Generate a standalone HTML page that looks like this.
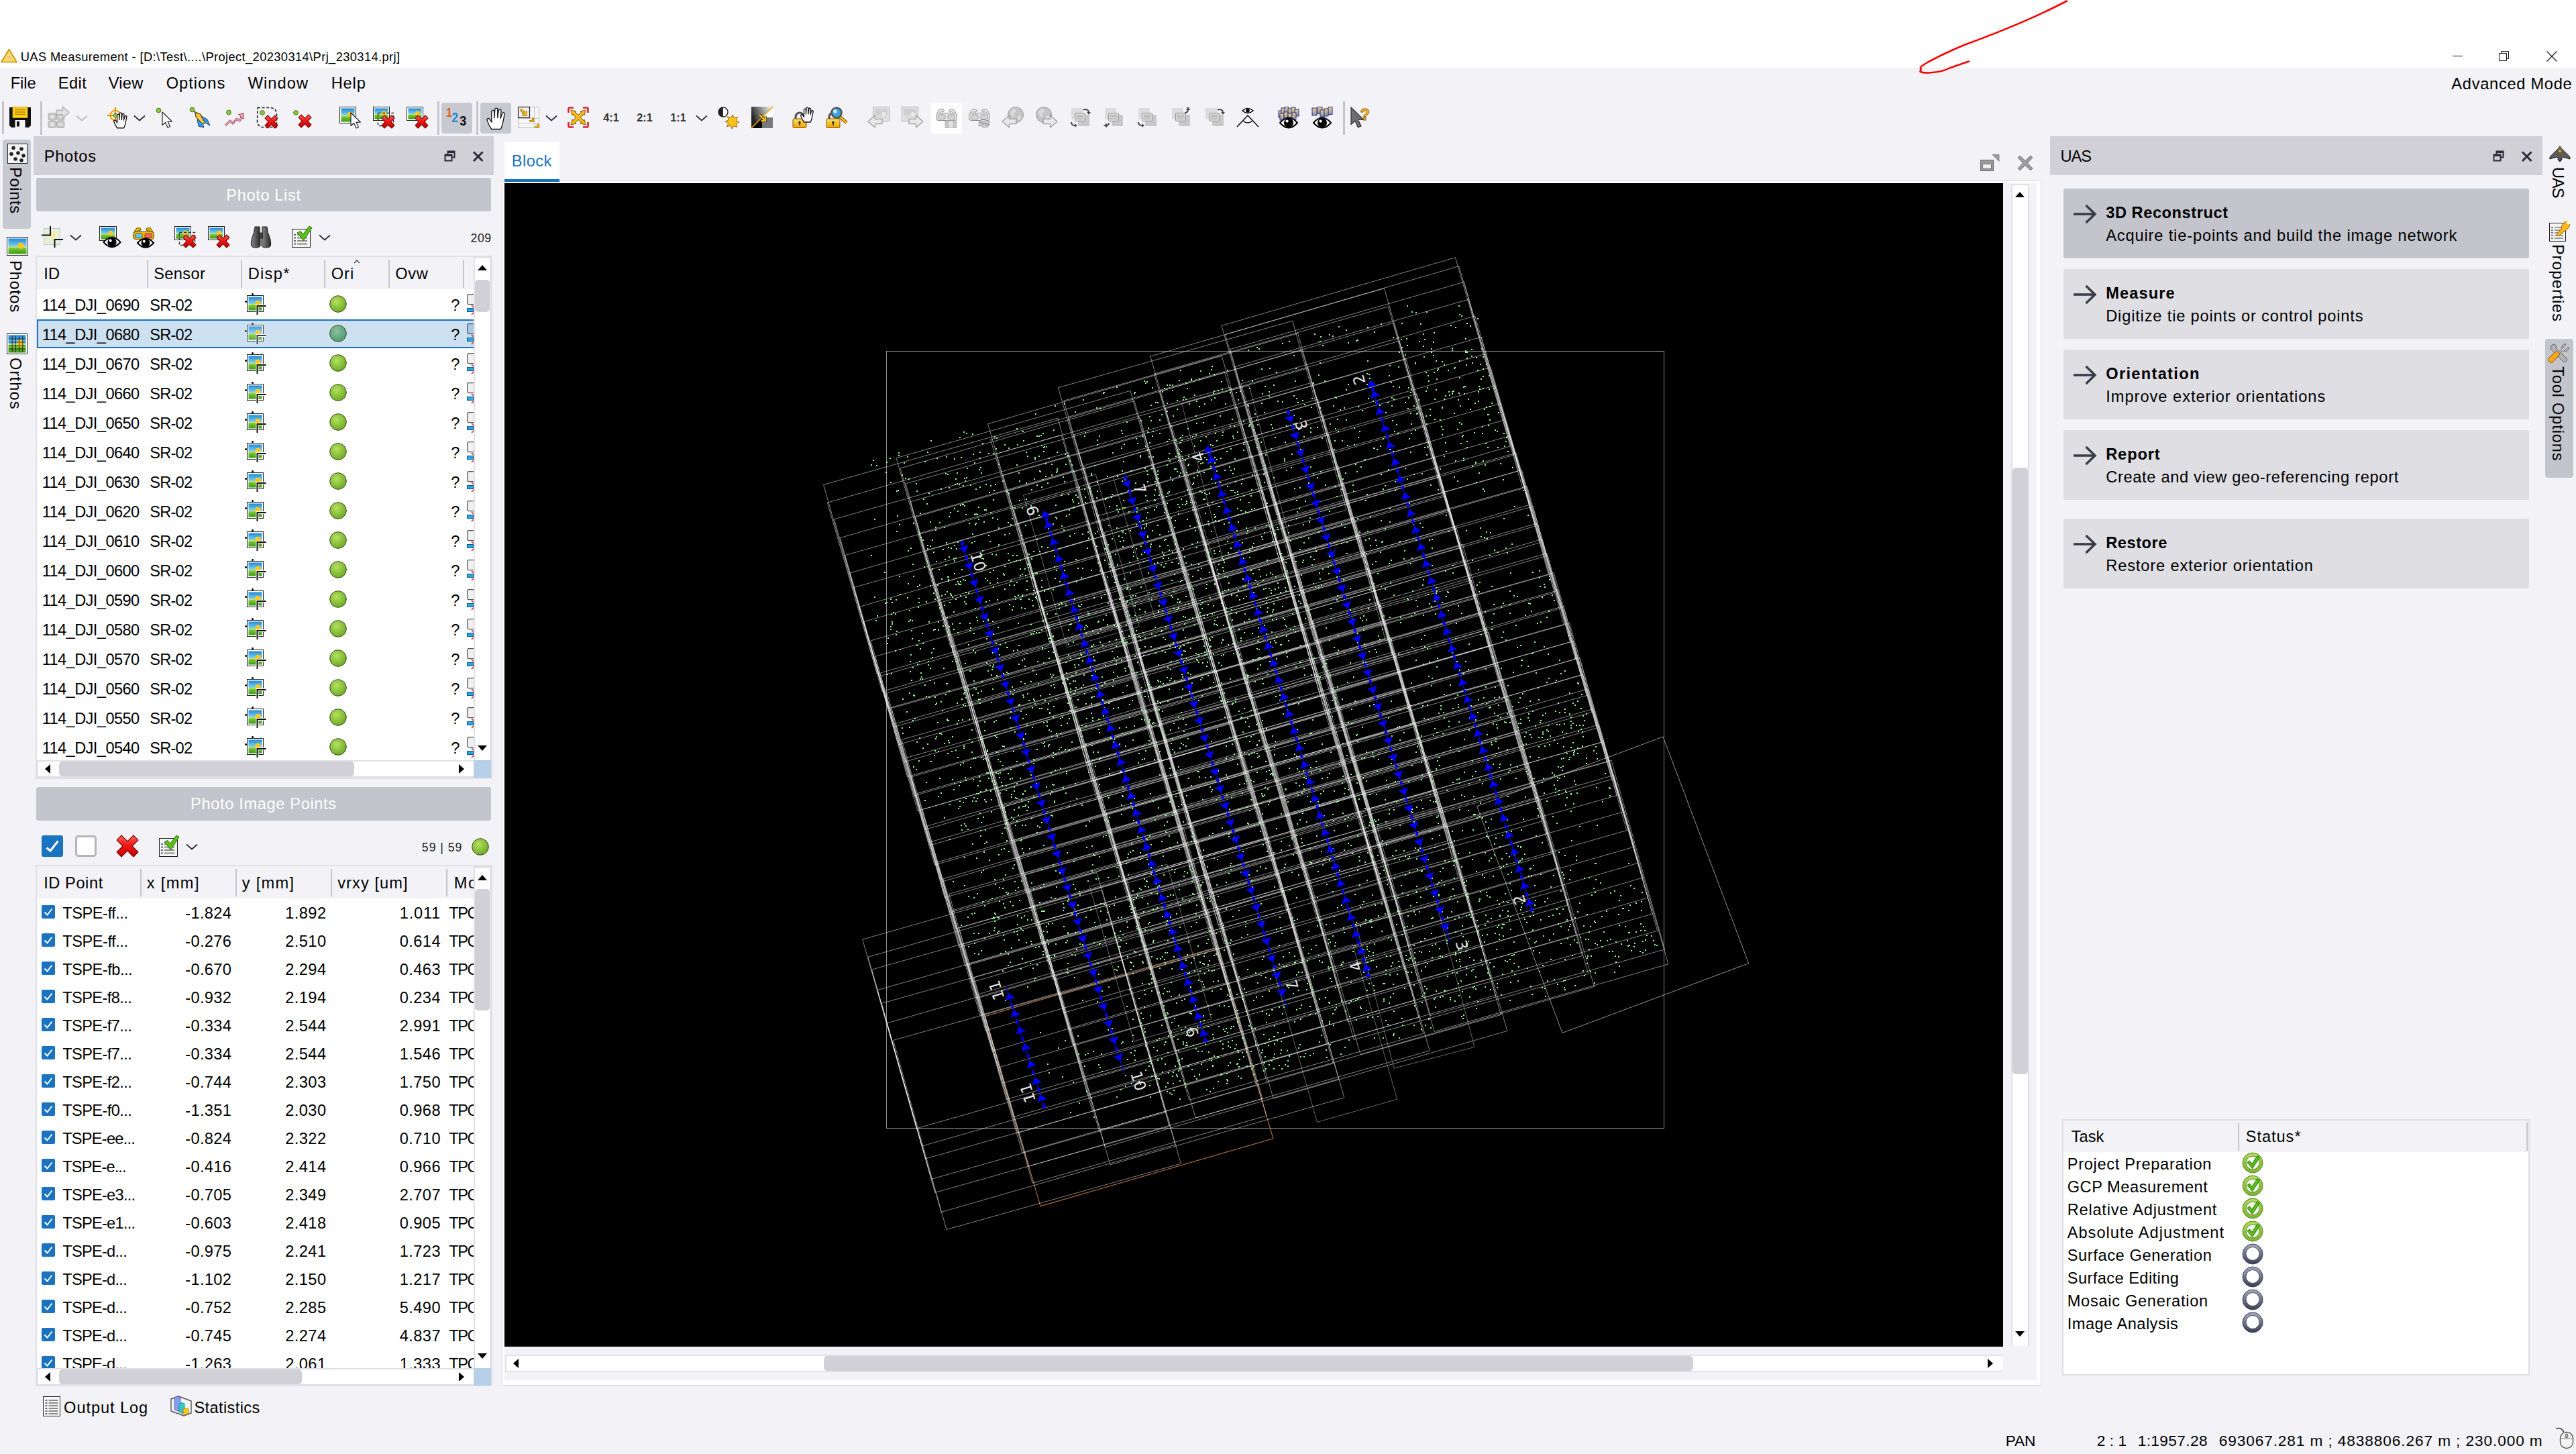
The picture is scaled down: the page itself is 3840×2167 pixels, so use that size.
<!DOCTYPE html>
<html><head><meta charset="utf-8"><title>UAS Measurement</title>
<style>
html,body{margin:0;padding:0}
body{width:3840px;height:2167px;position:relative;overflow:hidden;background:#f3f3f7;font-family:"Liberation Sans",sans-serif}
.b{position:absolute;display:block}
.t{position:absolute;display:block;line-height:1;white-space:pre}
</style></head><body>
<div class="b" style="left:0px;top:0px;width:3840px;height:101px;background:#fff;"></div>
<span class="t" style="font-size:18.32px;letter-spacing:0.379px;color:#000;left:30.70px;top:76.00px;">UAS Measurement - [D:\Test\....\Project_20230314\Prj_230314.prj]</span>
<div class="b" style="left:3656px;top:83px;width:15px;height:1px;background:#111;"></div>
<svg class="b" style="left:3724px;top:75px;" width="18" height="18" viewBox="0 0 18 18"><path d="M1.5 4.5h11v11h-11zM4.5 4.5v-3h11v11h-3" fill="none" stroke="#111" stroke-width="1"/></svg>
<svg class="b" style="left:3795px;top:75px;" width="18" height="18" viewBox="0 0 18 18"><path d="M1.5 1.5l15 15M16.5 1.5l-15 15" fill="none" stroke="#111" stroke-width="1.1"/></svg>
<svg class="b" style="left:2840px;top:0px;" width="260" height="120" viewBox="0 0 260 120"><path d="M241 1.5 C190 28 140 48 88 67 C60 79 40 89 30 95 C25 98 22 100 23 102 C25 104 22 105 22.5 106.5 C24 108 30 108.8 38 108.3 C50 107.5 60 105 66 101.5 C76 98 86 94.5 95 91.5" fill="none" stroke="#f00" stroke-width="2.6" stroke-linecap="round" stroke-linejoin="round"/></svg>
<span class="t" style="font-size:23.64px;letter-spacing:-0.025px;color:#000;left:15.70px;top:113.00px;">File</span>
<span class="t" style="font-size:23.64px;letter-spacing:0.466px;color:#000;left:86.70px;top:113.00px;">Edit</span>
<span class="t" style="font-size:23.64px;letter-spacing:0.298px;color:#000;left:161.70px;top:113.00px;">View</span>
<span class="t" style="font-size:23.64px;letter-spacing:1.021px;color:#000;left:247.70px;top:113.00px;">Options</span>
<span class="t" style="font-size:23.64px;letter-spacing:1.055px;color:#000;left:369.70px;top:113.00px;">Window</span>
<span class="t" style="font-size:23.64px;letter-spacing:0.832px;color:#000;left:493.70px;top:113.00px;">Help</span>
<span class="t" style="font-size:23.64px;letter-spacing:0.716px;color:#000;left:3654.34px;top:114.00px;">Advanced Mode</span>
<div class="b" style="left:3px;top:151px;width:3px;height:49px;background:#c4c4cc;"></div>
<div class="b" style="left:60px;top:151px;width:3px;height:49.5px;background:#c4c4cc;"></div>
<div class="b" style="left:652px;top:151px;width:3px;height:49.5px;background:#c4c4cc;"></div>
<div class="b" style="left:710px;top:151px;width:3px;height:49.5px;background:#c4c4cc;"></div>
<div class="b" style="left:2001.5px;top:151px;width:3.0px;height:49.5px;background:#c4c4cc;"></div>
<div class="b" style="left:658px;top:153px;width:46px;height:46px;background:#c8c8d0;border-radius:4px"></div>
<div class="b" style="left:716px;top:153px;width:46px;height:46px;background:#c8c8d0;border-radius:4px"></div>
<div class="b" style="left:1388px;top:153px;width:46px;height:46px;background:#fff;border-radius:4px"></div>
<div class="b" style="left:4px;top:207.5px;width:42px;height:133.0px;background:#c8c8d0;border-radius:4px"></div>
<span class="t" style="font-size:23.64px;letter-spacing:0.661px;color:#000;left:34.31px;top:249.20px;transform-origin:0 0;transform:rotate(90deg);">Points</span>
<span class="t" style="font-size:23.64px;letter-spacing:0.749px;color:#000;left:34.31px;top:388.20px;transform-origin:0 0;transform:rotate(90deg);">Photos</span>
<span class="t" style="font-size:23.64px;letter-spacing:1.115px;color:#000;left:34.31px;top:533.20px;transform-origin:0 0;transform:rotate(90deg);">Orthos</span>
<div class="b" style="left:50px;top:203px;width:686px;height:57.5px;background:#d0d0d6;"></div>
<span class="t" style="font-size:23.64px;letter-spacing:0.749px;color:#000;left:65.70px;top:222.00px;">Photos</span>
<div class="b" style="left:54px;top:265px;width:678px;height:49.5px;background:#c4c4cc;border-radius:3px"></div>
<span class="t" style="font-size:23.64px;letter-spacing:0.619px;color:#fff;left:337.34px;top:280.00px;">Photo List</span>
<span class="t" style="font-size:17.73px;letter-spacing:0.431px;color:#222;left:701.62px;top:347.00px;">209</span>
<div class="b" style="left:52.5px;top:381px;width:681.5px;height:779.5px;background:#e0e0e6;"></div>
<div class="b" style="left:54.5px;top:383px;width:651.5px;height:48px;background:#f3f3f7;"></div>
<div class="b" style="left:54.5px;top:431px;width:651.5px;height:702px;background:#fff;"></div>
<div class="b" style="left:219px;top:387px;width:2px;height:42px;background:#c4c4cc;"></div>
<div class="b" style="left:359px;top:387px;width:2px;height:42px;background:#c4c4cc;"></div>
<div class="b" style="left:482.5px;top:387px;width:2.0px;height:42px;background:#c4c4cc;"></div>
<div class="b" style="left:579px;top:387px;width:2px;height:42px;background:#c4c4cc;"></div>
<div class="b" style="left:689.7px;top:387px;width:2.0px;height:42px;background:#c4c4cc;"></div>
<span class="t" style="font-size:23.64px;letter-spacing:0.274px;color:#000;left:65.20px;top:397.00px;">ID</span>
<span class="t" style="font-size:23.64px;letter-spacing:0.367px;color:#000;left:229.20px;top:397.00px;">Sensor</span>
<span class="t" style="font-size:23.64px;letter-spacing:1.295px;color:#000;left:369.70px;top:397.00px;">Disp*</span>
<span class="t" style="font-size:23.64px;letter-spacing:1.016px;color:#000;left:493.70px;top:397.00px;">Ori</span>
<span class="t" style="font-size:23.64px;letter-spacing:0.701px;color:#000;left:589.20px;top:397.00px;">Ovw</span>
<svg class="b" style="left:527px;top:387px;" width="10" height="6" viewBox="0 0 10 6"><path d="M1 5L5 1L9 5" fill="none" stroke="#333" stroke-width="1.2"/></svg>
<div class="b" style="left:54.5px;top:475.5px;width:651.5px;height:43.5px;background:#1a73c0;"></div>
<div class="b" style="left:56.5px;top:477.5px;width:649.5px;height:39.5px;background:#cde0f0;"></div>
<span class="t" style="font-size:23.64px;letter-spacing:-0.586px;color:#000;left:62.70px;top:444.00px;">114_DJI_0690</span>
<span class="t" style="font-size:23.64px;letter-spacing:-0.766px;color:#000;left:223.20px;top:444.00px;">SR-02</span>
<span class="t" style="font-size:23.64px;letter-spacing:-2.847px;color:#000;left:672.20px;top:444.00px;">?</span>
<span class="t" style="font-size:23.64px;letter-spacing:-0.586px;color:#000;left:62.70px;top:488.00px;">114_DJI_0680</span>
<span class="t" style="font-size:23.64px;letter-spacing:-0.766px;color:#000;left:223.20px;top:488.00px;">SR-02</span>
<span class="t" style="font-size:23.64px;letter-spacing:-2.847px;color:#000;left:672.20px;top:488.00px;">?</span>
<span class="t" style="font-size:23.64px;letter-spacing:-0.586px;color:#000;left:62.70px;top:532.00px;">114_DJI_0670</span>
<span class="t" style="font-size:23.64px;letter-spacing:-0.766px;color:#000;left:223.20px;top:532.00px;">SR-02</span>
<span class="t" style="font-size:23.64px;letter-spacing:-2.847px;color:#000;left:672.20px;top:532.00px;">?</span>
<span class="t" style="font-size:23.64px;letter-spacing:-0.586px;color:#000;left:62.70px;top:576.00px;">114_DJI_0660</span>
<span class="t" style="font-size:23.64px;letter-spacing:-0.766px;color:#000;left:223.20px;top:576.00px;">SR-02</span>
<span class="t" style="font-size:23.64px;letter-spacing:-2.847px;color:#000;left:672.20px;top:576.00px;">?</span>
<span class="t" style="font-size:23.64px;letter-spacing:-0.586px;color:#000;left:62.70px;top:620.00px;">114_DJI_0650</span>
<span class="t" style="font-size:23.64px;letter-spacing:-0.766px;color:#000;left:223.20px;top:620.00px;">SR-02</span>
<span class="t" style="font-size:23.64px;letter-spacing:-2.847px;color:#000;left:672.20px;top:620.00px;">?</span>
<span class="t" style="font-size:23.64px;letter-spacing:-0.586px;color:#000;left:62.70px;top:664.00px;">114_DJI_0640</span>
<span class="t" style="font-size:23.64px;letter-spacing:-0.766px;color:#000;left:223.20px;top:664.00px;">SR-02</span>
<span class="t" style="font-size:23.64px;letter-spacing:-2.847px;color:#000;left:672.20px;top:664.00px;">?</span>
<span class="t" style="font-size:23.64px;letter-spacing:-0.586px;color:#000;left:62.70px;top:708.00px;">114_DJI_0630</span>
<span class="t" style="font-size:23.64px;letter-spacing:-0.766px;color:#000;left:223.20px;top:708.00px;">SR-02</span>
<span class="t" style="font-size:23.64px;letter-spacing:-2.847px;color:#000;left:672.20px;top:708.00px;">?</span>
<span class="t" style="font-size:23.64px;letter-spacing:-0.586px;color:#000;left:62.70px;top:752.00px;">114_DJI_0620</span>
<span class="t" style="font-size:23.64px;letter-spacing:-0.766px;color:#000;left:223.20px;top:752.00px;">SR-02</span>
<span class="t" style="font-size:23.64px;letter-spacing:-2.847px;color:#000;left:672.20px;top:752.00px;">?</span>
<span class="t" style="font-size:23.64px;letter-spacing:-0.586px;color:#000;left:62.70px;top:796.00px;">114_DJI_0610</span>
<span class="t" style="font-size:23.64px;letter-spacing:-0.766px;color:#000;left:223.20px;top:796.00px;">SR-02</span>
<span class="t" style="font-size:23.64px;letter-spacing:-2.847px;color:#000;left:672.20px;top:796.00px;">?</span>
<span class="t" style="font-size:23.64px;letter-spacing:-0.586px;color:#000;left:62.70px;top:840.00px;">114_DJI_0600</span>
<span class="t" style="font-size:23.64px;letter-spacing:-0.766px;color:#000;left:223.20px;top:840.00px;">SR-02</span>
<span class="t" style="font-size:23.64px;letter-spacing:-2.847px;color:#000;left:672.20px;top:840.00px;">?</span>
<span class="t" style="font-size:23.64px;letter-spacing:-0.586px;color:#000;left:62.70px;top:884.00px;">114_DJI_0590</span>
<span class="t" style="font-size:23.64px;letter-spacing:-0.766px;color:#000;left:223.20px;top:884.00px;">SR-02</span>
<span class="t" style="font-size:23.64px;letter-spacing:-2.847px;color:#000;left:672.20px;top:884.00px;">?</span>
<span class="t" style="font-size:23.64px;letter-spacing:-0.586px;color:#000;left:62.70px;top:928.00px;">114_DJI_0580</span>
<span class="t" style="font-size:23.64px;letter-spacing:-0.766px;color:#000;left:223.20px;top:928.00px;">SR-02</span>
<span class="t" style="font-size:23.64px;letter-spacing:-2.847px;color:#000;left:672.20px;top:928.00px;">?</span>
<span class="t" style="font-size:23.64px;letter-spacing:-0.586px;color:#000;left:62.70px;top:972.00px;">114_DJI_0570</span>
<span class="t" style="font-size:23.64px;letter-spacing:-0.766px;color:#000;left:223.20px;top:972.00px;">SR-02</span>
<span class="t" style="font-size:23.64px;letter-spacing:-2.847px;color:#000;left:672.20px;top:972.00px;">?</span>
<span class="t" style="font-size:23.64px;letter-spacing:-0.586px;color:#000;left:62.70px;top:1016.00px;">114_DJI_0560</span>
<span class="t" style="font-size:23.64px;letter-spacing:-0.766px;color:#000;left:223.20px;top:1016.00px;">SR-02</span>
<span class="t" style="font-size:23.64px;letter-spacing:-2.847px;color:#000;left:672.20px;top:1016.00px;">?</span>
<span class="t" style="font-size:23.64px;letter-spacing:-0.586px;color:#000;left:62.70px;top:1060.00px;">114_DJI_0550</span>
<span class="t" style="font-size:23.64px;letter-spacing:-0.766px;color:#000;left:223.20px;top:1060.00px;">SR-02</span>
<span class="t" style="font-size:23.64px;letter-spacing:-2.847px;color:#000;left:672.20px;top:1060.00px;">?</span>
<span class="t" style="font-size:23.64px;letter-spacing:-0.586px;color:#000;left:62.70px;top:1104.00px;">114_DJI_0540</span>
<span class="t" style="font-size:23.64px;letter-spacing:-0.766px;color:#000;left:223.20px;top:1104.00px;">SR-02</span>
<span class="t" style="font-size:23.64px;letter-spacing:-2.847px;color:#000;left:672.20px;top:1104.00px;">?</span>
<div class="b" style="left:705.7px;top:383px;width:26.5px;height:750px;background:#e0e0e6;"></div>
<div class="b" style="left:707.7px;top:385px;width:22.5px;height:748px;background:#fff;"></div>
<svg class="b" style="left:711.7px;top:395px;" width="14" height="8" viewBox="0 0 14 8"><path d="M0 8L7 0L14 8z" fill="#000"/></svg>
<svg class="b" style="left:711.7px;top:1111px;" width="14" height="8" viewBox="0 0 14 8"><path d="M0 0L7 8L14 0z" fill="#000"/></svg>
<div class="b" style="left:707.7px;top:417px;width:22.5px;height:47.5px;background:#d0d0d6;border-radius:5px"></div>
<div class="b" style="left:54.5px;top:1133px;width:651.5px;height:26px;background:#e0e0e6;"></div>
<div class="b" style="left:56.5px;top:1135px;width:649.5px;height:22px;background:#fff;"></div>
<svg class="b" style="left:66.5px;top:1139px;" width="8" height="14" viewBox="0 0 8 14"><path d="M8 0L0 7L8 14z" fill="#000"/></svg>
<svg class="b" style="left:684px;top:1139px;" width="8" height="14" viewBox="0 0 8 14"><path d="M0 0L8 7L0 14z" fill="#000"/></svg>
<div class="b" style="left:88px;top:1135px;width:440px;height:22px;background:#d0d0d6;border-radius:5px"></div>
<div class="b" style="left:705.6px;top:1133.4px;width:26.399999999999977px;height:25.59999999999991px;background:#b4cfe6;"></div>
<div class="b" style="left:54px;top:1173px;width:678px;height:49.5px;background:#c4c4cc;border-radius:3px"></div>
<span class="t" style="font-size:23.64px;letter-spacing:0.635px;color:#fff;left:284.12px;top:1187.00px;">Photo Image Points</span>
<span class="t" style="font-size:17.73px;letter-spacing:0.933px;color:#222;left:628.87px;top:1255.00px;">59 | 59</span>
<div class="b" style="left:52.5px;top:1289px;width:681.5px;height:777px;background:#e0e0e6;"></div>
<div class="b" style="left:54.5px;top:1291px;width:651.5px;height:48px;background:#f3f3f7;"></div>
<div class="b" style="left:54.5px;top:1339px;width:651.5px;height:700px;background:#fff;"></div>
<div class="b" style="left:208.75px;top:1295px;width:2.0px;height:41px;background:#c4c4cc;"></div>
<div class="b" style="left:350.75px;top:1295px;width:2.0px;height:41px;background:#c4c4cc;"></div>
<div class="b" style="left:492.5px;top:1295px;width:2.0px;height:41px;background:#c4c4cc;"></div>
<div class="b" style="left:664.5px;top:1295px;width:2.0px;height:41px;background:#c4c4cc;"></div>
<span class="t" style="font-size:23.64px;letter-spacing:0.569px;color:#000;left:65.20px;top:1305.00px;">ID Point</span>
<span class="t" style="font-size:23.64px;letter-spacing:1.391px;color:#000;left:218.70px;top:1305.00px;">x [mm]</span>
<span class="t" style="font-size:23.64px;letter-spacing:1.311px;color:#000;left:360.70px;top:1305.00px;">y [mm]</span>
<span class="t" style="font-size:23.64px;letter-spacing:1.078px;color:#000;left:503.20px;top:1305.00px;">vrxy [um]</span>
<div class="b" style="left:54.5px;top:1339px;width:651.5px;height:700px;overflow:hidden">
<svg class="b" style="left:7.5px;top:10.0px" width="20" height="20" viewBox="0 0 20 20"><rect width="20" height="20" rx="2" fill="#1a73c0"/><path d="M4.5 10.5L8.5 14.5L15.5 5.5" fill="none" stroke="#fff" stroke-width="2"/></svg>
<span class="t" style="font-size:23.64px;letter-spacing:-0.463px;color:#000;left:38.70px;top:11.00px;">TSPE-ff...</span>
<span class="t" style="font-size:23.64px;letter-spacing:0.328px;color:#000;left:221.75px;top:11.00px;">-1.824</span>
<span class="t" style="font-size:23.64px;letter-spacing:0.424px;color:#000;left:370.72px;top:11.00px;">1.892</span>
<span class="t" style="font-size:23.64px;letter-spacing:0.775px;color:#000;left:541.22px;top:11.00px;">1.011</span>
<span class="t" style="font-size:23.64px;letter-spacing:-1.472px;color:#000;left:614.70px;top:11.00px;">TPC</span>
<svg class="b" style="left:7.5px;top:52.0px" width="20" height="20" viewBox="0 0 20 20"><rect width="20" height="20" rx="2" fill="#1a73c0"/><path d="M4.5 10.5L8.5 14.5L15.5 5.5" fill="none" stroke="#fff" stroke-width="2"/></svg>
<span class="t" style="font-size:23.64px;letter-spacing:-0.463px;color:#000;left:38.70px;top:53.00px;">TSPE-ff...</span>
<span class="t" style="font-size:23.64px;letter-spacing:0.328px;color:#000;left:221.75px;top:53.00px;">-0.276</span>
<span class="t" style="font-size:23.64px;letter-spacing:0.424px;color:#000;left:370.72px;top:53.00px;">2.510</span>
<span class="t" style="font-size:23.64px;letter-spacing:0.424px;color:#000;left:541.22px;top:53.00px;">0.614</span>
<span class="t" style="font-size:23.64px;letter-spacing:-1.472px;color:#000;left:614.70px;top:53.00px;">TPC</span>
<svg class="b" style="left:7.5px;top:94.0px" width="20" height="20" viewBox="0 0 20 20"><rect width="20" height="20" rx="2" fill="#1a73c0"/><path d="M4.5 10.5L8.5 14.5L15.5 5.5" fill="none" stroke="#fff" stroke-width="2"/></svg>
<span class="t" style="font-size:23.64px;letter-spacing:-0.507px;color:#000;left:38.70px;top:95.00px;">TSPE-fb...</span>
<span class="t" style="font-size:23.64px;letter-spacing:0.328px;color:#000;left:221.75px;top:95.00px;">-0.670</span>
<span class="t" style="font-size:23.64px;letter-spacing:0.424px;color:#000;left:370.72px;top:95.00px;">2.294</span>
<span class="t" style="font-size:23.64px;letter-spacing:0.424px;color:#000;left:541.22px;top:95.00px;">0.463</span>
<span class="t" style="font-size:23.64px;letter-spacing:-1.472px;color:#000;left:614.70px;top:95.00px;">TPC</span>
<svg class="b" style="left:7.5px;top:136.0px" width="20" height="20" viewBox="0 0 20 20"><rect width="20" height="20" rx="2" fill="#1a73c0"/><path d="M4.5 10.5L8.5 14.5L15.5 5.5" fill="none" stroke="#fff" stroke-width="2"/></svg>
<span class="t" style="font-size:23.64px;letter-spacing:-0.605px;color:#000;left:38.70px;top:137.00px;">TSPE-f8...</span>
<span class="t" style="font-size:23.64px;letter-spacing:0.328px;color:#000;left:221.75px;top:137.00px;">-0.932</span>
<span class="t" style="font-size:23.64px;letter-spacing:0.424px;color:#000;left:370.72px;top:137.00px;">2.194</span>
<span class="t" style="font-size:23.64px;letter-spacing:0.424px;color:#000;left:541.22px;top:137.00px;">0.234</span>
<span class="t" style="font-size:23.64px;letter-spacing:-1.472px;color:#000;left:614.70px;top:137.00px;">TPC</span>
<svg class="b" style="left:7.5px;top:178.0px" width="20" height="20" viewBox="0 0 20 20"><rect width="20" height="20" rx="2" fill="#1a73c0"/><path d="M4.5 10.5L8.5 14.5L15.5 5.5" fill="none" stroke="#fff" stroke-width="2"/></svg>
<span class="t" style="font-size:23.64px;letter-spacing:-0.605px;color:#000;left:38.70px;top:179.00px;">TSPE-f7...</span>
<span class="t" style="font-size:23.64px;letter-spacing:0.328px;color:#000;left:221.75px;top:179.00px;">-0.334</span>
<span class="t" style="font-size:23.64px;letter-spacing:0.424px;color:#000;left:370.72px;top:179.00px;">2.544</span>
<span class="t" style="font-size:23.64px;letter-spacing:0.424px;color:#000;left:541.22px;top:179.00px;">2.991</span>
<span class="t" style="font-size:23.64px;letter-spacing:-1.472px;color:#000;left:614.70px;top:179.00px;">TPC</span>
<svg class="b" style="left:7.5px;top:220.0px" width="20" height="20" viewBox="0 0 20 20"><rect width="20" height="20" rx="2" fill="#1a73c0"/><path d="M4.5 10.5L8.5 14.5L15.5 5.5" fill="none" stroke="#fff" stroke-width="2"/></svg>
<span class="t" style="font-size:23.64px;letter-spacing:-0.605px;color:#000;left:38.70px;top:221.00px;">TSPE-f7...</span>
<span class="t" style="font-size:23.64px;letter-spacing:0.328px;color:#000;left:221.75px;top:221.00px;">-0.334</span>
<span class="t" style="font-size:23.64px;letter-spacing:0.424px;color:#000;left:370.72px;top:221.00px;">2.544</span>
<span class="t" style="font-size:23.64px;letter-spacing:0.424px;color:#000;left:541.22px;top:221.00px;">1.546</span>
<span class="t" style="font-size:23.64px;letter-spacing:-1.472px;color:#000;left:614.70px;top:221.00px;">TPC</span>
<svg class="b" style="left:7.5px;top:262.0px" width="20" height="20" viewBox="0 0 20 20"><rect width="20" height="20" rx="2" fill="#1a73c0"/><path d="M4.5 10.5L8.5 14.5L15.5 5.5" fill="none" stroke="#fff" stroke-width="2"/></svg>
<span class="t" style="font-size:23.64px;letter-spacing:-0.605px;color:#000;left:38.70px;top:263.00px;">TSPE-f2...</span>
<span class="t" style="font-size:23.64px;letter-spacing:0.328px;color:#000;left:221.75px;top:263.00px;">-0.744</span>
<span class="t" style="font-size:23.64px;letter-spacing:0.424px;color:#000;left:370.72px;top:263.00px;">2.303</span>
<span class="t" style="font-size:23.64px;letter-spacing:0.424px;color:#000;left:541.22px;top:263.00px;">1.750</span>
<span class="t" style="font-size:23.64px;letter-spacing:-1.472px;color:#000;left:614.70px;top:263.00px;">TPC</span>
<svg class="b" style="left:7.5px;top:304.0px" width="20" height="20" viewBox="0 0 20 20"><rect width="20" height="20" rx="2" fill="#1a73c0"/><path d="M4.5 10.5L8.5 14.5L15.5 5.5" fill="none" stroke="#fff" stroke-width="2"/></svg>
<span class="t" style="font-size:23.64px;letter-spacing:-0.605px;color:#000;left:38.70px;top:305.00px;">TSPE-f0...</span>
<span class="t" style="font-size:23.64px;letter-spacing:0.328px;color:#000;left:221.75px;top:305.00px;">-1.351</span>
<span class="t" style="font-size:23.64px;letter-spacing:0.424px;color:#000;left:370.72px;top:305.00px;">2.030</span>
<span class="t" style="font-size:23.64px;letter-spacing:0.424px;color:#000;left:541.22px;top:305.00px;">0.968</span>
<span class="t" style="font-size:23.64px;letter-spacing:-1.472px;color:#000;left:614.70px;top:305.00px;">TPC</span>
<svg class="b" style="left:7.5px;top:346.0px" width="20" height="20" viewBox="0 0 20 20"><rect width="20" height="20" rx="2" fill="#1a73c0"/><path d="M4.5 10.5L8.5 14.5L15.5 5.5" fill="none" stroke="#fff" stroke-width="2"/></svg>
<span class="t" style="font-size:23.64px;letter-spacing:-0.756px;color:#000;left:38.70px;top:347.00px;">TSPE-ee...</span>
<span class="t" style="font-size:23.64px;letter-spacing:0.328px;color:#000;left:221.75px;top:347.00px;">-0.824</span>
<span class="t" style="font-size:23.64px;letter-spacing:0.424px;color:#000;left:370.72px;top:347.00px;">2.322</span>
<span class="t" style="font-size:23.64px;letter-spacing:0.424px;color:#000;left:541.22px;top:347.00px;">0.710</span>
<span class="t" style="font-size:23.64px;letter-spacing:-1.472px;color:#000;left:614.70px;top:347.00px;">TPC</span>
<svg class="b" style="left:7.5px;top:388.0px" width="20" height="20" viewBox="0 0 20 20"><rect width="20" height="20" rx="2" fill="#1a73c0"/><path d="M4.5 10.5L8.5 14.5L15.5 5.5" fill="none" stroke="#fff" stroke-width="2"/></svg>
<span class="t" style="font-size:23.64px;letter-spacing:-0.875px;color:#000;left:38.70px;top:389.00px;">TSPE-e...</span>
<span class="t" style="font-size:23.64px;letter-spacing:0.328px;color:#000;left:221.75px;top:389.00px;">-0.416</span>
<span class="t" style="font-size:23.64px;letter-spacing:0.424px;color:#000;left:370.72px;top:389.00px;">2.414</span>
<span class="t" style="font-size:23.64px;letter-spacing:0.424px;color:#000;left:541.22px;top:389.00px;">0.966</span>
<span class="t" style="font-size:23.64px;letter-spacing:-1.472px;color:#000;left:614.70px;top:389.00px;">TPC</span>
<svg class="b" style="left:7.5px;top:430.0px" width="20" height="20" viewBox="0 0 20 20"><rect width="20" height="20" rx="2" fill="#1a73c0"/><path d="M4.5 10.5L8.5 14.5L15.5 5.5" fill="none" stroke="#fff" stroke-width="2"/></svg>
<span class="t" style="font-size:23.64px;letter-spacing:-0.730px;color:#000;left:38.70px;top:431.00px;">TSPE-e3...</span>
<span class="t" style="font-size:23.64px;letter-spacing:0.328px;color:#000;left:221.75px;top:431.00px;">-0.705</span>
<span class="t" style="font-size:23.64px;letter-spacing:0.424px;color:#000;left:370.72px;top:431.00px;">2.349</span>
<span class="t" style="font-size:23.64px;letter-spacing:0.424px;color:#000;left:541.22px;top:431.00px;">2.707</span>
<span class="t" style="font-size:23.64px;letter-spacing:-1.472px;color:#000;left:614.70px;top:431.00px;">TPC</span>
<svg class="b" style="left:7.5px;top:472.0px" width="20" height="20" viewBox="0 0 20 20"><rect width="20" height="20" rx="2" fill="#1a73c0"/><path d="M4.5 10.5L8.5 14.5L15.5 5.5" fill="none" stroke="#fff" stroke-width="2"/></svg>
<span class="t" style="font-size:23.64px;letter-spacing:-0.730px;color:#000;left:38.70px;top:473.00px;">TSPE-e1...</span>
<span class="t" style="font-size:23.64px;letter-spacing:0.328px;color:#000;left:221.75px;top:473.00px;">-0.603</span>
<span class="t" style="font-size:23.64px;letter-spacing:0.424px;color:#000;left:370.72px;top:473.00px;">2.418</span>
<span class="t" style="font-size:23.64px;letter-spacing:0.424px;color:#000;left:541.22px;top:473.00px;">0.905</span>
<span class="t" style="font-size:23.64px;letter-spacing:-1.472px;color:#000;left:614.70px;top:473.00px;">TPC</span>
<svg class="b" style="left:7.5px;top:514.0px" width="20" height="20" viewBox="0 0 20 20"><rect width="20" height="20" rx="2" fill="#1a73c0"/><path d="M4.5 10.5L8.5 14.5L15.5 5.5" fill="none" stroke="#fff" stroke-width="2"/></svg>
<span class="t" style="font-size:23.64px;letter-spacing:-0.737px;color:#000;left:38.70px;top:515.00px;">TSPE-d...</span>
<span class="t" style="font-size:23.64px;letter-spacing:0.328px;color:#000;left:221.75px;top:515.00px;">-0.975</span>
<span class="t" style="font-size:23.64px;letter-spacing:0.424px;color:#000;left:370.72px;top:515.00px;">2.241</span>
<span class="t" style="font-size:23.64px;letter-spacing:0.424px;color:#000;left:541.22px;top:515.00px;">1.723</span>
<span class="t" style="font-size:23.64px;letter-spacing:-1.472px;color:#000;left:614.70px;top:515.00px;">TPC</span>
<svg class="b" style="left:7.5px;top:556.0px" width="20" height="20" viewBox="0 0 20 20"><rect width="20" height="20" rx="2" fill="#1a73c0"/><path d="M4.5 10.5L8.5 14.5L15.5 5.5" fill="none" stroke="#fff" stroke-width="2"/></svg>
<span class="t" style="font-size:23.64px;letter-spacing:-0.737px;color:#000;left:38.70px;top:557.00px;">TSPE-d...</span>
<span class="t" style="font-size:23.64px;letter-spacing:0.328px;color:#000;left:221.75px;top:557.00px;">-1.102</span>
<span class="t" style="font-size:23.64px;letter-spacing:0.424px;color:#000;left:370.72px;top:557.00px;">2.150</span>
<span class="t" style="font-size:23.64px;letter-spacing:0.424px;color:#000;left:541.22px;top:557.00px;">1.217</span>
<span class="t" style="font-size:23.64px;letter-spacing:-1.472px;color:#000;left:614.70px;top:557.00px;">TPC</span>
<svg class="b" style="left:7.5px;top:598.0px" width="20" height="20" viewBox="0 0 20 20"><rect width="20" height="20" rx="2" fill="#1a73c0"/><path d="M4.5 10.5L8.5 14.5L15.5 5.5" fill="none" stroke="#fff" stroke-width="2"/></svg>
<span class="t" style="font-size:23.64px;letter-spacing:-0.737px;color:#000;left:38.70px;top:599.00px;">TSPE-d...</span>
<span class="t" style="font-size:23.64px;letter-spacing:0.328px;color:#000;left:221.75px;top:599.00px;">-0.752</span>
<span class="t" style="font-size:23.64px;letter-spacing:0.424px;color:#000;left:370.72px;top:599.00px;">2.285</span>
<span class="t" style="font-size:23.64px;letter-spacing:0.424px;color:#000;left:541.22px;top:599.00px;">5.490</span>
<span class="t" style="font-size:23.64px;letter-spacing:-1.472px;color:#000;left:614.70px;top:599.00px;">TPC</span>
<svg class="b" style="left:7.5px;top:640.0px" width="20" height="20" viewBox="0 0 20 20"><rect width="20" height="20" rx="2" fill="#1a73c0"/><path d="M4.5 10.5L8.5 14.5L15.5 5.5" fill="none" stroke="#fff" stroke-width="2"/></svg>
<span class="t" style="font-size:23.64px;letter-spacing:-0.737px;color:#000;left:38.70px;top:641.00px;">TSPE-d...</span>
<span class="t" style="font-size:23.64px;letter-spacing:0.328px;color:#000;left:221.75px;top:641.00px;">-0.745</span>
<span class="t" style="font-size:23.64px;letter-spacing:0.424px;color:#000;left:370.72px;top:641.00px;">2.274</span>
<span class="t" style="font-size:23.64px;letter-spacing:0.424px;color:#000;left:541.22px;top:641.00px;">4.837</span>
<span class="t" style="font-size:23.64px;letter-spacing:-1.472px;color:#000;left:614.70px;top:641.00px;">TPC</span>
<svg class="b" style="left:7.5px;top:682.0px" width="20" height="20" viewBox="0 0 20 20"><rect width="20" height="20" rx="2" fill="#1a73c0"/><path d="M4.5 10.5L8.5 14.5L15.5 5.5" fill="none" stroke="#fff" stroke-width="2"/></svg>
<span class="t" style="font-size:23.64px;letter-spacing:-0.737px;color:#000;left:38.70px;top:683.00px;">TSPE-d...</span>
<span class="t" style="font-size:23.64px;letter-spacing:0.328px;color:#000;left:221.75px;top:683.00px;">-1.263</span>
<span class="t" style="font-size:23.64px;letter-spacing:0.424px;color:#000;left:370.72px;top:683.00px;">2.061</span>
<span class="t" style="font-size:23.64px;letter-spacing:0.424px;color:#000;left:541.22px;top:683.00px;">1.333</span>
<span class="t" style="font-size:23.64px;letter-spacing:-1.472px;color:#000;left:614.70px;top:683.00px;">TPC</span>
</div>
<div class="b" style="left:670px;top:1295px;width:36px;height:40px;overflow:hidden">
<span class="t" style="font-size:23.64px;letter-spacing:1.627px;color:#000;left:6.70px;top:10.00px;">Mod</span>
</div>
<div class="b" style="left:705.7px;top:1291.5px;width:26.5px;height:747.5px;background:#e0e0e6;"></div>
<div class="b" style="left:707.7px;top:1293.5px;width:22.5px;height:745.5px;background:#fff;"></div>
<svg class="b" style="left:711.7px;top:1303.5px;" width="14" height="8" viewBox="0 0 14 8"><path d="M0 8L7 0L14 8z" fill="#000"/></svg>
<svg class="b" style="left:711.7px;top:2017px;" width="14" height="8" viewBox="0 0 14 8"><path d="M0 0L7 8L14 0z" fill="#000"/></svg>
<div class="b" style="left:707.7px;top:1325px;width:22.5px;height:181px;background:#d0d0d6;border-radius:5px"></div>
<div class="b" style="left:54.5px;top:2039px;width:651.5px;height:26px;background:#e0e0e6;"></div>
<div class="b" style="left:56.5px;top:2041px;width:649.5px;height:22px;background:#fff;"></div>
<svg class="b" style="left:66.5px;top:2045px;" width="8" height="14" viewBox="0 0 8 14"><path d="M8 0L0 7L8 14z" fill="#000"/></svg>
<svg class="b" style="left:684px;top:2045px;" width="8" height="14" viewBox="0 0 8 14"><path d="M0 0L8 7L0 14z" fill="#000"/></svg>
<div class="b" style="left:88px;top:2041px;width:362px;height:22px;background:#d0d0d6;border-radius:5px"></div>
<div class="b" style="left:705.6px;top:2039px;width:26.799999999999955px;height:25.59999999999991px;background:#b4cfe6;"></div>
<span class="t" style="font-size:23.64px;letter-spacing:0.917px;color:#000;left:95.10px;top:2087.00px;">Output Log</span>
<span class="t" style="font-size:23.64px;letter-spacing:0.382px;color:#000;left:289.40px;top:2087.00px;">Statistics</span>
<div class="b" style="left:748px;top:269px;width:2294.5px;height:1795.5px;background:#d8d8dc;"></div>
<div class="b" style="left:749px;top:270px;width:2292.5px;height:1793.5px;background:#fff;"></div>
<div class="b" style="left:752px;top:273px;width:2284px;height:1784px;background:#f3f3f7;"></div>
<div class="b" style="left:752px;top:211px;width:82px;height:56px;background:#fff;"></div>
<div class="b" style="left:752px;top:267px;width:82px;height:4px;background:#1a73c0;"></div>
<span class="t" style="font-size:23.64px;letter-spacing:0.467px;color:#1a73c0;left:762.70px;top:229.00px;">Block</span>
<div class="b" style="left:752px;top:273px;width:2234px;height:1734px;background:#000;"></div>
<div class="b" style="left:2998px;top:274px;width:26.5px;height:1732px;background:#e0e0e6;"></div>
<div class="b" style="left:3000px;top:276px;width:22.5px;height:1730px;background:#fff;"></div>
<svg class="b" style="left:3004px;top:286px;" width="14" height="8" viewBox="0 0 14 8"><path d="M0 8L7 0L14 8z" fill="#000"/></svg>
<svg class="b" style="left:3004px;top:1984px;" width="14" height="8" viewBox="0 0 14 8"><path d="M0 0L7 8L14 0z" fill="#000"/></svg>
<div class="b" style="left:3000px;top:697px;width:22.5px;height:904px;background:#d0d0d6;border-radius:5px"></div>
<div class="b" style="left:753px;top:2019px;width:2232px;height:26px;background:#e0e0e6;"></div>
<div class="b" style="left:755px;top:2021px;width:2230px;height:22px;background:#fff;"></div>
<svg class="b" style="left:765px;top:2025px;" width="8" height="14" viewBox="0 0 8 14"><path d="M8 0L0 7L8 14z" fill="#000"/></svg>
<svg class="b" style="left:2963px;top:2025px;" width="8" height="14" viewBox="0 0 8 14"><path d="M0 0L8 7L0 14z" fill="#000"/></svg>
<div class="b" style="left:1228px;top:2021px;width:1296px;height:22px;background:#d0d0d6;border-radius:5px"></div>
<div class="b" style="left:3056px;top:203px;width:734px;height:57.5px;background:#d0d0d6;"></div>
<span class="t" style="font-size:23.64px;letter-spacing:-1.004px;color:#000;left:3071.40px;top:222.00px;">UAS</span>
<div class="b" style="left:3076px;top:281px;width:694px;height:103.5px;background:#c4c4cc;border-radius:3px"></div>
<svg class="b" style="left:3089px;top:303px;" width="40" height="32" viewBox="0 0 40 32"><path d="M2 16h32M20.5 3L34 16L20.5 29" fill="none" stroke="#3a3a48" stroke-width="3.4"/></svg>
<span class="t" style="font-size:23.64px;letter-spacing:0.554px;color:#000;font-weight:700;left:3139.20px;top:306.00px;">3D Reconstruct</span>
<span class="t" style="font-size:23.64px;letter-spacing:0.856px;color:#000;left:3139.20px;top:340.00px;">Acquire tie-points and build the image network</span>
<div class="b" style="left:3076px;top:401px;width:694px;height:103.5px;background:#dedee3;border-radius:3px"></div>
<svg class="b" style="left:3089px;top:423px;" width="40" height="32" viewBox="0 0 40 32"><path d="M2 16h32M20.5 3L34 16L20.5 29" fill="none" stroke="#3a3a48" stroke-width="3.4"/></svg>
<span class="t" style="font-size:23.64px;letter-spacing:1.098px;color:#000;font-weight:700;left:3139.20px;top:426.00px;">Measure</span>
<span class="t" style="font-size:23.64px;letter-spacing:0.835px;color:#000;left:3139.20px;top:460.00px;">Digitize tie points or control points</span>
<div class="b" style="left:3076px;top:521px;width:694px;height:103.5px;background:#dedee3;border-radius:3px"></div>
<svg class="b" style="left:3089px;top:543px;" width="40" height="32" viewBox="0 0 40 32"><path d="M2 16h32M20.5 3L34 16L20.5 29" fill="none" stroke="#3a3a48" stroke-width="3.4"/></svg>
<span class="t" style="font-size:23.64px;letter-spacing:1.317px;color:#000;font-weight:700;left:3139.20px;top:546.00px;">Orientation</span>
<span class="t" style="font-size:23.64px;letter-spacing:0.989px;color:#000;left:3139.20px;top:580.00px;">Improve exterior orientations</span>
<div class="b" style="left:3076px;top:641px;width:694px;height:103.5px;background:#dedee3;border-radius:3px"></div>
<svg class="b" style="left:3089px;top:663px;" width="40" height="32" viewBox="0 0 40 32"><path d="M2 16h32M20.5 3L34 16L20.5 29" fill="none" stroke="#3a3a48" stroke-width="3.4"/></svg>
<span class="t" style="font-size:23.64px;letter-spacing:0.869px;color:#000;font-weight:700;left:3139.20px;top:666.00px;">Report</span>
<span class="t" style="font-size:23.64px;letter-spacing:0.677px;color:#000;left:3139.20px;top:700.00px;">Create and view geo-referencing report</span>
<div class="b" style="left:3076px;top:773px;width:694px;height:103.5px;background:#dedee3;border-radius:3px"></div>
<svg class="b" style="left:3089px;top:795px;" width="40" height="32" viewBox="0 0 40 32"><path d="M2 16h32M20.5 3L34 16L20.5 29" fill="none" stroke="#3a3a48" stroke-width="3.4"/></svg>
<span class="t" style="font-size:23.64px;letter-spacing:0.543px;color:#000;font-weight:700;left:3139.20px;top:798.00px;">Restore</span>
<span class="t" style="font-size:23.64px;letter-spacing:0.880px;color:#000;left:3139.20px;top:832.00px;">Restore exterior orientation</span>
<div class="b" style="left:3794px;top:505px;width:42px;height:207px;background:#c4c4cc;border-radius:4px"></div>
<span class="t" style="font-size:23.64px;letter-spacing:-1.004px;color:#000;left:3824.31px;top:249.20px;transform-origin:0 0;transform:rotate(90deg);">UAS</span>
<span class="t" style="font-size:23.64px;letter-spacing:0.794px;color:#000;left:3824.31px;top:363.70px;transform-origin:0 0;transform:rotate(90deg);">Properties</span>
<span class="t" style="font-size:23.64px;letter-spacing:0.842px;color:#000;left:3824.31px;top:545.70px;transform-origin:0 0;transform:rotate(90deg);">Tool Options</span>
<div class="b" style="left:3074px;top:1667.5px;width:697px;height:382.5px;background:#e0e0e6;"></div>
<div class="b" style="left:3076px;top:1669.5px;width:693px;height:47.25px;background:#f3f3f7;"></div>
<div class="b" style="left:3076px;top:1716.75px;width:693px;height:331.25px;background:#fff;"></div>
<div class="b" style="left:3336px;top:1673px;width:2px;height:41.5px;background:#c4c4cc;"></div>
<div class="b" style="left:3765.5px;top:1673px;width:2.0px;height:41.5px;background:#c4c4cc;"></div>
<span class="t" style="font-size:23.64px;letter-spacing:0.036px;color:#000;left:3087.70px;top:1683.00px;">Task</span>
<span class="t" style="font-size:23.64px;letter-spacing:0.953px;color:#000;left:3347.70px;top:1683.00px;">Status*</span>
<span class="t" style="font-size:23.64px;letter-spacing:0.699px;color:#000;left:3081.70px;top:1724.00px;">Project Preparation</span>
<span class="t" style="font-size:23.64px;letter-spacing:0.522px;color:#000;left:3081.70px;top:1758.00px;">GCP Measurement</span>
<span class="t" style="font-size:23.64px;letter-spacing:0.772px;color:#000;left:3081.70px;top:1792.00px;">Relative Adjustment</span>
<span class="t" style="font-size:23.64px;letter-spacing:0.995px;color:#000;left:3081.70px;top:1826.00px;">Absolute Adjustment</span>
<span class="t" style="font-size:23.64px;letter-spacing:0.604px;color:#000;left:3081.70px;top:1860.00px;">Surface Generation</span>
<span class="t" style="font-size:23.64px;letter-spacing:0.435px;color:#000;left:3081.70px;top:1894.00px;">Surface Editing</span>
<span class="t" style="font-size:23.64px;letter-spacing:0.697px;color:#000;left:3081.70px;top:1928.00px;">Mosaic Generation</span>
<span class="t" style="font-size:23.64px;letter-spacing:0.472px;color:#000;left:3081.70px;top:1962.00px;">Image Analysis</span>
<span class="t" style="font-size:22.66px;letter-spacing:-0.105px;color:#000;left:2989.70px;top:2136.00px;">PAN</span>
<span class="t" style="font-size:22.66px;letter-spacing:0.056px;color:#000;left:3125.70px;top:2136.00px;">2 : 1</span>
<span class="t" style="font-size:22.66px;letter-spacing:0.388px;color:#000;left:3186.70px;top:2136.00px;">1:1957.28</span>
<span class="t" style="font-size:22.66px;letter-spacing:0.894px;color:#000;left:3307.70px;top:2136.00px;">693067.281 m ; 4838806.267 m ; 230.000 m</span>
<svg class="b" style="left:14px;top:159px;overflow:visible;" width="32" height="32" viewBox="0 0 32 32"><path d="M0 1h32v27l-3 3H3l-3-3z" fill="#111"/><rect x="5" y="0.5" width="22" height="16" fill="#ffd21e" stroke="#c89600" stroke-width="1"/><path d="M8 4.5h16M8 8h16M8 11.5h16" stroke="#b08000" stroke-width="1.6"/><rect x="8.5" y="20" width="15" height="11" fill="#f4f4f4"/><rect x="11" y="22" width="4" height="7.5" fill="#111"/></svg>
<svg class="b" style="left:72px;top:159px;overflow:visible;" width="32" height="32" viewBox="0 0 32 32"><rect x="0" y="9.5" width="11.5" height="10.5" rx="2" fill="#c8c8c8" stroke="#a8a8a8" stroke-width="0.8"/><path transform="translate(0 9.5)" d="M3 5.5h6M6 2.5v6" stroke="#f4f4f4" stroke-width="1.6" fill="none"/><rect x="12.5" y="9.5" width="11.5" height="10.5" rx="2" fill="#c8c8c8" stroke="#a8a8a8" stroke-width="0.8"/><path transform="translate(12.5 9.5)" d="M3 5.5h6" stroke="#f4f4f4" stroke-width="1.6" fill="none"/><rect x="0" y="21" width="11.5" height="10.5" rx="2" fill="#c8c8c8" stroke="#a8a8a8" stroke-width="0.8"/><path transform="translate(0 21)" d="M3.5 3l5 5M8.5 3l-5 5" stroke="#f4f4f4" stroke-width="1.6" fill="none"/><rect x="12.5" y="21" width="11.5" height="10.5" rx="2" fill="#c8c8c8" stroke="#a8a8a8" stroke-width="0.8"/><path transform="translate(12.5 21)" d="M3 5.5h6M6 2.6v.1M6 8.4v.1" stroke="#f4f4f4" stroke-width="1.6" fill="none"/><path d="M12 5.1 L21.5 5.1 L21.5 0 L31 8.5 L21.5 17 L21.5 11.899999999999999 L12 11.899999999999999Z" fill="#e0e0e0" stroke="#a8a8a8" stroke-width="1.2" stroke-linejoin="round"/></svg>
<svg class="b" style="left:113px;top:171px;" width="18" height="10" viewBox="0 0 18 10"><path d="M1 1.5L9 8.5L17 1.5" fill="none" stroke="#b8b8c0" stroke-width="1.7"/></svg>
<svg class="b" style="left:159px;top:159px;overflow:visible;" width="32" height="32" viewBox="0 0 32 32"><circle cx="13" cy="13" r="7.5" fill="none" stroke="#f0a000" stroke-width="2.2"/><path d="M13 1v24M1 13h24" stroke="#f0a000" stroke-width="2.2"/><path d="M13 1v24M1 13h24" stroke="#a86a00" stroke-width="0.6"/><circle cx="13" cy="13" r="3" fill="#8cc63c" stroke="#4a7a18" stroke-width="1"/><g transform="translate(10 8) scale(0.95)"><path d="M6 25 C3 21 1.5 17 0.8 14.5 C0.3 12.8 2.6 12 3.8 13.6 L6 17 L6 5 C6 2.8 9 2.8 9 5 L9.3 12 L9.8 2.5 C9.9 0.3 12.9 0.4 12.9 2.6 L12.9 12 L14 3.5 C14.3 1.5 17.1 1.9 16.9 4 L16.2 12.8 L18.2 7 C18.9 5.1 21.4 6 20.9 8 L19 17 C18.6 20 17.8 22.5 16.5 25 Z" fill="#fff" stroke="#111" stroke-width="1.37" stroke-linejoin="round"/></g></svg>
<svg class="b" style="left:199px;top:171px;" width="18" height="10" viewBox="0 0 18 10"><path d="M1 1.5L9 8.5L17 1.5" fill="none" stroke="#2a2a3a" stroke-width="1.7"/></svg>
<svg class="b" style="left:232px;top:159px;overflow:visible;" width="32" height="32" viewBox="0 0 32 32"><circle cx="4.5" cy="5.5" r="3.4" fill="#8cc63c" stroke="#4a7a18" stroke-width="1"/><path d="M10.0 8.0 L10.0 27.5 L14.6 23.5 L18.0 31.0 L21.5 29.5 L18.0 22.1 L24.4 22.1Z" fill="#fff" stroke="#222" stroke-width="1.2" stroke-linejoin="round"/></svg>
<svg class="b" style="left:282px;top:159px;overflow:visible;" width="32" height="32" viewBox="0 0 32 32"><path d="M6 6 L14 10 L12 14Z" fill="#aaa" stroke="#333" stroke-width="0.8"/><path d="M9 9 L17 11 L24 24 L21 26 L10 16Z" fill="#f8a818" stroke="#5a3a00" stroke-width="1"/><path d="M12 11 L20 24" stroke="#ffe27a" stroke-width="2"/><path d="M18 14 L27 19 L31 28 L24 24Z" fill="#3a9ae0" stroke="#0a4a80" stroke-width="1"/><path d="M12 19 L14 29 L22 31 L20 25Z" fill="#3a9ae0" stroke="#0a4a80" stroke-width="1"/><circle cx="4.5" cy="4.5" r="3.4" fill="#8cc63c" stroke="#4a7a18" stroke-width="1"/></svg>
<svg class="b" style="left:335px;top:159px;overflow:visible;" width="32" height="32" viewBox="0 0 32 32"><circle cx="6" cy="8.5" r="3.4" fill="#8cc63c" stroke="#4a7a18" stroke-width="1"/><path d="M1 28 L8 21 L12 25 L18 18 L22 21 L26 14" fill="none" stroke="#8a3a50" stroke-width="3" stroke-linejoin="round"/><path d="M1 28 L8 21 L12 25 L18 18 L22 21 L26 14" fill="none" stroke="#f0a0b0" stroke-width="1.6" stroke-linejoin="round"/><path d="M20.5 11.5 L28.5 10 L27.5 18.5Z" fill="#f0a0b0" stroke="#8a3a50" stroke-width="1"/></svg>
<svg class="b" style="left:382px;top:159px;overflow:visible;" width="32" height="32" viewBox="0 0 32 32"><path d="M2 1.5 H22 Q30.5 3 30.5 12 V30.5 H8 Q2 29 1.5 22 Z" fill="none" stroke="#222" stroke-width="1.6" stroke-dasharray="4 2.6"/><circle cx="9" cy="9" r="3.4" fill="#8cc63c" stroke="#4a7a18" stroke-width="1"/><defs><linearGradient id="g1" x1="0" y1="0" x2="0" y2="1"><stop offset="0" stop-color="#ff6a5a"/><stop offset="0.45" stop-color="#f01818"/><stop offset="1" stop-color="#c00000"/></linearGradient></defs><path d="M17.18 13 L22.5 18.32 L27.82 13 L32 17.18 L26.68 22.5 L32 27.82 L27.82 32 L22.5 26.68 L17.18 32 L13 27.82 L18.32 22.5 L13 17.18Z" fill="url(#g1)" stroke="#7a0606" stroke-width="1.1" stroke-linejoin="round"/></svg>
<svg class="b" style="left:437px;top:159px;overflow:visible;" width="28" height="32" viewBox="0 0 28 32"><circle cx="4" cy="9" r="3.4" fill="#8cc63c" stroke="#4a7a18" stroke-width="1"/><defs><linearGradient id="g2" x1="0" y1="0" x2="0" y2="1"><stop offset="0" stop-color="#ff6a5a"/><stop offset="0.45" stop-color="#f01818"/><stop offset="1" stop-color="#c00000"/></linearGradient></defs><path d="M12.18 12 L17.5 17.32 L22.82 12 L27 16.18 L21.68 21.5 L27 26.82 L22.82 31 L17.5 25.68 L12.18 31 L8 26.82 L13.32 21.5 L8 16.18Z" fill="url(#g2)" stroke="#7a0606" stroke-width="1.1" stroke-linejoin="round"/></svg>
<svg class="b" style="left:506px;top:159px;overflow:visible;" width="32" height="32" viewBox="0 0 32 32"><defs><linearGradient id="g3" x1="0" y1="0" x2="0" y2="1"><stop offset="0" stop-color="#1f8ad8"/><stop offset="0.5" stop-color="#7ed0f0"/><stop offset="0.56" stop-color="#d8e860"/><stop offset="0.62" stop-color="#7cc832"/><stop offset="1" stop-color="#3c9a18"/></linearGradient></defs><rect x="0.5" y="0.5" width="24" height="24" fill="#fff" stroke="#222" stroke-width="1"/><rect x="2.5" y="2.5" width="20" height="20" fill="url(#g3)"/><circle cx="16.34" cy="11.78" r="4.08" fill="#ffc81e"/><path d="M17.0 9.0 L17.0 28.5 L21.6 24.5 L25.0 32.0 L28.5 30.5 L25.0 23.1 L31.4 23.1Z" fill="#fff" stroke="#222" stroke-width="1.2" stroke-linejoin="round"/></svg>
<svg class="b" style="left:556px;top:159px;overflow:visible;" width="32" height="32" viewBox="0 0 32 32"><defs><linearGradient id="g4" x1="0" y1="0" x2="0" y2="1"><stop offset="0" stop-color="#1f8ad8"/><stop offset="0.5" stop-color="#7ed0f0"/><stop offset="0.56" stop-color="#d8e860"/><stop offset="0.62" stop-color="#7cc832"/><stop offset="1" stop-color="#3c9a18"/></linearGradient></defs><rect x="0.5" y="0.5" width="24" height="20" fill="#fff" stroke="#222" stroke-width="1"/><rect x="2.5" y="2.5" width="20" height="16" fill="url(#g4)"/><circle cx="16.34" cy="9.899999999999999" r="3.4000000000000004" fill="#ffc81e"/><rect x="7.5" y="9.5" width="23" height="19" fill="none" stroke="#333" stroke-width="1.5" stroke-dasharray="4 2.6"/><defs><linearGradient id="g5" x1="0" y1="0" x2="0" y2="1"><stop offset="0" stop-color="#ff6a5a"/><stop offset="0.45" stop-color="#f01818"/><stop offset="1" stop-color="#c00000"/></linearGradient></defs><path d="M17.18 13 L22.5 18.32 L27.82 13 L32 17.18 L26.68 22.5 L32 27.82 L27.82 32 L22.5 26.68 L17.18 32 L13 27.82 L18.32 22.5 L13 17.18Z" fill="url(#g5)" stroke="#7a0606" stroke-width="1.1" stroke-linejoin="round"/></svg>
<svg class="b" style="left:606px;top:159px;overflow:visible;" width="32" height="32" viewBox="0 0 32 32"><defs><linearGradient id="g6" x1="0" y1="0" x2="0" y2="1"><stop offset="0" stop-color="#1f8ad8"/><stop offset="0.5" stop-color="#7ed0f0"/><stop offset="0.56" stop-color="#d8e860"/><stop offset="0.62" stop-color="#7cc832"/><stop offset="1" stop-color="#3c9a18"/></linearGradient></defs><rect x="0.5" y="0.5" width="24" height="20" fill="#fff" stroke="#222" stroke-width="1"/><rect x="2.5" y="2.5" width="20" height="16" fill="url(#g6)"/><circle cx="16.34" cy="9.899999999999999" r="3.4000000000000004" fill="#ffc81e"/><defs><linearGradient id="g7" x1="0" y1="0" x2="0" y2="1"><stop offset="0" stop-color="#ff6a5a"/><stop offset="0.45" stop-color="#f01818"/><stop offset="1" stop-color="#c00000"/></linearGradient></defs><path d="M17.18 13 L22.5 18.32 L27.82 13 L32 17.18 L26.68 22.5 L32 27.82 L27.82 32 L22.5 26.68 L17.18 32 L13 27.82 L18.32 22.5 L13 17.18Z" fill="url(#g7)" stroke="#7a0606" stroke-width="1.1" stroke-linejoin="round"/></svg>
<svg class="b" style="left:665px;top:159px;overflow:visible;" width="32" height="32" viewBox="0 0 32 32"><text x="0" y="15" font-family="Liberation Sans, sans-serif" font-weight="700" font-size="19" fill="#e05a10" transform="scale(0.86 1)">1</text><text x="10" y="23" font-family="Liberation Sans, sans-serif" font-weight="700" font-size="20" fill="#1a8ad0" transform="scale(0.86 1)">2</text><text x="23.5" y="28.5" font-family="Liberation Sans, sans-serif" font-weight="700" font-size="21" fill="#111" transform="scale(0.86 1)">3</text></svg>
<svg class="b" style="left:723px;top:159px;overflow:visible;" width="32" height="32" viewBox="0 0 32 32"><g transform="translate(2 1) scale(1.3)"><path d="M6 25 C3 21 1.5 17 0.8 14.5 C0.3 12.8 2.6 12 3.8 13.6 L6 17 L6 5 C6 2.8 9 2.8 9 5 L9.3 12 L9.8 2.5 C9.9 0.3 12.9 0.4 12.9 2.6 L12.9 12 L14 3.5 C14.3 1.5 17.1 1.9 16.9 4 L16.2 12.8 L18.2 7 C18.9 5.1 21.4 6 20.9 8 L19 17 C18.6 20 17.8 22.5 16.5 25 Z" fill="#fff" stroke="#111" stroke-width="1.00" stroke-linejoin="round"/></g></svg>
<svg class="b" style="left:772px;top:159px;overflow:visible;" width="32" height="32" viewBox="0 0 32 32"><rect x="0.5" y="0.5" width="31" height="31" fill="#f6f6f6" stroke="#b8b8b8" stroke-width="1"/><path d="M0.5 17.5h31M0.5 24.5h31M24.5 0.5v31" stroke="#c8c8c8" stroke-width="1"/><rect x="0.5" y="0.5" width="17" height="16" fill="#f0f0f0" stroke="#222" stroke-width="1.2"/><path d="M4 4 L12 12 M12 6.5V12H6.5" fill="none" stroke="#7a5200" stroke-width="3.4"/><path d="M4 4 L12 12 M12 6.5V12H6.5" fill="none" stroke="#ffc21e" stroke-width="2"/><path d="M17 21.5h5.5v-5M25.5 30.5h5v-5" fill="none" stroke="#7a5200" stroke-width="3.2"/><path d="M17 21.5h5.5v-5M25.5 30.5h5v-5" fill="none" stroke="#ffc21e" stroke-width="1.8"/></svg>
<svg class="b" style="left:813px;top:171px;" width="18" height="10" viewBox="0 0 18 10"><path d="M1 1.5L9 8.5L17 1.5" fill="none" stroke="#2a2a3a" stroke-width="1.7"/></svg>
<svg class="b" style="left:846px;top:159px;overflow:visible;" width="32" height="32" viewBox="0 0 32 32"><path d="M1.5 9V3Q1.5 1.5 3 1.5H9M23 1.5H29Q30.5 1.5 30.5 3V9M30.5 23V29Q30.5 30.5 29 30.5H23M9 30.5H3Q1.5 30.5 1.5 29V23" fill="none" stroke="#e02030" stroke-width="2.6"/><path d="M5 5 L13 7 L7 13Z M27 5 L25 13 L19 7Z M27 27 L19 25 L25 19Z M5 27 L7 19 L13 25Z" fill="#ffc21e" stroke="#8a5a00" stroke-width="1" stroke-linejoin="round"/><path d="M9 9 L23 23 M23 9 L9 23" stroke="#8a5a00" stroke-width="5.5"/><path d="M9 9 L23 23 M23 9 L9 23" stroke="#ffc21e" stroke-width="3.6"/></svg>
<span class="t" style="font-size:16.25px;letter-spacing:0.018px;color:#333;font-weight:700;left:899.23px;top:167.00px;">4:1</span>
<span class="t" style="font-size:16.25px;letter-spacing:0.018px;color:#333;font-weight:700;left:949.23px;top:167.00px;">2:1</span>
<span class="t" style="font-size:16.25px;letter-spacing:0.018px;color:#333;font-weight:700;left:999.23px;top:167.00px;">1:1</span>
<svg class="b" style="left:1037px;top:171px;" width="18" height="10" viewBox="0 0 18 10"><path d="M1 1.5L9 8.5L17 1.5" fill="none" stroke="#2a2a3a" stroke-width="1.7"/></svg>
<svg class="b" style="left:1070px;top:159px;overflow:visible;" width="32" height="32" viewBox="0 0 32 32"><circle cx="8" cy="8" r="7" fill="#fff" stroke="#222" stroke-width="1.4"/><path d="M8 1a7 7 0 0 0 0 14z" fill="#222"/><path d="M22 12 L24.3 17 L29.5 15.5 L27.5 20.5 L32 23 L27.3 25.2 L28.8 30.4 L23.8 28.6 L21 33 L19 28.2 L13.6 29.6 L15.8 24.8 L11.2 22 L16 20 L14.6 14.8 L19.6 16.6Z" fill="#ffc21e" stroke="#a06a00" stroke-width="1" stroke-linejoin="round"/></svg>
<svg class="b" style="left:1120px;top:159px;overflow:visible;" width="32" height="32" viewBox="0 0 32 32"><defs><linearGradient id="g8" x1="0" y1="0.4" x2="1" y2="0"><stop offset="0" stop-color="#222"/><stop offset="1" stop-color="#fff"/></linearGradient></defs><rect x="0" y="0" width="32" height="32" fill="url(#g8)"/><path d="M0 32L32 0V32Z" fill="#fff"/><path d="M0 32 L16 16 V32Z" fill="#000"/><rect x="16" y="16" width="16" height="16" fill="#7a7a7a"/><path d="M0 32L32 0" stroke="#f0a000" stroke-width="1.6"/><path d="M12 12 L21 21 M21 14.5V21H14.5" fill="none" stroke="#333" stroke-width="4.2"/><path d="M12 12 L21 21 M21 14.5V21H14.5" fill="none" stroke="#ffc21e" stroke-width="2.4"/></svg>
<svg class="b" style="left:1182px;top:159px;overflow:visible;" width="32" height="32" viewBox="0 0 32 32"><defs><linearGradient id="g9" x1="0" y1="0" x2="0" y2="1"><stop offset="0" stop-color="#ffe060"/><stop offset="1" stop-color="#f0a000"/></linearGradient></defs><path d="M4 18 v-3 a6 6 0 0 1 12 0 v3" fill="none" stroke="#555" stroke-width="3.2"/><rect x="0" y="18" width="20" height="13.5" rx="1.5" fill="url(#g9)" stroke="#7a5200" stroke-width="1"/><circle cx="10" cy="23.5" r="1.7" fill="#222"/><rect x="9.3" y="23.5" width="1.4" height="4.5" fill="#222"/><g transform="translate(11 0) scale(0.92)"><path d="M6 25 C3 21 1.5 17 0.8 14.5 C0.3 12.8 2.6 12 3.8 13.6 L6 17 L6 5 C6 2.8 9 2.8 9 5 L9.3 12 L9.8 2.5 C9.9 0.3 12.9 0.4 12.9 2.6 L12.9 12 L14 3.5 C14.3 1.5 17.1 1.9 16.9 4 L16.2 12.8 L18.2 7 C18.9 5.1 21.4 6 20.9 8 L19 17 C18.6 20 17.8 22.5 16.5 25 Z" fill="#fff" stroke="#111" stroke-width="1.41" stroke-linejoin="round"/></g></svg>
<svg class="b" style="left:1232px;top:159px;overflow:visible;" width="32" height="32" viewBox="0 0 32 32"><defs><linearGradient id="g10" x1="0" y1="0" x2="0" y2="1"><stop offset="0" stop-color="#ffe060"/><stop offset="1" stop-color="#f0a000"/></linearGradient></defs><path d="M4 18 v-3 a6 6 0 0 1 12 0 v3" fill="none" stroke="#555" stroke-width="3.2"/><rect x="0" y="18" width="20" height="13.5" rx="1.5" fill="url(#g10)" stroke="#7a5200" stroke-width="1"/><circle cx="10" cy="23.5" r="1.7" fill="#222"/><rect x="9.3" y="23.5" width="1.4" height="4.5" fill="#222"/><path d="M20 15 L30 24" stroke="#8a5200" stroke-width="5"/><path d="M20 15 L30 24" stroke="#ffb41e" stroke-width="3"/><circle cx="15" cy="9" r="7.5" fill="#3aa0e0" stroke="#555" stroke-width="2.6"/><circle cx="13" cy="7" r="3" fill="#bfe6fa"/></svg>
<svg class="b" style="left:1294px;top:159px;overflow:visible;" width="32" height="32" viewBox="0 0 32 32"><rect x="7.5" y="0.5" width="24" height="21" fill="#e4e4e4" stroke="#a8a8a8" stroke-width="1"/><rect x="10.0" y="3.0" width="19" height="16" fill="#cfcfcf"/><rect x="10.0" y="12.05" width="19" height="6.950000000000001" fill="#dcdcdc"/><circle cx="23.82" cy="11.0" r="3.36" fill="#e8e8e8"/><path d="M21 18.4 L10.5 18.4 L10.5 13 L0 22.0 L10.5 31 L10.5 25.6 L21 25.6Z" fill="#e8e8e8" stroke="#9a9a9a" stroke-width="1.2" stroke-linejoin="round"/></svg>
<svg class="b" style="left:1344px;top:159px;overflow:visible;" width="32" height="32" viewBox="0 0 32 32"><rect x="0.5" y="0.5" width="24" height="21" fill="#e4e4e4" stroke="#a8a8a8" stroke-width="1"/><rect x="3.0" y="3.0" width="19" height="16" fill="#cfcfcf"/><rect x="3.0" y="12.05" width="19" height="6.950000000000001" fill="#dcdcdc"/><circle cx="16.82" cy="11.0" r="3.36" fill="#e8e8e8"/><path d="M11 18.4 L21.5 18.4 L21.5 13 L32 22.0 L21.5 31 L21.5 25.6 L11 25.6Z" fill="#e8e8e8" stroke="#9a9a9a" stroke-width="1.2" stroke-linejoin="round"/></svg>
<svg class="b" style="left:1395px;top:159px;overflow:visible;" width="32" height="32" viewBox="0 0 32 32"><path d="M2.5 11 C2.5 4 8 1.5 12.5 5.5 L10.5 8.5 C8.5 6 6.5 7 6.5 11Z M29.5 11 C29.5 4 24 1.5 19.5 5.5 L21.5 8.5 C23.5 6 25.5 7 25.5 11Z" fill="#e8e8e8" stroke="#8a8a8a" stroke-width="1" stroke-linejoin="round"/><rect x="0.7" y="9.5" width="30.6" height="11" rx="3" fill="#e8e8e8" stroke="#8a8a8a" stroke-width="1"/><rect x="3.5" y="12" width="10.5" height="6.5" rx="1.5" fill="#d4d4d4" stroke="#8a8a8a" stroke-width="0.8"/><rect x="18" y="12" width="10.5" height="6.5" rx="1.5" fill="#d4d4d4" stroke="#8a8a8a" stroke-width="0.8"/><rect x="14" y="21" width="17" height="10.5" fill="#c8c8c8" stroke="#aaa" stroke-width="0.8"/><rect x="20" y="21" width="5" height="10.5" fill="#e0e0e0"/></svg>
<svg class="b" style="left:1444px;top:159px;overflow:visible;" width="32" height="32" viewBox="0 0 32 32"><path d="M2.5 11 C2.5 4 8 1.5 12.5 5.5 L10.5 8.5 C8.5 6 6.5 7 6.5 11Z M29.5 11 C29.5 4 24 1.5 19.5 5.5 L21.5 8.5 C23.5 6 25.5 7 25.5 11Z" fill="#e8e8e8" stroke="#8a8a8a" stroke-width="1" stroke-linejoin="round"/><rect x="0.7" y="9.5" width="30.6" height="11" rx="3" fill="#e8e8e8" stroke="#8a8a8a" stroke-width="1"/><rect x="3.5" y="12" width="10.5" height="6.5" rx="1.5" fill="#d4d4d4" stroke="#8a8a8a" stroke-width="0.8"/><rect x="18" y="12" width="10.5" height="6.5" rx="1.5" fill="#d4d4d4" stroke="#8a8a8a" stroke-width="0.8"/><path d="M15 23a7 5 0 0 1 13-1l3-1l-2 6l-6-2l3-1a5 3.5 0 0 0-8 0zM31 27a7 5 0 0 1-13 1l-3 1l2-6l6 2l-3 1a5 3.5 0 0 0 8 0z" fill="#d8d8d8" stroke="#8a8a8a" stroke-width="1"/></svg>
<svg class="b" style="left:1494px;top:159px;overflow:visible;" width="32" height="32" viewBox="0 0 32 32"><circle cx="20" cy="12" r="11.5" fill="#c4c4c4" stroke="#9a9a9a" stroke-width="1"/><path d="M14 5q4-3 7 0q-1 4-4 5q2 3 0 6q-3-1-4-5q-2-3 1-6zM24 13q4 0 5 3q-2 4-5 4q-2-3 0-7z" fill="#dadada"/><path d="M21 18.4 L10.5 18.4 L10.5 13 L0 22.0 L10.5 31 L10.5 25.6 L21 25.6Z" fill="#e8e8e8" stroke="#9a9a9a" stroke-width="1.2" stroke-linejoin="round"/></svg>
<svg class="b" style="left:1544px;top:159px;overflow:visible;" width="32" height="32" viewBox="0 0 32 32"><circle cx="12" cy="12" r="11.5" fill="#c4c4c4" stroke="#9a9a9a" stroke-width="1"/><path d="M6 5q4-3 7 0q-1 4-4 5q2 3 0 6q-3-1-4-5q-2-3 1-6zM16 13q4 0 5 3q-2 4-5 4q-2-3 0-7z" fill="#dadada"/><path d="M11 18.4 L21.5 18.4 L21.5 13 L32 22.0 L21.5 31 L21.5 25.6 L11 25.6Z" fill="#e8e8e8" stroke="#9a9a9a" stroke-width="1.2" stroke-linejoin="round"/></svg>
<svg class="b" style="left:1594px;top:159px;overflow:visible;" width="32" height="32" viewBox="0 0 32 32"><rect x="3" y="2" width="17" height="17" rx="1.5" fill="#dcdcdc"/><rect x="13" y="12" width="17" height="17" rx="1.5" fill="#c8c8c8"/><rect x="8.5" y="9.5" width="15" height="12" rx="1.5" fill="#d4d4d4" stroke="#9a9a9a" stroke-width="1"/><rect x="11" y="12.5" width="10" height="3" fill="#bcbcbc"/><rect x="11" y="16.5" width="10" height="2.5" fill="#c4c4c4"/><path d="M21 5 a5 5 0 0 1 8 3" fill="none" stroke="#4a4a4a" stroke-width="2"/><path d="M26 8 l6 0 l-3 4z" fill="#4a4a4a"/><path d="M3 23 a5 5 0 0 0 6 5" fill="none" stroke="#4a4a4a" stroke-width="2"/><path d="M8 25 l0 6 l4 -3z" fill="#4a4a4a"/></svg>
<svg class="b" style="left:1644px;top:159px;overflow:visible;" width="32" height="32" viewBox="0 0 32 32"><rect x="3" y="2" width="17" height="17" rx="1.5" fill="#dcdcdc"/><rect x="13" y="12" width="17" height="17" rx="1.5" fill="#c8c8c8"/><rect x="8.5" y="9.5" width="15" height="12" rx="1.5" fill="#d4d4d4" stroke="#9a9a9a" stroke-width="1"/><rect x="11" y="12.5" width="10" height="3" fill="#bcbcbc"/><rect x="11" y="16.5" width="10" height="2.5" fill="#c4c4c4"/><path d="M9 24 q0 4 -4 4" fill="none" stroke="#4a4a4a" stroke-width="2"/><path d="M6 25 l0 6 l-5 -3z" fill="#4a4a4a"/></svg>
<svg class="b" style="left:1694px;top:159px;overflow:visible;" width="32" height="32" viewBox="0 0 32 32"><rect x="3" y="2" width="17" height="17" rx="1.5" fill="#dcdcdc"/><rect x="13" y="12" width="17" height="17" rx="1.5" fill="#c8c8c8"/><rect x="8.5" y="9.5" width="15" height="12" rx="1.5" fill="#d4d4d4" stroke="#9a9a9a" stroke-width="1"/><rect x="11" y="12.5" width="10" height="3" fill="#bcbcbc"/><rect x="11" y="16.5" width="10" height="2.5" fill="#c4c4c4"/><path d="M3 23 a5 5 0 0 0 6 5" fill="none" stroke="#4a4a4a" stroke-width="2"/><path d="M8 25 l0 6 l4 -3z" fill="#4a4a4a"/></svg>
<svg class="b" style="left:1744px;top:159px;overflow:visible;" width="32" height="32" viewBox="0 0 32 32"><rect x="3" y="2" width="17" height="17" rx="1.5" fill="#dcdcdc"/><rect x="13" y="12" width="17" height="17" rx="1.5" fill="#c8c8c8"/><rect x="8.5" y="9.5" width="15" height="12" rx="1.5" fill="#d4d4d4" stroke="#9a9a9a" stroke-width="1"/><rect x="11" y="12.5" width="10" height="3" fill="#bcbcbc"/><rect x="11" y="16.5" width="10" height="2.5" fill="#c4c4c4"/><path d="M22 9 q5 0 5 -5" fill="none" stroke="#4a4a4a" stroke-width="2"/><path d="M24 5 l6 0 l-3 -5z" fill="#4a4a4a"/></svg>
<svg class="b" style="left:1794px;top:159px;overflow:visible;" width="32" height="32" viewBox="0 0 32 32"><rect x="3" y="2" width="17" height="17" rx="1.5" fill="#dcdcdc"/><rect x="13" y="12" width="17" height="17" rx="1.5" fill="#c8c8c8"/><rect x="8.5" y="9.5" width="15" height="12" rx="1.5" fill="#d4d4d4" stroke="#9a9a9a" stroke-width="1"/><rect x="11" y="12.5" width="10" height="3" fill="#bcbcbc"/><rect x="11" y="16.5" width="10" height="2.5" fill="#c4c4c4"/><path d="M21 5 a5 5 0 0 1 8 3" fill="none" stroke="#4a4a4a" stroke-width="2"/><path d="M26 8 l6 0 l-3 4z" fill="#4a4a4a"/></svg>
<svg class="b" style="left:1844px;top:159px;overflow:visible;" width="32" height="32" viewBox="0 0 32 32"><path d="M8 6 Q16 -1 24 6 Q16 13 8 6Z" fill="#fff" stroke="#000" stroke-width="1.5"/><circle cx="16" cy="6" r="2.8" fill="#000"/><path d="M0 30 L16 13 L32 30" fill="none" stroke="#000" stroke-width="1.4"/><path d="M9 21 Q16 27 23 21" fill="none" stroke="#000" stroke-width="1.4"/></svg>
<svg class="b" style="left:1905px;top:159px;overflow:visible;" width="32" height="32" viewBox="0 0 32 32"><defs><linearGradient id="g13" x1="0" y1="0" x2="0" y2="1"><stop offset="0" stop-color="#f0dc78"/><stop offset="1" stop-color="#8a8ea8"/></linearGradient></defs><rect x="1" y="6" width="6" height="10" fill="url(#g13)" stroke="#2828a0" stroke-width="1"/><rect x="5" y="2" width="6" height="11" fill="url(#g13)" stroke="#2828a0" stroke-width="1"/><rect x="10" y="0.5" width="6" height="10" fill="url(#g13)" stroke="#2828a0" stroke-width="1"/><rect x="15" y="3" width="6" height="10" fill="url(#g13)" stroke="#2828a0" stroke-width="1"/><rect x="20" y="1" width="6" height="11" fill="url(#g13)" stroke="#2828a0" stroke-width="1"/><rect x="25" y="4" width="6" height="10" fill="url(#g13)" stroke="#2828a0" stroke-width="1"/><rect x="3" y="10" width="6" height="10" fill="url(#g13)" stroke="#2828a0" stroke-width="1"/><rect x="9" y="8" width="6" height="11" fill="url(#g13)" stroke="#2828a0" stroke-width="1"/><rect x="15" y="10" width="6" height="9" fill="url(#g13)" stroke="#2828a0" stroke-width="1"/><rect x="21" y="9" width="6" height="10" fill="url(#g13)" stroke="#2828a0" stroke-width="1"/><path d="M3.0 24 Q16 9.128 29.0 24 Q16 38.872 3.0 24Z" fill="#fff" stroke="#000" stroke-width="2"/><circle cx="16" cy="24" r="7.0304" fill="#000"/><circle cx="13.5664" cy="21.5664" r="2.1632" fill="#fff"/></svg>
<svg class="b" style="left:1955px;top:159px;overflow:visible;" width="32" height="32" viewBox="0 0 32 32"><defs><linearGradient id="g14" x1="0" y1="0" x2="0" y2="1"><stop offset="0" stop-color="#f0dc78"/><stop offset="1" stop-color="#8a8ea8"/></linearGradient></defs><rect x="1" y="2" width="7" height="11" fill="url(#g14)" stroke="#2828a0" stroke-width="1"/><rect x="9" y="0.5" width="7" height="10" fill="url(#g14)" stroke="#2828a0" stroke-width="1"/><rect x="13" y="5" width="6" height="10" fill="url(#g14)" stroke="#2828a0" stroke-width="1"/><rect x="19" y="3" width="6" height="11" fill="url(#g14)" stroke="#2828a0" stroke-width="1"/><rect x="25" y="0.5" width="6" height="11" fill="url(#g14)" stroke="#2828a0" stroke-width="1"/><path d="M3.0 24 Q16 9.128 29.0 24 Q16 38.872 3.0 24Z" fill="#fff" stroke="#000" stroke-width="2"/><circle cx="16" cy="24" r="7.0304" fill="#000"/><circle cx="13.5664" cy="21.5664" r="2.1632" fill="#fff"/></svg>
<svg class="b" style="left:2014px;top:159px;overflow:visible;" width="32" height="32" viewBox="0 0 32 32"><path d="M0.0 1.0 L0.0 26.5 L6.0 21.2 L10.5 31.0 L15.0 29.0 L10.5 19.5 L18.8 19.5Z" fill="#6e6e6e" stroke="#333" stroke-width="1.2" stroke-linejoin="round"/><text x="13.5" y="20" font-family="Liberation Sans, sans-serif" font-weight="700" font-size="24" fill="#ffc21e" stroke="#8a5a00" stroke-width="0.9">?</text></svg>
<svg class="b" style="left:62px;top:337px;overflow:visible;" width="32" height="32" viewBox="0 0 32 32"><rect x="3.5" y="3.5" width="24" height="24" fill="#e6f0d8" stroke="#c8c8c8" stroke-width="1"/><circle cx="17" cy="14" r="5" fill="#f8e8a0" opacity="0.8"/><path d="M0 13.5H13V0" fill="none" stroke="#111" stroke-width="2"/><path d="M32 20H19.5V32" fill="none" stroke="#111" stroke-width="2"/></svg>
<svg class="b" style="left:104px;top:349px;" width="18" height="10" viewBox="0 0 18 10"><path d="M1 1.5L9 8.5L17 1.5" fill="none" stroke="#2a2a3a" stroke-width="1.7"/></svg>
<svg class="b" style="left:147.5px;top:337px;overflow:visible;" width="32" height="32" viewBox="0 0 32 32"><defs><linearGradient id="g15" x1="0" y1="0" x2="0" y2="1"><stop offset="0" stop-color="#1f8ad8"/><stop offset="0.5" stop-color="#7ed0f0"/><stop offset="0.56" stop-color="#d8e860"/><stop offset="0.62" stop-color="#7cc832"/><stop offset="1" stop-color="#3c9a18"/></linearGradient></defs><rect x="0.5" y="0.5" width="25" height="21" fill="#fff" stroke="#222" stroke-width="1"/><rect x="2.5" y="2.5" width="21" height="17" fill="url(#g15)"/><circle cx="17.0" cy="10.37" r="3.5700000000000003" fill="#ffc81e"/><path d="M6.5 24 Q19 9.7 31.5 24 Q19 38.3 6.5 24Z" fill="#fff" stroke="#000" stroke-width="2"/><circle cx="19" cy="24" r="6.76" fill="#000"/><circle cx="16.66" cy="21.66" r="2.08" fill="#fff"/></svg>
<svg class="b" style="left:198px;top:337px;overflow:visible;" width="32" height="32" viewBox="0 0 32 32"><path d="M2.5 10 C2.5 3 8 0.5 12.5 4.5 L10.5 7.5 C8.5 5 6.5 6 6.5 10Z M29.5 10 C29.5 3 24 0.5 19.5 4.5 L21.5 7.5 C23.5 5 25.5 6 25.5 10Z" fill="#f0b400" stroke="#5a4400" stroke-width="1" stroke-linejoin="round"/><rect x="0.7" y="8.5" width="30.6" height="11" rx="3" fill="#f0b400" stroke="#5a4400" stroke-width="1"/><rect x="3.5" y="11" width="10.5" height="6.5" rx="1.5" fill="#5ac8f0" stroke="#5a4400" stroke-width="0.8"/><rect x="18" y="11" width="10.5" height="6.5" rx="1.5" fill="#f06060" stroke="#5a4400" stroke-width="0.8"/><path d="M7.0 25 Q19 11.271999999999998 31.0 25 Q19 38.728 7.0 25Z" fill="#fff" stroke="#000" stroke-width="2"/><circle cx="19" cy="25" r="6.4896" fill="#000"/><circle cx="16.7536" cy="22.7536" r="1.9968000000000001" fill="#fff"/></svg>
<svg class="b" style="left:260px;top:337px;overflow:visible;" width="32" height="32" viewBox="0 0 32 32"><defs><linearGradient id="g16" x1="0" y1="0" x2="0" y2="1"><stop offset="0" stop-color="#1f8ad8"/><stop offset="0.5" stop-color="#7ed0f0"/><stop offset="0.56" stop-color="#d8e860"/><stop offset="0.62" stop-color="#7cc832"/><stop offset="1" stop-color="#3c9a18"/></linearGradient></defs><rect x="0.5" y="0.5" width="24" height="20" fill="#fff" stroke="#222" stroke-width="1"/><rect x="2.5" y="2.5" width="20" height="16" fill="url(#g16)"/><circle cx="16.34" cy="9.899999999999999" r="3.4000000000000004" fill="#ffc81e"/><rect x="7.5" y="9.5" width="23" height="19" fill="none" stroke="#333" stroke-width="1.5" stroke-dasharray="4 2.6"/><defs><linearGradient id="g17" x1="0" y1="0" x2="0" y2="1"><stop offset="0" stop-color="#ff6a5a"/><stop offset="0.45" stop-color="#f01818"/><stop offset="1" stop-color="#c00000"/></linearGradient></defs><path d="M17.18 13 L22.5 18.32 L27.82 13 L32 17.18 L26.68 22.5 L32 27.82 L27.82 32 L22.5 26.68 L17.18 32 L13 27.82 L18.32 22.5 L13 17.18Z" fill="url(#g17)" stroke="#7a0606" stroke-width="1.1" stroke-linejoin="round"/></svg>
<svg class="b" style="left:310px;top:337px;overflow:visible;" width="32" height="32" viewBox="0 0 32 32"><defs><linearGradient id="g18" x1="0" y1="0" x2="0" y2="1"><stop offset="0" stop-color="#1f8ad8"/><stop offset="0.5" stop-color="#7ed0f0"/><stop offset="0.56" stop-color="#d8e860"/><stop offset="0.62" stop-color="#7cc832"/><stop offset="1" stop-color="#3c9a18"/></linearGradient></defs><rect x="0.5" y="0.5" width="24" height="20" fill="#fff" stroke="#222" stroke-width="1"/><rect x="2.5" y="2.5" width="20" height="16" fill="url(#g18)"/><circle cx="16.34" cy="9.899999999999999" r="3.4000000000000004" fill="#ffc81e"/><defs><linearGradient id="g19" x1="0" y1="0" x2="0" y2="1"><stop offset="0" stop-color="#ff6a5a"/><stop offset="0.45" stop-color="#f01818"/><stop offset="1" stop-color="#c00000"/></linearGradient></defs><path d="M17.18 13 L22.5 18.32 L27.82 13 L32 17.18 L26.68 22.5 L32 27.82 L27.82 32 L22.5 26.68 L17.18 32 L13 27.82 L18.32 22.5 L13 17.18Z" fill="url(#g19)" stroke="#7a0606" stroke-width="1.1" stroke-linejoin="round"/></svg>
<svg class="b" style="left:372.5px;top:337px;overflow:visible;" width="32" height="32" viewBox="0 0 32 32"><defs><linearGradient id="g20" x1="0" y1="0" x2="1" y2="0"><stop offset="0" stop-color="#8a8a8a"/><stop offset="0.5" stop-color="#5a5a5a"/><stop offset="1" stop-color="#2a2a2a"/></linearGradient></defs><path d="M7 1h7v8l1 3v17q-1 3-6.5 3q-6-0-7-3q-1-8 4-19z" fill="url(#g20)" stroke="#1a1a1a" stroke-width="1"/><path d="M25 1h-7v8l-1 3v17q1 3 6.5 3q6-0 7-3q1-8-4-19z" fill="url(#g20)" stroke="#1a1a1a" stroke-width="1"/><rect x="13.5" y="10" width="5" height="8" fill="#444" stroke="#1a1a1a" stroke-width="0.8"/></svg>
<svg class="b" style="left:435px;top:337px;overflow:visible;" width="32" height="32" viewBox="0 0 32 32"><rect x="0.5" y="4.5" width="27" height="27" fill="#f4f4f4" stroke="#222" stroke-width="1"/><rect x="3" y="12" width="3" height="2" fill="#666"/><rect x="8" y="12" width="15" height="2" fill="#888"/><rect x="3" y="16.5" width="3" height="2" fill="#666"/><rect x="8" y="16.5" width="15" height="2" fill="#888"/><rect x="3" y="21" width="3" height="2" fill="#666"/><rect x="8" y="21" width="15" height="2" fill="#888"/><rect x="3" y="25.5" width="3" height="2" fill="#666"/><rect x="8" y="25.5" width="15" height="2" fill="#888"/><path d="M8 10 L13 7.5 L16.5 12.5 L26 0 L30 2.5 L17.5 21.5Z" fill="#58c018" stroke="#2a6a08" stroke-width="1" stroke-linejoin="round"/></svg>
<svg class="b" style="left:475px;top:349px;" width="18" height="10" viewBox="0 0 18 10"><path d="M1 1.5L9 8.5L17 1.5" fill="none" stroke="#2a2a3a" stroke-width="1.7"/></svg>
<svg class="b" style="left:62px;top:1245px;overflow:visible;" width="32" height="32" viewBox="0 0 32 32"><rect width="32" height="32" rx="3" fill="#1a73c0"/><path d="M7.5 18.5L13 23L24.5 8.5" fill="none" stroke="#fff" stroke-width="3.2"/></svg>
<svg class="b" style="left:112px;top:1245px;overflow:visible;" width="32" height="32" viewBox="0 0 32 32"><rect x="1.5" y="1.5" width="29" height="29" rx="3" fill="#fff" stroke="#b4b4bc" stroke-width="3"/></svg>
<svg class="b" style="left:174px;top:1245px;overflow:visible;" width="32" height="32" viewBox="0 0 32 32"><defs><linearGradient id="g21" x1="0" y1="0" x2="0" y2="1"><stop offset="0" stop-color="#ff6a5a"/><stop offset="0.45" stop-color="#f01818"/><stop offset="1" stop-color="#c00000"/></linearGradient></defs><path d="M7.04 0 L16.0 8.96 L24.96 0 L32 7.04 L23.04 16.0 L32 24.96 L24.96 32 L16.0 23.04 L7.04 32 L0 24.96 L8.96 16.0 L0 7.04Z" fill="url(#g21)" stroke="#7a0606" stroke-width="1.1" stroke-linejoin="round"/></svg>
<svg class="b" style="left:237px;top:1245px;overflow:visible;" width="32" height="32" viewBox="0 0 32 32"><rect x="0.5" y="4.5" width="27" height="27" fill="#f4f4f4" stroke="#222" stroke-width="1"/><rect x="3" y="12" width="3" height="2" fill="#666"/><rect x="8" y="12" width="15" height="2" fill="#888"/><rect x="3" y="16.5" width="3" height="2" fill="#666"/><rect x="8" y="16.5" width="15" height="2" fill="#888"/><rect x="3" y="21" width="3" height="2" fill="#666"/><rect x="8" y="21" width="15" height="2" fill="#888"/><rect x="3" y="25.5" width="3" height="2" fill="#666"/><rect x="8" y="25.5" width="15" height="2" fill="#888"/><path d="M8 10 L13 7.5 L16.5 12.5 L26 0 L30 2.5 L17.5 21.5Z" fill="#58c018" stroke="#2a6a08" stroke-width="1" stroke-linejoin="round"/></svg>
<svg class="b" style="left:277px;top:1257px;" width="18" height="10" viewBox="0 0 18 10"><path d="M1 1.5L9 8.5L17 1.5" fill="none" stroke="#2a2a3a" stroke-width="1.7"/></svg>
<svg class="b" style="left:703px;top:1249px;" width="26" height="26" viewBox="0 0 26 26"><defs><radialGradient id="gb0" cx="0.4" cy="0.35" r="0.7"><stop offset="0" stop-color="#b4e060"/><stop offset="1" stop-color="#6aa820"/></radialGradient></defs><circle cx="13" cy="13" r="12.3" fill="url(#gb0)" stroke="#3a4a22" stroke-width="1"/></svg>
<svg class="b" style="left:364.5px;top:437px;" width="32" height="32" viewBox="0 0 32 32"><path d="M11.5 0v4M0 12.5h4" stroke="#111" stroke-width="1.6"/><circle cx="11.5" cy="1.5" r="1.5" fill="#111"/><circle cx="1.5" cy="12.5" r="1.5" fill="#111"/><defs><linearGradient id="g22" x1="0" y1="0" x2="0" y2="1"><stop offset="0" stop-color="#1f8ad8"/><stop offset="0.5" stop-color="#7ed0f0"/><stop offset="0.56" stop-color="#d8e860"/><stop offset="0.62" stop-color="#7cc832"/><stop offset="1" stop-color="#3c9a18"/></linearGradient></defs><rect x="3.5" y="3.5" width="24" height="24" fill="#fff" stroke="#222" stroke-width="1"/><rect x="5.5" y="5.5" width="20" height="20" fill="url(#g22)"/><circle cx="19.34" cy="14.78" r="4.08" fill="#ffc81e"/><path d="M31.5 19H18.5V32" fill="none" stroke="#fff" stroke-width="4"/><path d="M31.5 19H18.5V32" fill="none" stroke="#111" stroke-width="2"/></svg>
<svg class="b" style="left:491px;top:440px" width="26" height="26" viewBox="0 0 26 26"><defs><radialGradient id="g23" cx="0.4" cy="0.35" r="0.7"><stop offset="0" stop-color="#b4e060"/><stop offset="1" stop-color="#6aa820"/></radialGradient></defs><circle cx="13" cy="13" r="12.3" fill="url(#g23)" stroke="#3a4a22" stroke-width="1"/></svg>
<svg class="b" style="left:696px;top:438px" width="10" height="32" viewBox="0 0 10 32"><rect x="0.7" y="0.7" width="14" height="15" rx="2" fill="#f0f0f0" stroke="#555" stroke-width="1.2"/><rect x="0.5" y="21.5" width="9" height="5" fill="#28a8e0" stroke="#0a5a90" stroke-width="1"/><path d="M7 17l4 4M7 31l4-4" stroke="#e05070" stroke-width="2"/></svg>
<svg class="b" style="left:364.5px;top:481px;opacity:0.78;" width="32" height="32" viewBox="0 0 32 32"><path d="M11.5 0v4M0 12.5h4" stroke="#111" stroke-width="1.6"/><circle cx="11.5" cy="1.5" r="1.5" fill="#111"/><circle cx="1.5" cy="12.5" r="1.5" fill="#111"/><defs><linearGradient id="g24" x1="0" y1="0" x2="0" y2="1"><stop offset="0" stop-color="#1f8ad8"/><stop offset="0.5" stop-color="#7ed0f0"/><stop offset="0.56" stop-color="#d8e860"/><stop offset="0.62" stop-color="#7cc832"/><stop offset="1" stop-color="#3c9a18"/></linearGradient></defs><rect x="3.5" y="3.5" width="24" height="24" fill="#fff" stroke="#222" stroke-width="1"/><rect x="5.5" y="5.5" width="20" height="20" fill="url(#g24)"/><circle cx="19.34" cy="14.78" r="4.08" fill="#ffc81e"/><path d="M31.5 19H18.5V32" fill="none" stroke="#fff" stroke-width="4"/><path d="M31.5 19H18.5V32" fill="none" stroke="#111" stroke-width="2"/></svg>
<svg class="b" style="left:491px;top:484px" width="26" height="26" viewBox="0 0 26 26"><defs><radialGradient id="g25" cx="0.4" cy="0.35" r="0.7"><stop offset="0" stop-color="#8cc0a0"/><stop offset="1" stop-color="#4a9a70"/></radialGradient></defs><circle cx="13" cy="13" r="12.3" fill="url(#g25)" stroke="#3a4a22" stroke-width="1"/></svg>
<svg class="b" style="left:696px;top:482px" width="10" height="32" viewBox="0 0 10 32"><rect x="0.7" y="0.7" width="14" height="15" rx="2" fill="#a8c8e8" stroke="#555" stroke-width="1.2"/><rect x="0.5" y="21.5" width="9" height="5" fill="#28a8e0" stroke="#0a5a90" stroke-width="1"/><path d="M7 17l4 4M7 31l4-4" stroke="#e05070" stroke-width="2"/></svg>
<svg class="b" style="left:364.5px;top:525px;" width="32" height="32" viewBox="0 0 32 32"><path d="M11.5 0v4M0 12.5h4" stroke="#111" stroke-width="1.6"/><circle cx="11.5" cy="1.5" r="1.5" fill="#111"/><circle cx="1.5" cy="12.5" r="1.5" fill="#111"/><defs><linearGradient id="g26" x1="0" y1="0" x2="0" y2="1"><stop offset="0" stop-color="#1f8ad8"/><stop offset="0.5" stop-color="#7ed0f0"/><stop offset="0.56" stop-color="#d8e860"/><stop offset="0.62" stop-color="#7cc832"/><stop offset="1" stop-color="#3c9a18"/></linearGradient></defs><rect x="3.5" y="3.5" width="24" height="24" fill="#fff" stroke="#222" stroke-width="1"/><rect x="5.5" y="5.5" width="20" height="20" fill="url(#g26)"/><circle cx="19.34" cy="14.78" r="4.08" fill="#ffc81e"/><path d="M31.5 19H18.5V32" fill="none" stroke="#fff" stroke-width="4"/><path d="M31.5 19H18.5V32" fill="none" stroke="#111" stroke-width="2"/></svg>
<svg class="b" style="left:491px;top:528px" width="26" height="26" viewBox="0 0 26 26"><defs><radialGradient id="g27" cx="0.4" cy="0.35" r="0.7"><stop offset="0" stop-color="#b4e060"/><stop offset="1" stop-color="#6aa820"/></radialGradient></defs><circle cx="13" cy="13" r="12.3" fill="url(#g27)" stroke="#3a4a22" stroke-width="1"/></svg>
<svg class="b" style="left:696px;top:526px" width="10" height="32" viewBox="0 0 10 32"><rect x="0.7" y="0.7" width="14" height="15" rx="2" fill="#f0f0f0" stroke="#555" stroke-width="1.2"/><rect x="0.5" y="21.5" width="9" height="5" fill="#28a8e0" stroke="#0a5a90" stroke-width="1"/><path d="M7 17l4 4M7 31l4-4" stroke="#e05070" stroke-width="2"/></svg>
<svg class="b" style="left:364.5px;top:569px;" width="32" height="32" viewBox="0 0 32 32"><path d="M11.5 0v4M0 12.5h4" stroke="#111" stroke-width="1.6"/><circle cx="11.5" cy="1.5" r="1.5" fill="#111"/><circle cx="1.5" cy="12.5" r="1.5" fill="#111"/><defs><linearGradient id="g28" x1="0" y1="0" x2="0" y2="1"><stop offset="0" stop-color="#1f8ad8"/><stop offset="0.5" stop-color="#7ed0f0"/><stop offset="0.56" stop-color="#d8e860"/><stop offset="0.62" stop-color="#7cc832"/><stop offset="1" stop-color="#3c9a18"/></linearGradient></defs><rect x="3.5" y="3.5" width="24" height="24" fill="#fff" stroke="#222" stroke-width="1"/><rect x="5.5" y="5.5" width="20" height="20" fill="url(#g28)"/><circle cx="19.34" cy="14.78" r="4.08" fill="#ffc81e"/><path d="M31.5 19H18.5V32" fill="none" stroke="#fff" stroke-width="4"/><path d="M31.5 19H18.5V32" fill="none" stroke="#111" stroke-width="2"/></svg>
<svg class="b" style="left:491px;top:572px" width="26" height="26" viewBox="0 0 26 26"><defs><radialGradient id="g29" cx="0.4" cy="0.35" r="0.7"><stop offset="0" stop-color="#b4e060"/><stop offset="1" stop-color="#6aa820"/></radialGradient></defs><circle cx="13" cy="13" r="12.3" fill="url(#g29)" stroke="#3a4a22" stroke-width="1"/></svg>
<svg class="b" style="left:696px;top:570px" width="10" height="32" viewBox="0 0 10 32"><rect x="0.7" y="0.7" width="14" height="15" rx="2" fill="#f0f0f0" stroke="#555" stroke-width="1.2"/><rect x="0.5" y="21.5" width="9" height="5" fill="#28a8e0" stroke="#0a5a90" stroke-width="1"/><path d="M7 17l4 4M7 31l4-4" stroke="#e05070" stroke-width="2"/></svg>
<svg class="b" style="left:364.5px;top:613px;" width="32" height="32" viewBox="0 0 32 32"><path d="M11.5 0v4M0 12.5h4" stroke="#111" stroke-width="1.6"/><circle cx="11.5" cy="1.5" r="1.5" fill="#111"/><circle cx="1.5" cy="12.5" r="1.5" fill="#111"/><defs><linearGradient id="g30" x1="0" y1="0" x2="0" y2="1"><stop offset="0" stop-color="#1f8ad8"/><stop offset="0.5" stop-color="#7ed0f0"/><stop offset="0.56" stop-color="#d8e860"/><stop offset="0.62" stop-color="#7cc832"/><stop offset="1" stop-color="#3c9a18"/></linearGradient></defs><rect x="3.5" y="3.5" width="24" height="24" fill="#fff" stroke="#222" stroke-width="1"/><rect x="5.5" y="5.5" width="20" height="20" fill="url(#g30)"/><circle cx="19.34" cy="14.78" r="4.08" fill="#ffc81e"/><path d="M31.5 19H18.5V32" fill="none" stroke="#fff" stroke-width="4"/><path d="M31.5 19H18.5V32" fill="none" stroke="#111" stroke-width="2"/></svg>
<svg class="b" style="left:491px;top:616px" width="26" height="26" viewBox="0 0 26 26"><defs><radialGradient id="g31" cx="0.4" cy="0.35" r="0.7"><stop offset="0" stop-color="#b4e060"/><stop offset="1" stop-color="#6aa820"/></radialGradient></defs><circle cx="13" cy="13" r="12.3" fill="url(#g31)" stroke="#3a4a22" stroke-width="1"/></svg>
<svg class="b" style="left:696px;top:614px" width="10" height="32" viewBox="0 0 10 32"><rect x="0.7" y="0.7" width="14" height="15" rx="2" fill="#f0f0f0" stroke="#555" stroke-width="1.2"/><rect x="0.5" y="21.5" width="9" height="5" fill="#28a8e0" stroke="#0a5a90" stroke-width="1"/><path d="M7 17l4 4M7 31l4-4" stroke="#e05070" stroke-width="2"/></svg>
<svg class="b" style="left:364.5px;top:657px;" width="32" height="32" viewBox="0 0 32 32"><path d="M11.5 0v4M0 12.5h4" stroke="#111" stroke-width="1.6"/><circle cx="11.5" cy="1.5" r="1.5" fill="#111"/><circle cx="1.5" cy="12.5" r="1.5" fill="#111"/><defs><linearGradient id="g32" x1="0" y1="0" x2="0" y2="1"><stop offset="0" stop-color="#1f8ad8"/><stop offset="0.5" stop-color="#7ed0f0"/><stop offset="0.56" stop-color="#d8e860"/><stop offset="0.62" stop-color="#7cc832"/><stop offset="1" stop-color="#3c9a18"/></linearGradient></defs><rect x="3.5" y="3.5" width="24" height="24" fill="#fff" stroke="#222" stroke-width="1"/><rect x="5.5" y="5.5" width="20" height="20" fill="url(#g32)"/><circle cx="19.34" cy="14.78" r="4.08" fill="#ffc81e"/><path d="M31.5 19H18.5V32" fill="none" stroke="#fff" stroke-width="4"/><path d="M31.5 19H18.5V32" fill="none" stroke="#111" stroke-width="2"/></svg>
<svg class="b" style="left:491px;top:660px" width="26" height="26" viewBox="0 0 26 26"><defs><radialGradient id="g33" cx="0.4" cy="0.35" r="0.7"><stop offset="0" stop-color="#b4e060"/><stop offset="1" stop-color="#6aa820"/></radialGradient></defs><circle cx="13" cy="13" r="12.3" fill="url(#g33)" stroke="#3a4a22" stroke-width="1"/></svg>
<svg class="b" style="left:696px;top:658px" width="10" height="32" viewBox="0 0 10 32"><rect x="0.7" y="0.7" width="14" height="15" rx="2" fill="#f0f0f0" stroke="#555" stroke-width="1.2"/><rect x="0.5" y="21.5" width="9" height="5" fill="#28a8e0" stroke="#0a5a90" stroke-width="1"/><path d="M7 17l4 4M7 31l4-4" stroke="#e05070" stroke-width="2"/></svg>
<svg class="b" style="left:364.5px;top:701px;" width="32" height="32" viewBox="0 0 32 32"><path d="M11.5 0v4M0 12.5h4" stroke="#111" stroke-width="1.6"/><circle cx="11.5" cy="1.5" r="1.5" fill="#111"/><circle cx="1.5" cy="12.5" r="1.5" fill="#111"/><defs><linearGradient id="g34" x1="0" y1="0" x2="0" y2="1"><stop offset="0" stop-color="#1f8ad8"/><stop offset="0.5" stop-color="#7ed0f0"/><stop offset="0.56" stop-color="#d8e860"/><stop offset="0.62" stop-color="#7cc832"/><stop offset="1" stop-color="#3c9a18"/></linearGradient></defs><rect x="3.5" y="3.5" width="24" height="24" fill="#fff" stroke="#222" stroke-width="1"/><rect x="5.5" y="5.5" width="20" height="20" fill="url(#g34)"/><circle cx="19.34" cy="14.78" r="4.08" fill="#ffc81e"/><path d="M31.5 19H18.5V32" fill="none" stroke="#fff" stroke-width="4"/><path d="M31.5 19H18.5V32" fill="none" stroke="#111" stroke-width="2"/></svg>
<svg class="b" style="left:491px;top:704px" width="26" height="26" viewBox="0 0 26 26"><defs><radialGradient id="g35" cx="0.4" cy="0.35" r="0.7"><stop offset="0" stop-color="#b4e060"/><stop offset="1" stop-color="#6aa820"/></radialGradient></defs><circle cx="13" cy="13" r="12.3" fill="url(#g35)" stroke="#3a4a22" stroke-width="1"/></svg>
<svg class="b" style="left:696px;top:702px" width="10" height="32" viewBox="0 0 10 32"><rect x="0.7" y="0.7" width="14" height="15" rx="2" fill="#f0f0f0" stroke="#555" stroke-width="1.2"/><rect x="0.5" y="21.5" width="9" height="5" fill="#28a8e0" stroke="#0a5a90" stroke-width="1"/><path d="M7 17l4 4M7 31l4-4" stroke="#e05070" stroke-width="2"/></svg>
<svg class="b" style="left:364.5px;top:745px;" width="32" height="32" viewBox="0 0 32 32"><path d="M11.5 0v4M0 12.5h4" stroke="#111" stroke-width="1.6"/><circle cx="11.5" cy="1.5" r="1.5" fill="#111"/><circle cx="1.5" cy="12.5" r="1.5" fill="#111"/><defs><linearGradient id="g36" x1="0" y1="0" x2="0" y2="1"><stop offset="0" stop-color="#1f8ad8"/><stop offset="0.5" stop-color="#7ed0f0"/><stop offset="0.56" stop-color="#d8e860"/><stop offset="0.62" stop-color="#7cc832"/><stop offset="1" stop-color="#3c9a18"/></linearGradient></defs><rect x="3.5" y="3.5" width="24" height="24" fill="#fff" stroke="#222" stroke-width="1"/><rect x="5.5" y="5.5" width="20" height="20" fill="url(#g36)"/><circle cx="19.34" cy="14.78" r="4.08" fill="#ffc81e"/><path d="M31.5 19H18.5V32" fill="none" stroke="#fff" stroke-width="4"/><path d="M31.5 19H18.5V32" fill="none" stroke="#111" stroke-width="2"/></svg>
<svg class="b" style="left:491px;top:748px" width="26" height="26" viewBox="0 0 26 26"><defs><radialGradient id="g37" cx="0.4" cy="0.35" r="0.7"><stop offset="0" stop-color="#b4e060"/><stop offset="1" stop-color="#6aa820"/></radialGradient></defs><circle cx="13" cy="13" r="12.3" fill="url(#g37)" stroke="#3a4a22" stroke-width="1"/></svg>
<svg class="b" style="left:696px;top:746px" width="10" height="32" viewBox="0 0 10 32"><rect x="0.7" y="0.7" width="14" height="15" rx="2" fill="#f0f0f0" stroke="#555" stroke-width="1.2"/><rect x="0.5" y="21.5" width="9" height="5" fill="#28a8e0" stroke="#0a5a90" stroke-width="1"/><path d="M7 17l4 4M7 31l4-4" stroke="#e05070" stroke-width="2"/></svg>
<svg class="b" style="left:364.5px;top:789px;" width="32" height="32" viewBox="0 0 32 32"><path d="M11.5 0v4M0 12.5h4" stroke="#111" stroke-width="1.6"/><circle cx="11.5" cy="1.5" r="1.5" fill="#111"/><circle cx="1.5" cy="12.5" r="1.5" fill="#111"/><defs><linearGradient id="g38" x1="0" y1="0" x2="0" y2="1"><stop offset="0" stop-color="#1f8ad8"/><stop offset="0.5" stop-color="#7ed0f0"/><stop offset="0.56" stop-color="#d8e860"/><stop offset="0.62" stop-color="#7cc832"/><stop offset="1" stop-color="#3c9a18"/></linearGradient></defs><rect x="3.5" y="3.5" width="24" height="24" fill="#fff" stroke="#222" stroke-width="1"/><rect x="5.5" y="5.5" width="20" height="20" fill="url(#g38)"/><circle cx="19.34" cy="14.78" r="4.08" fill="#ffc81e"/><path d="M31.5 19H18.5V32" fill="none" stroke="#fff" stroke-width="4"/><path d="M31.5 19H18.5V32" fill="none" stroke="#111" stroke-width="2"/></svg>
<svg class="b" style="left:491px;top:792px" width="26" height="26" viewBox="0 0 26 26"><defs><radialGradient id="g39" cx="0.4" cy="0.35" r="0.7"><stop offset="0" stop-color="#b4e060"/><stop offset="1" stop-color="#6aa820"/></radialGradient></defs><circle cx="13" cy="13" r="12.3" fill="url(#g39)" stroke="#3a4a22" stroke-width="1"/></svg>
<svg class="b" style="left:696px;top:790px" width="10" height="32" viewBox="0 0 10 32"><rect x="0.7" y="0.7" width="14" height="15" rx="2" fill="#f0f0f0" stroke="#555" stroke-width="1.2"/><rect x="0.5" y="21.5" width="9" height="5" fill="#28a8e0" stroke="#0a5a90" stroke-width="1"/><path d="M7 17l4 4M7 31l4-4" stroke="#e05070" stroke-width="2"/></svg>
<svg class="b" style="left:364.5px;top:833px;" width="32" height="32" viewBox="0 0 32 32"><path d="M11.5 0v4M0 12.5h4" stroke="#111" stroke-width="1.6"/><circle cx="11.5" cy="1.5" r="1.5" fill="#111"/><circle cx="1.5" cy="12.5" r="1.5" fill="#111"/><defs><linearGradient id="g40" x1="0" y1="0" x2="0" y2="1"><stop offset="0" stop-color="#1f8ad8"/><stop offset="0.5" stop-color="#7ed0f0"/><stop offset="0.56" stop-color="#d8e860"/><stop offset="0.62" stop-color="#7cc832"/><stop offset="1" stop-color="#3c9a18"/></linearGradient></defs><rect x="3.5" y="3.5" width="24" height="24" fill="#fff" stroke="#222" stroke-width="1"/><rect x="5.5" y="5.5" width="20" height="20" fill="url(#g40)"/><circle cx="19.34" cy="14.78" r="4.08" fill="#ffc81e"/><path d="M31.5 19H18.5V32" fill="none" stroke="#fff" stroke-width="4"/><path d="M31.5 19H18.5V32" fill="none" stroke="#111" stroke-width="2"/></svg>
<svg class="b" style="left:491px;top:836px" width="26" height="26" viewBox="0 0 26 26"><defs><radialGradient id="g41" cx="0.4" cy="0.35" r="0.7"><stop offset="0" stop-color="#b4e060"/><stop offset="1" stop-color="#6aa820"/></radialGradient></defs><circle cx="13" cy="13" r="12.3" fill="url(#g41)" stroke="#3a4a22" stroke-width="1"/></svg>
<svg class="b" style="left:696px;top:834px" width="10" height="32" viewBox="0 0 10 32"><rect x="0.7" y="0.7" width="14" height="15" rx="2" fill="#f0f0f0" stroke="#555" stroke-width="1.2"/><rect x="0.5" y="21.5" width="9" height="5" fill="#28a8e0" stroke="#0a5a90" stroke-width="1"/><path d="M7 17l4 4M7 31l4-4" stroke="#e05070" stroke-width="2"/></svg>
<svg class="b" style="left:364.5px;top:877px;" width="32" height="32" viewBox="0 0 32 32"><path d="M11.5 0v4M0 12.5h4" stroke="#111" stroke-width="1.6"/><circle cx="11.5" cy="1.5" r="1.5" fill="#111"/><circle cx="1.5" cy="12.5" r="1.5" fill="#111"/><defs><linearGradient id="g42" x1="0" y1="0" x2="0" y2="1"><stop offset="0" stop-color="#1f8ad8"/><stop offset="0.5" stop-color="#7ed0f0"/><stop offset="0.56" stop-color="#d8e860"/><stop offset="0.62" stop-color="#7cc832"/><stop offset="1" stop-color="#3c9a18"/></linearGradient></defs><rect x="3.5" y="3.5" width="24" height="24" fill="#fff" stroke="#222" stroke-width="1"/><rect x="5.5" y="5.5" width="20" height="20" fill="url(#g42)"/><circle cx="19.34" cy="14.78" r="4.08" fill="#ffc81e"/><path d="M31.5 19H18.5V32" fill="none" stroke="#fff" stroke-width="4"/><path d="M31.5 19H18.5V32" fill="none" stroke="#111" stroke-width="2"/></svg>
<svg class="b" style="left:491px;top:880px" width="26" height="26" viewBox="0 0 26 26"><defs><radialGradient id="g43" cx="0.4" cy="0.35" r="0.7"><stop offset="0" stop-color="#b4e060"/><stop offset="1" stop-color="#6aa820"/></radialGradient></defs><circle cx="13" cy="13" r="12.3" fill="url(#g43)" stroke="#3a4a22" stroke-width="1"/></svg>
<svg class="b" style="left:696px;top:878px" width="10" height="32" viewBox="0 0 10 32"><rect x="0.7" y="0.7" width="14" height="15" rx="2" fill="#f0f0f0" stroke="#555" stroke-width="1.2"/><rect x="0.5" y="21.5" width="9" height="5" fill="#28a8e0" stroke="#0a5a90" stroke-width="1"/><path d="M7 17l4 4M7 31l4-4" stroke="#e05070" stroke-width="2"/></svg>
<svg class="b" style="left:364.5px;top:921px;" width="32" height="32" viewBox="0 0 32 32"><path d="M11.5 0v4M0 12.5h4" stroke="#111" stroke-width="1.6"/><circle cx="11.5" cy="1.5" r="1.5" fill="#111"/><circle cx="1.5" cy="12.5" r="1.5" fill="#111"/><defs><linearGradient id="g44" x1="0" y1="0" x2="0" y2="1"><stop offset="0" stop-color="#1f8ad8"/><stop offset="0.5" stop-color="#7ed0f0"/><stop offset="0.56" stop-color="#d8e860"/><stop offset="0.62" stop-color="#7cc832"/><stop offset="1" stop-color="#3c9a18"/></linearGradient></defs><rect x="3.5" y="3.5" width="24" height="24" fill="#fff" stroke="#222" stroke-width="1"/><rect x="5.5" y="5.5" width="20" height="20" fill="url(#g44)"/><circle cx="19.34" cy="14.78" r="4.08" fill="#ffc81e"/><path d="M31.5 19H18.5V32" fill="none" stroke="#fff" stroke-width="4"/><path d="M31.5 19H18.5V32" fill="none" stroke="#111" stroke-width="2"/></svg>
<svg class="b" style="left:491px;top:924px" width="26" height="26" viewBox="0 0 26 26"><defs><radialGradient id="g45" cx="0.4" cy="0.35" r="0.7"><stop offset="0" stop-color="#b4e060"/><stop offset="1" stop-color="#6aa820"/></radialGradient></defs><circle cx="13" cy="13" r="12.3" fill="url(#g45)" stroke="#3a4a22" stroke-width="1"/></svg>
<svg class="b" style="left:696px;top:922px" width="10" height="32" viewBox="0 0 10 32"><rect x="0.7" y="0.7" width="14" height="15" rx="2" fill="#f0f0f0" stroke="#555" stroke-width="1.2"/><rect x="0.5" y="21.5" width="9" height="5" fill="#28a8e0" stroke="#0a5a90" stroke-width="1"/><path d="M7 17l4 4M7 31l4-4" stroke="#e05070" stroke-width="2"/></svg>
<svg class="b" style="left:364.5px;top:965px;" width="32" height="32" viewBox="0 0 32 32"><path d="M11.5 0v4M0 12.5h4" stroke="#111" stroke-width="1.6"/><circle cx="11.5" cy="1.5" r="1.5" fill="#111"/><circle cx="1.5" cy="12.5" r="1.5" fill="#111"/><defs><linearGradient id="g46" x1="0" y1="0" x2="0" y2="1"><stop offset="0" stop-color="#1f8ad8"/><stop offset="0.5" stop-color="#7ed0f0"/><stop offset="0.56" stop-color="#d8e860"/><stop offset="0.62" stop-color="#7cc832"/><stop offset="1" stop-color="#3c9a18"/></linearGradient></defs><rect x="3.5" y="3.5" width="24" height="24" fill="#fff" stroke="#222" stroke-width="1"/><rect x="5.5" y="5.5" width="20" height="20" fill="url(#g46)"/><circle cx="19.34" cy="14.78" r="4.08" fill="#ffc81e"/><path d="M31.5 19H18.5V32" fill="none" stroke="#fff" stroke-width="4"/><path d="M31.5 19H18.5V32" fill="none" stroke="#111" stroke-width="2"/></svg>
<svg class="b" style="left:491px;top:968px" width="26" height="26" viewBox="0 0 26 26"><defs><radialGradient id="g47" cx="0.4" cy="0.35" r="0.7"><stop offset="0" stop-color="#b4e060"/><stop offset="1" stop-color="#6aa820"/></radialGradient></defs><circle cx="13" cy="13" r="12.3" fill="url(#g47)" stroke="#3a4a22" stroke-width="1"/></svg>
<svg class="b" style="left:696px;top:966px" width="10" height="32" viewBox="0 0 10 32"><rect x="0.7" y="0.7" width="14" height="15" rx="2" fill="#f0f0f0" stroke="#555" stroke-width="1.2"/><rect x="0.5" y="21.5" width="9" height="5" fill="#28a8e0" stroke="#0a5a90" stroke-width="1"/><path d="M7 17l4 4M7 31l4-4" stroke="#e05070" stroke-width="2"/></svg>
<svg class="b" style="left:364.5px;top:1009px;" width="32" height="32" viewBox="0 0 32 32"><path d="M11.5 0v4M0 12.5h4" stroke="#111" stroke-width="1.6"/><circle cx="11.5" cy="1.5" r="1.5" fill="#111"/><circle cx="1.5" cy="12.5" r="1.5" fill="#111"/><defs><linearGradient id="g48" x1="0" y1="0" x2="0" y2="1"><stop offset="0" stop-color="#1f8ad8"/><stop offset="0.5" stop-color="#7ed0f0"/><stop offset="0.56" stop-color="#d8e860"/><stop offset="0.62" stop-color="#7cc832"/><stop offset="1" stop-color="#3c9a18"/></linearGradient></defs><rect x="3.5" y="3.5" width="24" height="24" fill="#fff" stroke="#222" stroke-width="1"/><rect x="5.5" y="5.5" width="20" height="20" fill="url(#g48)"/><circle cx="19.34" cy="14.78" r="4.08" fill="#ffc81e"/><path d="M31.5 19H18.5V32" fill="none" stroke="#fff" stroke-width="4"/><path d="M31.5 19H18.5V32" fill="none" stroke="#111" stroke-width="2"/></svg>
<svg class="b" style="left:491px;top:1012px" width="26" height="26" viewBox="0 0 26 26"><defs><radialGradient id="g49" cx="0.4" cy="0.35" r="0.7"><stop offset="0" stop-color="#b4e060"/><stop offset="1" stop-color="#6aa820"/></radialGradient></defs><circle cx="13" cy="13" r="12.3" fill="url(#g49)" stroke="#3a4a22" stroke-width="1"/></svg>
<svg class="b" style="left:696px;top:1010px" width="10" height="32" viewBox="0 0 10 32"><rect x="0.7" y="0.7" width="14" height="15" rx="2" fill="#f0f0f0" stroke="#555" stroke-width="1.2"/><rect x="0.5" y="21.5" width="9" height="5" fill="#28a8e0" stroke="#0a5a90" stroke-width="1"/><path d="M7 17l4 4M7 31l4-4" stroke="#e05070" stroke-width="2"/></svg>
<svg class="b" style="left:364.5px;top:1053px;" width="32" height="32" viewBox="0 0 32 32"><path d="M11.5 0v4M0 12.5h4" stroke="#111" stroke-width="1.6"/><circle cx="11.5" cy="1.5" r="1.5" fill="#111"/><circle cx="1.5" cy="12.5" r="1.5" fill="#111"/><defs><linearGradient id="g50" x1="0" y1="0" x2="0" y2="1"><stop offset="0" stop-color="#1f8ad8"/><stop offset="0.5" stop-color="#7ed0f0"/><stop offset="0.56" stop-color="#d8e860"/><stop offset="0.62" stop-color="#7cc832"/><stop offset="1" stop-color="#3c9a18"/></linearGradient></defs><rect x="3.5" y="3.5" width="24" height="24" fill="#fff" stroke="#222" stroke-width="1"/><rect x="5.5" y="5.5" width="20" height="20" fill="url(#g50)"/><circle cx="19.34" cy="14.78" r="4.08" fill="#ffc81e"/><path d="M31.5 19H18.5V32" fill="none" stroke="#fff" stroke-width="4"/><path d="M31.5 19H18.5V32" fill="none" stroke="#111" stroke-width="2"/></svg>
<svg class="b" style="left:491px;top:1056px" width="26" height="26" viewBox="0 0 26 26"><defs><radialGradient id="g51" cx="0.4" cy="0.35" r="0.7"><stop offset="0" stop-color="#b4e060"/><stop offset="1" stop-color="#6aa820"/></radialGradient></defs><circle cx="13" cy="13" r="12.3" fill="url(#g51)" stroke="#3a4a22" stroke-width="1"/></svg>
<svg class="b" style="left:696px;top:1054px" width="10" height="32" viewBox="0 0 10 32"><rect x="0.7" y="0.7" width="14" height="15" rx="2" fill="#f0f0f0" stroke="#555" stroke-width="1.2"/><rect x="0.5" y="21.5" width="9" height="5" fill="#28a8e0" stroke="#0a5a90" stroke-width="1"/><path d="M7 17l4 4M7 31l4-4" stroke="#e05070" stroke-width="2"/></svg>
<svg class="b" style="left:364.5px;top:1097px;" width="32" height="32" viewBox="0 0 32 32"><path d="M11.5 0v4M0 12.5h4" stroke="#111" stroke-width="1.6"/><circle cx="11.5" cy="1.5" r="1.5" fill="#111"/><circle cx="1.5" cy="12.5" r="1.5" fill="#111"/><defs><linearGradient id="g52" x1="0" y1="0" x2="0" y2="1"><stop offset="0" stop-color="#1f8ad8"/><stop offset="0.5" stop-color="#7ed0f0"/><stop offset="0.56" stop-color="#d8e860"/><stop offset="0.62" stop-color="#7cc832"/><stop offset="1" stop-color="#3c9a18"/></linearGradient></defs><rect x="3.5" y="3.5" width="24" height="24" fill="#fff" stroke="#222" stroke-width="1"/><rect x="5.5" y="5.5" width="20" height="20" fill="url(#g52)"/><circle cx="19.34" cy="14.78" r="4.08" fill="#ffc81e"/><path d="M31.5 19H18.5V32" fill="none" stroke="#fff" stroke-width="4"/><path d="M31.5 19H18.5V32" fill="none" stroke="#111" stroke-width="2"/></svg>
<svg class="b" style="left:491px;top:1100px" width="26" height="26" viewBox="0 0 26 26"><defs><radialGradient id="g53" cx="0.4" cy="0.35" r="0.7"><stop offset="0" stop-color="#b4e060"/><stop offset="1" stop-color="#6aa820"/></radialGradient></defs><circle cx="13" cy="13" r="12.3" fill="url(#g53)" stroke="#3a4a22" stroke-width="1"/></svg>
<svg class="b" style="left:696px;top:1098px" width="10" height="32" viewBox="0 0 10 32"><rect x="0.7" y="0.7" width="14" height="15" rx="2" fill="#f0f0f0" stroke="#555" stroke-width="1.2"/><rect x="0.5" y="21.5" width="9" height="5" fill="#28a8e0" stroke="#0a5a90" stroke-width="1"/><path d="M7 17l4 4M7 31l4-4" stroke="#e05070" stroke-width="2"/></svg>
<svg class="b" style="left:11px;top:214px;" width="30" height="30" viewBox="0 0 30 30"><rect x="0.5" y="0.5" width="29" height="29" fill="#f4f4f4" stroke="#222" stroke-width="1"/><circle cx="9" cy="6.5" r="2.8" fill="#222"/><circle cx="21" cy="8" r="2.8" fill="#222"/><circle cx="6" cy="15.5" r="2.8" fill="#222"/><circle cx="16" cy="14" r="2.8" fill="#222"/><circle cx="24" cy="18" r="2.8" fill="#222"/><circle cx="12" cy="23" r="2.8" fill="#222"/><circle cx="21" cy="25" r="2.8" fill="#222"/></svg>
<svg class="b" style="left:10px;top:353px;" width="32" height="28" viewBox="0 0 32 28"><defs><linearGradient id="g54" x1="0" y1="0" x2="0" y2="1"><stop offset="0" stop-color="#1f8ad8"/><stop offset="0.5" stop-color="#7ed0f0"/><stop offset="0.56" stop-color="#d8e860"/><stop offset="0.62" stop-color="#7cc832"/><stop offset="1" stop-color="#3c9a18"/></linearGradient></defs><rect x="0.5" y="0.5" width="31" height="27" fill="#fff" stroke="#222" stroke-width="1"/><rect x="2.5" y="2.5" width="27" height="23" fill="url(#g54)"/><circle cx="20.96" cy="13.19" r="4.590000000000001" fill="#ffc81e"/></svg>
<svg class="b" style="left:10px;top:497px;" width="31" height="31" viewBox="0 0 31 31"><defs><linearGradient id="g55" x1="0" y1="0" x2="0" y2="1"><stop offset="0" stop-color="#1f8ad8"/><stop offset="0.5" stop-color="#7ed0f0"/><stop offset="0.56" stop-color="#d8e860"/><stop offset="0.62" stop-color="#7cc832"/><stop offset="1" stop-color="#3c9a18"/></linearGradient></defs><rect x="0.5" y="0.5" width="30" height="30" fill="#fff" stroke="#222" stroke-width="1"/><rect x="2.5" y="2.5" width="26" height="26" fill="url(#g55)"/><circle cx="20.3" cy="14.6" r="5.1000000000000005" fill="#ffc81e"/><path d="M8.2 3v25" stroke="#111" stroke-width="0.8"/><path d="M13.4 3v25" stroke="#111" stroke-width="0.8"/><path d="M18.6 3v25" stroke="#111" stroke-width="0.8"/><path d="M23.8 3v25" stroke="#111" stroke-width="0.8"/><path d="M3 8h25" stroke="#111" stroke-width="0.8"/><path d="M3 13h25" stroke="#111" stroke-width="0.8"/><path d="M3 18h25" stroke="#111" stroke-width="0.8"/><path d="M3 23h25" stroke="#111" stroke-width="0.8"/></svg>
<svg class="b" style="left:3800px;top:216px;" width="32" height="26" viewBox="0 0 32 26"><path d="M16 2 C18 6 26 12 31 18 L31 21 L20 18 L18 21 H14 L12 18 L1 21 L1 18 C6 12 14 6 16 2Z" fill="#5a5a5a" stroke="#222" stroke-width="1"/><path d="M16 5l3 6h-6z" fill="#e8c020" stroke="#7a6000" stroke-width="0.8"/><path d="M13 21l3 3 3-3" fill="none" stroke="#222" stroke-width="2"/></svg>
<svg class="b" style="left:3800px;top:328px;" width="32" height="32" viewBox="0 0 32 32"><rect x="0.5" y="4.5" width="24" height="27" fill="#f4f4f4" stroke="#222" stroke-width="1"/><rect x="3" y="10" width="3" height="2" fill="#777"/><rect x="8" y="10" width="13" height="2" fill="#999"/><rect x="3" y="14" width="3" height="2" fill="#777"/><rect x="8" y="14" width="13" height="2" fill="#999"/><rect x="3" y="18" width="3" height="2" fill="#777"/><rect x="8" y="18" width="13" height="2" fill="#999"/><rect x="3" y="22" width="3" height="2" fill="#777"/><rect x="8" y="22" width="13" height="2" fill="#999"/><rect x="3" y="26" width="3" height="2" fill="#777"/><rect x="8" y="26" width="13" height="2" fill="#999"/><path d="M30 2 C33 8 27 15 22 17 L14 24 L11 21 L18 13 C18 7 24 0 30 2Z" fill="#ffb81e" stroke="#8a5a00" stroke-width="1"/><circle cx="29" cy="3.5" r="3" fill="#fff6d8"/></svg>
<svg class="b" style="left:3797px;top:511px;" width="36" height="32" viewBox="0 0 36 32"><path d="M10 2 C5 3 4 9 8 12 L24 28 C28 30 31 26 29 23 L13 8 C14 5 13 2 10 2Z" fill="#b4b4b4" stroke="#5a5a5a" stroke-width="1"/><path d="M28 2 L20 11 L23 14 L32 6 C33 9 30 13 26 13 M28 2 C25 1 21 4 22 8" fill="#c4c4c4" stroke="#5a5a5a" stroke-width="1"/><path d="M3 22 L14 12 L19 17 L8 29 C4 31 0 26 3 22Z" fill="#ffa81e" stroke="#8a4a00" stroke-width="1"/></svg>
<svg class="b" style="left:662px;top:224px;" width="17" height="17" viewBox="0 0 17 17"><path d="M5.5 5.5V1.5H15.5V10.5H11.5M5.5 3H15.5" fill="none" stroke="#2a2a3a" stroke-width="2"/><path d="M1.5 6.5H11.5V15.5H1.5ZM1.5 8H11.5" fill="none" stroke="#2a2a3a" stroke-width="2"/></svg>
<svg class="b" style="left:704px;top:224px;" width="18" height="18" viewBox="0 0 18 18"><path d="M2 2.5L15.5 16M15.5 2.5L2 16" fill="none" stroke="#2a2a3a" stroke-width="3"/></svg>
<svg class="b" style="left:3716px;top:224px;" width="17" height="17" viewBox="0 0 17 17"><path d="M5.5 5.5V1.5H15.5V10.5H11.5M5.5 3H15.5" fill="none" stroke="#2a2a3a" stroke-width="2"/><path d="M1.5 6.5H11.5V15.5H1.5ZM1.5 8H11.5" fill="none" stroke="#2a2a3a" stroke-width="2"/></svg>
<svg class="b" style="left:3758px;top:224px;" width="18" height="18" viewBox="0 0 18 18"><path d="M2 2.5L15.5 16M15.5 2.5L2 16" fill="none" stroke="#2a2a3a" stroke-width="3"/></svg>
<svg class="b" style="left:2952px;top:230px;" width="29" height="26" viewBox="0 0 29 26"><rect x="0.5" y="8.5" width="19" height="16" fill="#9a9a9a" stroke="#6a6a6a" stroke-width="1"/><rect x="3.5" y="14.5" width="13" height="7" fill="#f0f0f0" stroke="#7a7a7a" stroke-width="1"/><path d="M18 0.5H28V10.5Z" fill="#9a9a9a" stroke="#7a7a7a" stroke-width="0.8"/></svg>
<svg class="b" style="left:3007px;top:231px;" width="24" height="24" viewBox="0 0 24 24"><path d="M4 1L12 8.5L20 1L23 4L15.5 12L23 20L20 23L12 15.5L4 23L1 20L8.5 12L1 4Z" fill="#9c9c9c" stroke="#7a7a7a" stroke-width="1"/></svg>
<svg class="b" style="left:1px;top:72px;" width="25" height="22" viewBox="0 0 25 22"><path d="M12.5 1.5L24 20.5H1Z" fill="#ffd86a" stroke="#c89000" stroke-width="1.6" stroke-linejoin="round"/><path d="M12.5 9v8M8.5 13h8" stroke="#fff" stroke-width="2"/><path d="M12.5 9v8M8.5 13h8" stroke="#c08000" stroke-width="0.8"/></svg>
<svg class="b" style="left:3342px;top:1717px;" width="32" height="32" viewBox="0 0 32 32"><defs><radialGradient id="g56" cx="0.5" cy="0.3" r="0.8"><stop offset="0" stop-color="#c8ec70"/><stop offset="1" stop-color="#6aa820"/></radialGradient></defs><circle cx="16" cy="16" r="15" fill="url(#g56)" stroke="#5a8a20" stroke-width="1"/><circle cx="16" cy="16" r="10" fill="#f4f8ec" stroke="#5a8a20" stroke-width="1"/><path d="M8 15.5L11.5 13L15 17.5L23 5.5L26.5 8L15.5 24.5Z" fill="#58c018" stroke="#2a6a08" stroke-width="1" stroke-linejoin="round"/></svg>
<svg class="b" style="left:3342px;top:1751px;" width="32" height="32" viewBox="0 0 32 32"><defs><radialGradient id="g57" cx="0.5" cy="0.3" r="0.8"><stop offset="0" stop-color="#c8ec70"/><stop offset="1" stop-color="#6aa820"/></radialGradient></defs><circle cx="16" cy="16" r="15" fill="url(#g57)" stroke="#5a8a20" stroke-width="1"/><circle cx="16" cy="16" r="10" fill="#f4f8ec" stroke="#5a8a20" stroke-width="1"/><path d="M8 15.5L11.5 13L15 17.5L23 5.5L26.5 8L15.5 24.5Z" fill="#58c018" stroke="#2a6a08" stroke-width="1" stroke-linejoin="round"/></svg>
<svg class="b" style="left:3342px;top:1785px;" width="32" height="32" viewBox="0 0 32 32"><defs><radialGradient id="g58" cx="0.5" cy="0.3" r="0.8"><stop offset="0" stop-color="#c8ec70"/><stop offset="1" stop-color="#6aa820"/></radialGradient></defs><circle cx="16" cy="16" r="15" fill="url(#g58)" stroke="#5a8a20" stroke-width="1"/><circle cx="16" cy="16" r="10" fill="#f4f8ec" stroke="#5a8a20" stroke-width="1"/><path d="M8 15.5L11.5 13L15 17.5L23 5.5L26.5 8L15.5 24.5Z" fill="#58c018" stroke="#2a6a08" stroke-width="1" stroke-linejoin="round"/></svg>
<svg class="b" style="left:3342px;top:1819px;" width="32" height="32" viewBox="0 0 32 32"><defs><radialGradient id="g59" cx="0.5" cy="0.3" r="0.8"><stop offset="0" stop-color="#c8ec70"/><stop offset="1" stop-color="#6aa820"/></radialGradient></defs><circle cx="16" cy="16" r="15" fill="url(#g59)" stroke="#5a8a20" stroke-width="1"/><circle cx="16" cy="16" r="10" fill="#f4f8ec" stroke="#5a8a20" stroke-width="1"/><path d="M8 15.5L11.5 13L15 17.5L23 5.5L26.5 8L15.5 24.5Z" fill="#58c018" stroke="#2a6a08" stroke-width="1" stroke-linejoin="round"/></svg>
<svg class="b" style="left:3342px;top:1853px;" width="32" height="32" viewBox="0 0 32 32"><defs><linearGradient id="g60" x1="0" y1="0" x2="0" y2="1"><stop offset="0" stop-color="#a8acc0"/><stop offset="1" stop-color="#3a3e54"/></linearGradient></defs><circle cx="16" cy="16" r="15" fill="url(#g60)" stroke="#3a3e54" stroke-width="1"/><circle cx="16" cy="15.5" r="10" fill="#fff" stroke="#4a4e64" stroke-width="1"/></svg>
<svg class="b" style="left:3342px;top:1887px;" width="32" height="32" viewBox="0 0 32 32"><defs><linearGradient id="g61" x1="0" y1="0" x2="0" y2="1"><stop offset="0" stop-color="#a8acc0"/><stop offset="1" stop-color="#3a3e54"/></linearGradient></defs><circle cx="16" cy="16" r="15" fill="url(#g61)" stroke="#3a3e54" stroke-width="1"/><circle cx="16" cy="15.5" r="10" fill="#fff" stroke="#4a4e64" stroke-width="1"/></svg>
<svg class="b" style="left:3342px;top:1921px;" width="32" height="32" viewBox="0 0 32 32"><defs><linearGradient id="g62" x1="0" y1="0" x2="0" y2="1"><stop offset="0" stop-color="#a8acc0"/><stop offset="1" stop-color="#3a3e54"/></linearGradient></defs><circle cx="16" cy="16" r="15" fill="url(#g62)" stroke="#3a3e54" stroke-width="1"/><circle cx="16" cy="15.5" r="10" fill="#fff" stroke="#4a4e64" stroke-width="1"/></svg>
<svg class="b" style="left:3342px;top:1955px;" width="32" height="32" viewBox="0 0 32 32"><defs><linearGradient id="g63" x1="0" y1="0" x2="0" y2="1"><stop offset="0" stop-color="#a8acc0"/><stop offset="1" stop-color="#3a3e54"/></linearGradient></defs><circle cx="16" cy="16" r="15" fill="url(#g63)" stroke="#3a3e54" stroke-width="1"/><circle cx="16" cy="15.5" r="10" fill="#fff" stroke="#4a4e64" stroke-width="1"/></svg>
<svg class="b" style="left:63.6px;top:2080.7px;" width="26" height="30" viewBox="0 0 26 30"><rect x="0.5" y="0.5" width="25" height="29" fill="#f8f8f8" stroke="#222" stroke-width="1"/><rect x="3.5" y="5" width="3" height="2" fill="#666"/><rect x="8.5" y="5" width="14" height="2" fill="#888"/><rect x="3.5" y="9" width="3" height="2" fill="#666"/><rect x="8.5" y="9" width="14" height="2" fill="#888"/><rect x="3.5" y="13" width="3" height="2" fill="#666"/><rect x="8.5" y="13" width="14" height="2" fill="#888"/><rect x="3.5" y="17" width="3" height="2" fill="#666"/><rect x="8.5" y="17" width="14" height="2" fill="#888"/><rect x="3.5" y="21" width="3" height="2" fill="#666"/><rect x="8.5" y="21" width="14" height="2" fill="#888"/><rect x="3.5" y="25" width="3" height="2" fill="#666"/><rect x="8.5" y="25" width="14" height="2" fill="#888"/></svg>
<svg class="b" style="left:253.8px;top:2079px;" width="32" height="32" viewBox="0 0 32 32"><path d="M1 6 L12 2 L31 9 L31 27 L20 31 L1 24Z" fill="#f4f4f4" stroke="#555" stroke-width="1.4" stroke-linejoin="round"/><path d="M1 24L20 31L31 27" fill="#c8c8c8" stroke="#555" stroke-width="1"/><path d="M6 22V4l4-2l5 2V25Z" fill="#8a9af0" stroke="#4a5ab0" stroke-width="0.8"/><path d="M13 25V13l4-1.5l4 1.5V27.5Z" fill="#30c8c8" stroke="#108a8a" stroke-width="0.8"/><path d="M19 28V21l4-1.5l4 1.5V27L23 29.5Z" fill="#ffc81e" stroke="#a07800" stroke-width="0.8"/></svg>
<svg class="b" style="left:3808px;top:2126px;" width="30" height="34" viewBox="0 0 30 34"><path d="M2 3 Q10 1 14 8" fill="none" stroke="#333" stroke-width="1.6"/><rect x="8.5" y="8.5" width="19" height="24" rx="9" fill="#f4f4f4" stroke="#555" stroke-width="1.4"/><path d="M18 9v9M8.5 18h19" stroke="#888" stroke-width="1"/><rect x="16" y="11" width="4" height="6" rx="2" fill="#aaa" stroke="#555" stroke-width="0.8"/></svg>
<svg class="b" style="left:752px;top:273px" width="2234" height="1734" viewBox="752 273 2234 1734"><rect x="1321.5" y="523.5" width="1159" height="1158" fill="none" stroke="#8c8c8c" stroke-width="1"/><path d="M2479 1098L2606.7 1435.7L2329 1539.4L2201.6 1201.7Z" fill="none" stroke="#909090" stroke-width="1"/><path d="M1761.5 601.3L1862.0 574.6L1922.5 802.7L1822.0 829.4Z" fill="none" stroke="#fff" stroke-opacity="0.4" stroke-width="1"/><path d="M1658.9 710.0L1762.4 679.2L1825.1 890.0L1721.6 920.8Z" fill="none" stroke="#fff" stroke-opacity="0.4" stroke-width="1"/><path d="M1525.6 738.0L1633.3 707.1L1698.4 934.0L1590.7 964.9Z" fill="none" stroke="#fff" stroke-opacity="0.4" stroke-width="1"/><path d="M1624.2 1321.2L1739.6 1288.1L1805.8 1518.8L1690.4 1551.9Z" fill="none" stroke="#fff" stroke-opacity="0.4" stroke-width="1"/><path d="M2021.9 1379.6L2141.7 1347.8L2198.1 1560.4L2078.3 1592.2Z" fill="none" stroke="#fff" stroke-opacity="0.4" stroke-width="1"/><path d="M1897.3 1441.7L2016.5 1407.6L2082.7 1638.3L1963.5 1672.4Z" fill="none" stroke="#fff" stroke-opacity="0.4" stroke-width="1"/><path d="M1468.5 1514.6L1813 1412.9L1898 1696.8L1551 1797.7Z" fill="none" stroke="#a8683c" stroke-width="1.2"/><g fill="none" stroke="#fff" stroke-opacity="0.5" stroke-width="1"><path d="M1820.9 485.4L2169.4 383.8L2251.4 665.1L1903.0 766.7Z"/><path d="M1826.4 498.4L2174.8 396.7L2256.9 678.0L1908.4 779.7Z"/><path d="M1833.7 520.6L2182.5 420.3L2263.5 701.9L1914.6 802.2Z"/><path d="M1840.0 546.7L2188.8 446.3L2269.8 727.9L1920.9 828.2Z"/><path d="M1850.2 571.8L2198.8 470.8L2280.4 752.2L1931.7 853.2Z"/><path d="M1859.1 602.2L2208.2 502.4L2288.7 784.1L1939.7 883.9Z"/><path d="M1865.6 629.1L2214.1 527.4L2296.2 808.6L1947.7 910.3Z"/><path d="M1873.6 648.9L2222.2 547.5L2304.0 828.9L1955.4 930.2Z"/><path d="M1879.4 673.5L2228.7 574.6L2308.5 856.5L1959.3 955.4Z"/><path d="M1887.7 701.0L2236.8 601.4L2317.2 883.2L1968.1 982.7Z"/><path d="M1895.5 727.1L2244.0 625.4L2326.0 906.7L1977.5 1008.4Z"/><path d="M1902.0 748.9L2251.1 649.5L2331.4 931.3L1982.2 1030.7Z"/><path d="M1911.1 774.7L2260.1 675.0L2340.7 956.7L1991.6 1056.5Z"/><path d="M1919.1 799.4L2268.3 700.4L2348.2 982.3L1999.0 1081.3Z"/><path d="M1927.3 824.5L2276.3 724.7L2356.9 1006.4L2007.9 1106.2Z"/><path d="M1935.8 854.0L2285.0 754.7L2365.1 1036.6L2015.9 1135.8Z"/><path d="M1942.3 881.5L2290.9 780.1L2372.7 1061.4L2024.2 1162.9Z"/><path d="M1950.1 905.0L2298.6 803.7L2380.4 1085.1L2031.9 1186.4Z"/><path d="M1957.1 924.1L2306.2 824.7L2386.5 1106.4L2037.3 1205.9Z"/><path d="M1967.0 952.3L2316.3 853.6L2396.0 1135.6L2046.6 1234.3Z"/><path d="M1973.1 979.5L2322.1 879.8L2402.6 1161.5L2053.6 1261.2Z"/><path d="M1981.5 1002.3L2330.8 903.4L2410.5 1185.4L2061.3 1284.2Z"/><path d="M1990.3 1027.7L2339.4 928.2L2419.7 1210.0L2070.6 1309.5Z"/><path d="M1995.4 1055.4L2344.5 955.9L2424.8 1237.7L2075.7 1337.2Z"/><path d="M2006.2 1081.4L2354.9 980.5L2436.3 1262.0L2087.6 1362.9Z"/><path d="M2011.3 1106.8L2359.7 1005.0L2441.9 1286.2L2093.5 1388.0Z"/><path d="M2018.3 1128.3L2366.9 1026.8L2448.8 1308.1L2100.2 1409.6Z"/><path d="M2025.9 1158.0L2374.4 1056.6L2456.3 1338.0L2107.7 1439.4Z"/><path d="M2034.2 1178.8L2383.5 1080.1L2463.2 1362.1L2113.8 1460.8Z"/><path d="M2041.1 1205.4L2390.1 1105.5L2470.7 1387.2L2121.7 1487.1Z"/><path d="M2052.6 1231.7L2401.9 1133.0L2481.6 1414.9L2132.3 1513.6Z"/><path d="M2056.9 1255.9L2405.7 1155.3L2486.9 1436.8L2138.1 1537.4Z"/><path d="M1714.8 531.1L2063.4 429.9L2145.1 711.3L1796.5 812.5Z"/><path d="M1720.5 557.0L2069.4 456.9L2150.2 738.5L1801.3 838.6Z"/><path d="M1729.0 583.2L2077.4 481.3L2159.6 762.5L1811.2 864.4Z"/><path d="M1736.9 608.0L2085.9 508.2L2166.4 789.9L1817.4 889.8Z"/><path d="M1747.0 635.1L2096.0 535.1L2176.7 816.8L1827.7 916.8Z"/><path d="M1753.1 661.6L2101.5 559.9L2183.6 841.2L1835.2 942.9Z"/><path d="M1762.7 685.5L2112.1 586.8L2191.7 868.8L1842.4 967.4Z"/><path d="M1768.9 709.2L2117.7 608.8L2198.8 890.4L1849.9 990.8Z"/><path d="M1774.3 737.6L2122.8 635.9L2204.9 917.2L1856.4 1018.9Z"/><path d="M1781.2 759.7L2129.7 658.4L2211.5 939.8L1862.9 1041.1Z"/><path d="M1789.3 784.0L2137.8 682.1L2220.0 963.3L1871.6 1065.2Z"/><path d="M1796.8 808.9L2145.6 708.4L2226.8 989.9L1878.0 1090.5Z"/><path d="M1805.9 839.1L2154.9 739.4L2235.4 1021.2L1886.3 1120.8Z"/><path d="M1812.5 860.5L2161.3 759.9L2242.5 1041.4L1893.7 1142.0Z"/><path d="M1821.2 883.5L2170.5 784.7L2250.2 1066.7L1900.9 1165.5Z"/><path d="M1831.4 911.3L2180.3 811.2L2261.1 1092.9L1912.2 1193.0Z"/><path d="M1835.1 935.3L2183.9 834.7L2265.1 1116.2L1916.3 1216.8Z"/><path d="M1844.7 965.8L2193.3 864.5L2275.0 1145.9L1926.5 1247.2Z"/><path d="M1852.2 991.3L2201.1 891.4L2281.8 1173.0L1932.8 1273.0Z"/><path d="M1859.0 1014.8L2207.4 913.0L2289.6 1194.2L1941.2 1296.0Z"/><path d="M1869.7 1040.8L2219.0 942.0L2298.7 1224.0L1949.4 1322.7Z"/><path d="M1876.1 1062.0L2224.9 961.5L2306.0 1243.0L1957.2 1343.5Z"/><path d="M1883.1 1090.9L2232.1 991.0L2312.8 1272.7L1963.8 1372.6Z"/><path d="M1891.8 1113.2L2240.4 1012.1L2322.0 1293.6L1973.3 1394.6Z"/><path d="M1901.5 1141.5L2250.8 1042.8L2330.5 1324.7L1981.2 1423.5Z"/><path d="M1908.7 1165.9L2257.9 1066.7L2338.0 1348.6L1988.8 1447.8Z"/><path d="M1913.5 1190.5L2262.2 1089.9L2343.4 1371.5L1994.6 1472.0Z"/><path d="M1919.4 1212.7L2268.1 1111.9L2349.6 1393.3L2000.8 1494.2Z"/><path d="M1929.9 1240.8L2279.3 1142.5L2358.7 1424.5L2009.3 1522.9Z"/><path d="M1938.8 1267.5L2288.2 1169.3L2367.5 1451.3L2018.1 1549.6Z"/><path d="M1946.4 1290.0L2295.0 1189.0L2376.6 1470.4L2027.9 1571.5Z"/><path d="M1577.5 577.8L1926.6 478.2L2007.0 760.0L1657.9 859.6Z"/><path d="M1585.8 597.1L1934.7 497.0L2015.5 778.6L1666.6 878.8Z"/><path d="M1592.2 623.2L1940.7 521.7L2022.6 803.0L1674.1 904.5Z"/><path d="M1600.8 647.7L1950.0 548.7L2029.9 830.5L1680.7 929.6Z"/><path d="M1607.4 671.2L1956.0 570.0L2037.7 851.4L1689.1 952.6Z"/><path d="M1615.5 694.0L1964.7 595.1L2044.6 877.0L1695.4 975.9Z"/><path d="M1623.6 720.4L1972.4 620.0L2053.5 901.6L1704.6 1002.0Z"/><path d="M1631.6 748.5L1980.2 647.2L2062.0 928.6L1713.4 1029.9Z"/><path d="M1636.1 768.9L1985.4 670.4L2065.0 952.4L1715.6 1050.9Z"/><path d="M1646.0 793.7L1995.3 694.8L2075.1 976.7L1725.8 1075.6Z"/><path d="M1654.9 823.3L2003.7 722.7L2084.9 1004.3L1736.1 1104.9Z"/><path d="M1659.7 846.1L2008.2 744.3L2090.4 1025.5L1741.9 1127.4Z"/><path d="M1670.4 873.4L2019.4 773.5L2100.1 1055.1L1751.1 1155.1Z"/><path d="M1677.9 896.4L2027.2 797.7L2106.9 1079.7L1757.6 1178.4Z"/><path d="M1684.2 921.6L2032.9 820.7L2114.4 1102.1L1765.7 1203.1Z"/><path d="M1690.4 946.9L2039.5 847.1L2120.0 1128.9L1770.9 1228.6Z"/><path d="M1697.9 974.4L2046.5 873.0L2128.3 1154.3L1779.8 1255.8Z"/><path d="M1708.1 997.8L2057.0 897.6L2137.8 1179.2L1789.0 1279.4Z"/><path d="M1715.7 1027.3L2064.6 927.0L2145.5 1208.5L1796.7 1308.9Z"/><path d="M1723.9 1049.2L2072.8 949.2L2153.5 1230.9L1804.5 1330.9Z"/><path d="M1729.2 1071.7L2078.0 971.4L2159.0 1253.0L1810.1 1353.3Z"/><path d="M1736.0 1096.4L2085.2 997.4L2165.1 1279.3L1815.9 1378.3Z"/><path d="M1744.5 1125.0L2093.7 1025.8L2173.8 1307.7L1824.6 1406.9Z"/><path d="M1753.1 1149.4L2102.0 1049.4L2182.7 1331.0L1833.8 1431.0Z"/><path d="M1761.3 1178.7L2109.8 1077.2L2191.7 1358.5L1843.2 1460.0Z"/><path d="M1768.1 1199.9L2116.8 1099.0L2198.2 1380.5L1849.5 1481.3Z"/><path d="M1777.3 1226.1L2126.3 1126.2L2206.9 1407.9L1857.9 1507.8Z"/><path d="M1785.7 1254.4L2134.6 1154.1L2215.5 1435.7L1866.6 1536.0Z"/><path d="M1792.1 1276.8L2141.1 1176.8L2221.8 1458.5L1872.9 1558.5Z"/><path d="M1800.0 1301.6L2149.0 1201.6L2229.7 1483.3L1880.7 1583.3Z"/><path d="M1808.1 1330.1L2157.3 1230.7L2237.4 1512.5L1888.3 1611.9Z"/><path d="M1816.8 1355.9L2165.5 1255.0L2246.9 1536.4L1898.2 1637.3Z"/><path d="M1472.6 631.8L1821.2 530.4L1903.0 811.7L1554.5 913.1Z"/><path d="M1476.6 655.2L1825.1 553.6L1907.1 834.9L1558.7 936.5Z"/><path d="M1484.6 676.5L1833.7 577.0L1914.0 858.8L1564.8 958.3Z"/><path d="M1495.3 708.1L1843.9 606.7L1925.7 888.1L1577.1 989.4Z"/><path d="M1502.3 731.8L1850.9 630.4L1932.7 911.7L1584.1 1013.1Z"/><path d="M1511.3 758.8L1859.9 657.7L1941.5 939.1L1592.9 1040.2Z"/><path d="M1518.3 779.4L1867.3 679.3L1948.1 961.0L1599.1 1061.1Z"/><path d="M1526.7 808.4L1875.3 707.1L1957.1 988.5L1608.5 1089.8Z"/><path d="M1532.0 831.6L1880.8 731.0L1962.0 1012.5L1613.3 1113.1Z"/><path d="M1538.9 854.9L1888.1 755.6L1968.2 1037.5L1619.0 1136.7Z"/><path d="M1546.2 882.6L1895.1 782.3L1976.0 1063.9L1627.1 1164.2Z"/><path d="M1553.6 905.9L1902.7 806.3L1983.1 1088.0L1634.0 1187.6Z"/><path d="M1562.8 928.0L1912.3 829.7L1991.6 1111.7L1642.2 1210.0Z"/><path d="M1572.5 961.2L1921.0 859.7L2002.9 1141.0L1654.4 1242.5Z"/><path d="M1577.1 979.0L1926.4 880.0L2006.3 1161.8L1657.1 1260.9Z"/><path d="M1584.7 1005.7L1933.6 905.3L2014.6 1186.9L1665.7 1287.2Z"/><path d="M1595.8 1035.4L1944.5 934.5L2026.0 1215.9L1677.3 1316.9Z"/><path d="M1601.4 1061.4L1950.4 961.6L2031.0 1243.3L1682.0 1343.1Z"/><path d="M1608.9 1081.5L1957.3 979.9L2039.4 1261.1L1690.9 1362.8Z"/><path d="M1617.2 1109.1L1965.7 1007.5L2047.7 1288.8L1699.2 1390.4Z"/><path d="M1626.9 1133.9L1976.1 1034.9L2056.0 1316.8L1706.8 1415.8Z"/><path d="M1631.4 1163.2L1979.9 1061.5L2061.9 1342.8L1713.4 1444.5Z"/><path d="M1641.2 1184.3L1990.0 1083.6L2071.2 1365.1L1722.5 1465.8Z"/><path d="M1648.7 1213.3L1997.4 1112.4L2078.9 1393.8L1730.2 1494.7Z"/><path d="M1654.2 1236.2L2002.8 1135.2L2084.4 1416.6L1735.7 1517.7Z"/><path d="M1660.9 1259.4L2009.4 1157.7L2091.4 1439.0L1743.0 1540.7Z"/><path d="M1669.5 1285.0L2018.2 1184.3L2099.5 1465.7L1750.8 1566.5Z"/><path d="M1679.2 1309.1L2028.2 1209.1L2108.9 1490.7L1760.0 1590.8Z"/><path d="M1684.6 1336.4L2033.0 1234.6L2115.2 1515.9L1766.8 1617.7Z"/><path d="M1692.6 1357.7L2041.7 1258.5L2121.8 1540.4L1772.6 1639.6Z"/><path d="M1701.4 1384.4L2050.3 1284.3L2131.1 1565.9L1782.2 1666.1Z"/><path d="M1336.1 682.7L1684.9 582.4L1765.9 864.0L1417.0 964.3Z"/><path d="M1342.1 697.9L1690.9 597.4L1772.0 879.0L1423.1 979.4Z"/><path d="M1350.1 720.8L1699.5 622.5L1778.9 904.5L1429.4 1002.8Z"/><path d="M1357.2 747.8L1706.4 648.5L1786.5 930.3L1437.4 1029.6Z"/><path d="M1364.8 770.6L1713.5 670.0L1794.8 951.5L1446.0 1052.1Z"/><path d="M1369.6 795.1L1718.1 693.5L1800.2 974.8L1451.7 1076.4Z"/><path d="M1380.1 820.4L1728.6 719.1L1810.4 1000.5L1461.8 1101.7Z"/><path d="M1387.3 848.7L1736.7 750.0L1816.3 1032.0L1467.0 1130.7Z"/><path d="M1395.4 871.0L1744.0 770.0L1825.5 1051.4L1476.9 1152.4Z"/><path d="M1402.0 898.0L1750.6 796.7L1832.4 1078.1L1483.8 1179.4Z"/><path d="M1410.6 919.9L1760.0 821.6L1839.4 1103.6L1490.0 1202.0Z"/><path d="M1420.0 948.2L1768.7 847.3L1850.2 1128.7L1501.5 1229.7Z"/><path d="M1427.3 971.6L1776.1 871.0L1857.3 1152.6L1508.5 1253.1Z"/><path d="M1432.0 998.0L1780.9 897.9L1861.7 1179.5L1512.8 1279.7Z"/><path d="M1441.1 1021.5L1790.0 921.4L1870.8 1203.1L1521.8 1303.1Z"/><path d="M1446.8 1048.6L1795.3 947.0L1877.3 1228.3L1528.8 1329.9Z"/><path d="M1455.4 1072.1L1803.8 970.3L1886.0 1251.5L1537.5 1353.3Z"/><path d="M1463.6 1097.5L1812.7 997.7L1893.2 1279.4L1544.1 1379.2Z"/><path d="M1473.2 1125.9L1822.3 1026.4L1902.6 1308.2L1553.5 1407.7Z"/><path d="M1481.6 1152.5L1830.4 1052.0L1911.5 1333.6L1562.7 1434.0Z"/><path d="M1487.9 1179.4L1836.5 1078.0L1918.3 1359.4L1569.7 1460.7Z"/><path d="M1496.2 1202.1L1844.7 1100.4L1926.8 1381.7L1578.3 1483.4Z"/><path d="M1505.3 1227.7L1854.4 1128.1L1934.8 1409.8L1585.7 1509.4Z"/><path d="M1512.1 1253.6L1860.6 1152.2L1942.5 1433.5L1593.9 1534.9Z"/><path d="M1519.1 1275.3L1868.4 1176.5L1948.2 1458.4L1598.9 1557.3Z"/><path d="M1528.2 1303.1L1877.2 1203.3L1957.7 1485.1L1608.7 1584.8Z"/><path d="M1536.0 1327.0L1885.1 1227.7L1965.3 1509.5L1616.2 1608.8Z"/><path d="M1539.6 1349.7L1888.1 1248.3L1970.0 1529.6L1621.4 1631.0Z"/><path d="M1548.6 1373.7L1897.8 1274.9L1977.6 1556.8L1628.3 1655.7Z"/><path d="M1557.8 1402.9L1906.9 1303.3L1987.2 1585.0L1638.2 1684.6Z"/><path d="M1565.0 1428.4L1913.5 1326.6L1995.7 1607.8L1647.3 1709.7Z"/><path d="M1574.1 1454.2L1923.1 1354.2L2003.8 1635.9L1654.9 1735.9Z"/><path d="M1227.6 722.4L1576.8 623.2L1656.8 905.1L1307.6 1004.3Z"/><path d="M1233.4 749.2L1582.1 648.3L1663.6 929.7L1314.9 1030.6Z"/><path d="M1243.5 773.8L1592.7 674.6L1672.7 956.5L1323.6 1055.7Z"/><path d="M1252.3 801.6L1601.1 701.1L1682.2 982.7L1333.4 1083.2Z"/><path d="M1259.0 827.8L1608.2 728.7L1688.2 1010.6L1339.0 1109.7Z"/><path d="M1266.5 854.2L1615.0 752.6L1697.0 1033.9L1348.5 1135.5Z"/><path d="M1272.4 875.7L1621.6 776.6L1701.6 1058.4L1352.4 1157.6Z"/><path d="M1280.6 904.6L1629.0 802.8L1711.2 1084.0L1362.8 1185.9Z"/><path d="M1287.5 926.6L1636.6 827.1L1716.8 1108.9L1367.7 1208.4Z"/><path d="M1297.8 954.9L1646.5 854.1L1727.9 1135.5L1379.2 1236.3Z"/><path d="M1304.6 978.4L1653.5 878.3L1734.4 1159.9L1385.5 1260.1Z"/><path d="M1311.6 1007.7L1660.2 906.5L1741.8 1187.9L1393.2 1289.1Z"/><path d="M1322.2 1032.8L1670.6 930.9L1752.8 1212.2L1404.3 1314.0Z"/><path d="M1328.7 1055.6L1678.2 957.2L1757.5 1239.3L1408.1 1337.6Z"/><path d="M1334.6 1078.7L1683.2 977.6L1764.8 1259.0L1416.2 1360.1Z"/><path d="M1344.3 1102.3L1693.3 1002.5L1773.8 1284.2L1424.8 1384.0Z"/><path d="M1350.2 1129.6L1699.6 1031.2L1779.0 1313.3L1429.6 1411.7Z"/><path d="M1358.0 1157.9L1706.9 1057.9L1787.7 1339.6L1438.7 1439.6Z"/><path d="M1367.8 1182.3L1716.5 1081.2L1798.0 1362.7L1449.4 1463.7Z"/><path d="M1374.9 1206.5L1723.4 1104.7L1805.5 1385.9L1457.1 1487.7Z"/><path d="M1379.9 1231.7L1728.8 1131.5L1809.7 1413.1L1460.8 1513.3Z"/><path d="M1387.9 1254.5L1736.7 1153.8L1817.9 1435.3L1469.1 1536.0Z"/><path d="M1396.7 1285.3L1745.1 1183.4L1827.3 1464.7L1478.9 1566.5Z"/><path d="M1406.0 1309.8L1754.6 1208.4L1836.4 1489.7L1487.9 1591.2Z"/><path d="M1414.8 1332.3L1764.2 1233.7L1843.8 1515.7L1494.4 1614.3Z"/><path d="M1419.2 1357.0L1768.0 1256.5L1849.1 1538.1L1500.2 1638.5Z"/><path d="M1429.7 1383.1L1778.5 1282.5L1859.7 1564.1L1510.9 1664.6Z"/><path d="M1434.5 1407.4L1783.0 1305.7L1865.1 1587.0L1516.6 1688.7Z"/><path d="M1442.4 1436.3L1791.1 1335.5L1872.5 1617.0L1523.8 1717.8Z"/><path d="M1451.8 1456.8L1800.5 1355.9L1882.0 1637.3L1533.3 1738.2Z"/><path d="M1458.1 1481.8L1806.9 1381.3L1888.0 1662.8L1539.2 1763.3Z"/><path d="M1285.7 1400.1L1634.8 1300.5L1715.2 1582.3L1366.1 1681.8Z"/><path d="M1293.9 1426.3L1642.9 1326.4L1723.5 1608.1L1374.5 1708.0Z"/><path d="M1299.6 1445.1L1648.8 1345.9L1728.9 1627.7L1379.7 1726.9Z"/><path d="M1307.9 1475.6L1657.0 1376.1L1737.4 1657.8L1388.3 1757.4Z"/><path d="M1314.2 1495.4L1663.6 1396.9L1743.1 1678.9L1393.7 1777.4Z"/><path d="M1321.9 1525.0L1670.7 1424.4L1751.9 1705.9L1403.1 1806.5Z"/><path d="M1331.6 1550.4L1681.0 1452.1L1760.3 1734.2L1410.9 1832.5Z"/></g><path fill="#90ff90" d="M1805 1390h2v2h-2zM1639 1405h2v2h-2zM1828 1599h2v2h-2zM2254 696h2v2h-2zM1469 1176h2v2h-2zM1728 813h2v2h-2zM2235 1138h2v2h-2zM1803 1342h2v2h-2zM1540 879h2v2h-2zM2245 1041h2v2h-2zM1898 1592h2v2h-2zM2210 531h2v2h-2zM1356 985h2v2h-2zM1737 839h2v2h-2zM2168 547h2v2h-2zM1888 749h2v2h-2zM1427 866h2v2h-2zM1994 1193h2v2h-2zM1500 964h2v2h-2zM2152 1034h2v2h-2zM1444 1071h2v2h-2zM1870 616h2v2h-2zM2016 922h2v2h-2zM1802 1577h2v2h-2zM1878 904h2v2h-2zM2347 1468h2v2h-2zM1632 1380h2v2h-2zM1720 737h2v2h-2zM1498 1303h2v2h-2zM1757 708h2v2h-2zM1999 1491h2v2h-2zM1458 773h2v2h-2zM2305 919h2v2h-2zM2064 1361h2v2h-2zM2282 1304h2v2h-2zM1557 1043h2v2h-2zM1635 718h2v2h-2zM2185 1406h2v2h-2zM1989 1310h2v2h-2zM1940 1181h2v2h-2zM1803 1172h2v2h-2zM1678 1405h2v2h-2zM1723 755h2v2h-2zM1372 800h2v2h-2zM1448 1120h2v2h-2zM1456 1331h2v2h-2zM2159 1283h2v2h-2zM1430 1193h2v2h-2zM2181 576h2v2h-2zM2412 1362h2v2h-2zM2256 1422h2v2h-2zM1787 1366h2v2h-2zM1515 1167h2v2h-2zM1508 908h2v2h-2zM1548 649h2v2h-2zM2138 624h2v2h-2zM1496 1203h2v2h-2zM1829 1482h2v2h-2zM2043 1431h2v2h-2zM2364 1063h2v2h-2zM1889 905h2v2h-2zM1707 756h2v2h-2zM2129 1517h2v2h-2zM1958 833h2v2h-2zM1424 892h2v2h-2zM1437 1031h2v2h-2zM1961 1134h2v2h-2zM1967 1008h2v2h-2zM2199 688h2v2h-2zM2097 891h2v2h-2zM1754 1255h2v2h-2zM2341 1183h2v2h-2zM1689 828h2v2h-2zM1981 498h2v2h-2zM2174 585h2v2h-2zM2061 653h2v2h-2zM2188 1207h2v2h-2zM2073 953h2v2h-2zM1400 905h2v2h-2zM2247 1186h2v2h-2zM1810 824h2v2h-2zM1322 958h2v2h-2zM2217 1449h2v2h-2zM1800 1498h2v2h-2zM1724 1550h2v2h-2zM1867 854h2v2h-2zM1378 687h2v2h-2zM2221 793h2v2h-2zM2040 1229h2v2h-2zM2167 548h2v2h-2zM1920 816h2v2h-2zM1545 1437h2v2h-2zM1660 1040h2v2h-2zM1560 914h2v2h-2zM1382 1108h2v2h-2zM1810 770h2v2h-2zM1933 1369h2v2h-2zM1806 914h2v2h-2zM1755 1581h2v2h-2zM1640 1346h2v2h-2zM1522 1312h2v2h-2zM1936 886h2v2h-2zM1868 1490h2v2h-2zM2089 481h2v2h-2zM1745 1537h2v2h-2zM1851 1488h2v2h-2zM2140 1145h2v2h-2zM2080 1267h2v2h-2zM1487 1131h2v2h-2zM1515 827h2v2h-2zM2149 1358h2v2h-2zM1453 906h2v2h-2zM1778 719h2v2h-2zM1608 1643h2v2h-2zM2060 937h2v2h-2zM1874 632h2v2h-2zM1971 993h2v2h-2zM2071 919h2v2h-2zM2178 1390h2v2h-2zM2149 1368h2v2h-2zM1977 982h2v2h-2zM1862 626h2v2h-2zM1594 1058h2v2h-2zM2175 629h2v2h-2zM1758 659h2v2h-2zM2084 1361h2v2h-2zM1899 1544h2v2h-2zM1366 961h2v2h-2zM2002 863h2v2h-2zM1800 776h2v2h-2zM1669 806h2v2h-2zM2209 1303h2v2h-2zM1844 1138h2v2h-2zM2252 1299h2v2h-2zM1673 1172h2v2h-2zM1597 1006h2v2h-2zM1694 770h2v2h-2zM2004 785h2v2h-2zM1660 1101h2v2h-2zM2033 1190h2v2h-2zM2368 1307h2v2h-2zM1932 772h2v2h-2zM1437 896h2v2h-2zM1840 814h2v2h-2zM1508 1159h2v2h-2zM1721 717h2v2h-2zM1712 1019h2v2h-2zM1489 1322h2v2h-2zM1806 1476h2v2h-2zM1560 1081h2v2h-2zM2002 1382h2v2h-2zM2141 880h2v2h-2zM2088 1319h2v2h-2zM1622 914h2v2h-2zM2067 1317h2v2h-2zM2180 1395h2v2h-2zM1367 989h2v2h-2zM1991 592h2v2h-2zM2147 1051h2v2h-2zM1643 1042h2v2h-2zM1449 1257h2v2h-2zM2240 898h2v2h-2zM2308 910h2v2h-2zM1517 1322h2v2h-2zM1382 673h2v2h-2zM1458 1421h2v2h-2zM1988 687h2v2h-2zM1754 1603h2v2h-2zM2037 556h2v2h-2zM1715 626h2v2h-2zM2031 1158h2v2h-2zM2147 1056h2v2h-2zM1652 1047h2v2h-2zM2323 1269h2v2h-2zM2227 1039h2v2h-2zM2207 799h2v2h-2zM1993 1352h2v2h-2zM2220 1434h2v2h-2zM2009 1217h2v2h-2zM1504 900h2v2h-2zM2123 946h2v2h-2zM2227 1257h2v2h-2zM1469 842h2v2h-2zM1767 1111h2v2h-2zM1555 1259h2v2h-2zM1735 578h2v2h-2zM1851 808h2v2h-2zM1914 1538h2v2h-2zM2294 1447h2v2h-2zM1327 892h2v2h-2zM2121 515h2v2h-2zM2341 1113h2v2h-2zM1707 738h2v2h-2zM2245 651h2v2h-2zM1579 984h2v2h-2zM2340 1296h2v2h-2zM2191 485h2v2h-2zM2226 1440h2v2h-2zM1427 997h2v2h-2zM1490 1151h2v2h-2zM1502 778h2v2h-2zM1452 1420h2v2h-2zM1496 1112h2v2h-2zM1763 918h2v2h-2zM1871 1202h2v2h-2zM1461 696h2v2h-2zM1804 694h2v2h-2zM1606 1042h2v2h-2zM1735 1472h2v2h-2zM1535 1149h2v2h-2zM2129 567h2v2h-2zM1573 1123h2v2h-2zM1537 832h2v2h-2zM1498 1417h2v2h-2zM1599 747h2v2h-2zM2181 1003h2v2h-2zM1913 1500h2v2h-2zM1819 682h2v2h-2zM2175 1206h2v2h-2zM1786 840h2v2h-2zM1848 744h2v2h-2zM2288 1341h2v2h-2zM2143 729h2v2h-2zM2134 842h2v2h-2zM1760 1198h2v2h-2zM1859 1007h2v2h-2zM1555 1387h2v2h-2zM1815 1353h2v2h-2zM2343 1423h2v2h-2zM1437 753h2v2h-2zM2023 506h2v2h-2zM1957 705h2v2h-2zM1931 548h2v2h-2zM1849 1069h2v2h-2zM1467 1075h2v2h-2zM2048 1406h2v2h-2zM1996 1296h2v2h-2zM2294 1419h2v2h-2zM1883 1541h2v2h-2zM1626 849h2v2h-2zM1424 1117h2v2h-2zM2246 1432h2v2h-2zM1451 1337h2v2h-2zM2296 1073h2v2h-2zM1596 929h2v2h-2zM1801 829h2v2h-2zM1786 703h2v2h-2zM1443 960h2v2h-2zM1579 866h2v2h-2zM1966 1199h2v2h-2zM1954 1005h2v2h-2zM1528 857h2v2h-2zM1768 1185h2v2h-2zM1819 1473h2v2h-2zM1907 1043h2v2h-2zM1671 641h2v2h-2zM1866 1321h2v2h-2zM1725 1606h2v2h-2zM1478 997h2v2h-2zM2163 1262h2v2h-2zM1606 1543h2v2h-2zM2319 1013h2v2h-2zM2235 1365h2v2h-2zM1726 1052h2v2h-2zM1875 935h2v2h-2zM2231 1341h2v2h-2zM1710 763h2v2h-2zM1583 1604h2v2h-2zM1925 1249h2v2h-2zM1747 1201h2v2h-2zM2335 1122h2v2h-2zM1435 1050h2v2h-2zM2296 926h2v2h-2zM2118 1533h2v2h-2zM1976 1377h2v2h-2zM1820 1600h2v2h-2zM2204 881h2v2h-2zM1465 832h2v2h-2zM1986 1213h2v2h-2zM1869 1121h2v2h-2zM1901 957h2v2h-2zM1602 1423h2v2h-2zM1377 844h2v2h-2zM1748 1333h2v2h-2zM1472 922h2v2h-2zM2265 1039h2v2h-2zM1774 965h2v2h-2zM1832 1205h2v2h-2zM1794 1520h2v2h-2zM1981 1522h2v2h-2zM1813 1318h2v2h-2zM1781 1498h2v2h-2zM2061 728h2v2h-2zM1673 1186h2v2h-2zM1854 942h2v2h-2zM1639 850h2v2h-2zM1572 861h2v2h-2zM1967 862h2v2h-2zM1934 599h2v2h-2zM2068 599h2v2h-2zM2265 1282h2v2h-2zM1779 1332h2v2h-2zM1781 790h2v2h-2zM1562 1376h2v2h-2zM2263 1046h2v2h-2zM1644 1246h2v2h-2zM2102 584h2v2h-2zM1830 823h2v2h-2zM1642 1008h2v2h-2zM1723 1105h2v2h-2zM1386 995h2v2h-2zM1560 1388h2v2h-2zM1881 1506h2v2h-2zM2326 1327h2v2h-2zM1969 872h2v2h-2zM2065 1224h2v2h-2zM1439 766h2v2h-2zM2141 1217h2v2h-2zM1318 852h2v2h-2zM1632 1000h2v2h-2zM1715 1258h2v2h-2zM1602 1068h2v2h-2zM2058 775h2v2h-2zM2225 1078h2v2h-2zM1516 1377h2v2h-2zM2187 1331h2v2h-2zM2322 1142h2v2h-2zM2208 1106h2v2h-2zM1486 1389h2v2h-2zM1991 1496h2v2h-2zM2344 1077h2v2h-2zM1488 691h2v2h-2zM1684 790h2v2h-2zM1568 1375h2v2h-2zM1530 878h2v2h-2zM1929 1522h2v2h-2zM1775 1510h2v2h-2zM1868 882h2v2h-2zM1977 1317h2v2h-2zM2206 1328h2v2h-2zM1613 984h2v2h-2zM1371 966h2v2h-2zM2033 959h2v2h-2zM1678 1083h2v2h-2zM1414 726h2v2h-2zM2399 1185h2v2h-2zM2202 1492h2v2h-2zM1478 1163h2v2h-2zM1571 1195h2v2h-2zM2298 1098h2v2h-2zM2316 1102h2v2h-2zM1508 772h2v2h-2zM2216 1334h2v2h-2zM2167 615h2v2h-2zM2241 1221h2v2h-2zM1744 1155h2v2h-2zM2097 713h2v2h-2zM2169 1419h2v2h-2zM1850 1068h2v2h-2zM1687 1204h2v2h-2zM2186 524h2v2h-2zM1708 771h2v2h-2zM2108 913h2v2h-2zM1683 1049h2v2h-2zM2284 1385h2v2h-2zM1644 1066h2v2h-2zM1622 801h2v2h-2zM2332 1061h2v2h-2zM1486 1366h2v2h-2zM1880 1221h2v2h-2zM1817 1498h2v2h-2zM1609 1333h2v2h-2zM1505 1343h2v2h-2zM1908 960h2v2h-2zM1887 944h2v2h-2zM1477 1209h2v2h-2zM1861 1124h2v2h-2zM1813 656h2v2h-2zM1818 619h2v2h-2zM1356 923h2v2h-2zM1724 1331h2v2h-2zM2262 1083h2v2h-2zM1609 1406h2v2h-2zM1458 1042h2v2h-2zM2348 1168h2v2h-2zM1839 634h2v2h-2zM1952 771h2v2h-2zM1347 689h2v2h-2zM1709 1313h2v2h-2zM1345 1041h2v2h-2zM2244 1076h2v2h-2zM1809 582h2v2h-2zM1713 1072h2v2h-2zM1706 950h2v2h-2zM1883 877h2v2h-2zM1957 1569h2v2h-2zM1566 1337h2v2h-2zM1639 1129h2v2h-2zM2222 1368h2v2h-2zM2022 1166h2v2h-2zM1732 1425h2v2h-2zM2327 1130h2v2h-2zM1941 879h2v2h-2zM1638 649h2v2h-2zM1828 1608h2v2h-2zM1654 844h2v2h-2zM1606 740h2v2h-2zM1864 849h2v2h-2zM1383 985h2v2h-2zM1825 1536h2v2h-2zM1361 858h2v2h-2zM1893 1458h2v2h-2zM1956 1474h2v2h-2zM1485 652h2v2h-2zM1693 1337h2v2h-2zM1673 792h2v2h-2zM2246 1116h2v2h-2zM2213 1470h2v2h-2zM1598 744h2v2h-2zM1999 1436h2v2h-2zM2177 660h2v2h-2zM1980 854h2v2h-2zM1612 1097h2v2h-2zM1574 703h2v2h-2zM1591 1435h2v2h-2zM2133 903h2v2h-2zM1904 868h2v2h-2zM1685 1347h2v2h-2zM2298 889h2v2h-2zM2005 1506h2v2h-2zM1670 1400h2v2h-2zM1298 827h2v2h-2zM1873 1122h2v2h-2zM1749 1624h2v2h-2zM1766 900h2v2h-2zM1548 1410h2v2h-2zM2385 1401h2v2h-2zM1520 892h2v2h-2zM1714 814h2v2h-2zM2145 1140h2v2h-2zM1706 1385h2v2h-2zM1599 956h2v2h-2zM2131 618h2v2h-2zM1524 642h2v2h-2zM1590 1401h2v2h-2zM1591 1342h2v2h-2zM1823 1533h2v2h-2zM2359 1446h2v2h-2zM1686 1434h2v2h-2zM1415 1198h2v2h-2zM1674 687h2v2h-2zM1489 1158h2v2h-2zM1694 762h2v2h-2zM1588 1404h2v2h-2zM1442 1025h2v2h-2zM2212 800h2v2h-2zM1545 803h2v2h-2zM1784 1149h2v2h-2zM1706 911h2v2h-2zM1653 1246h2v2h-2zM1520 834h2v2h-2zM1481 1386h2v2h-2zM2009 1076h2v2h-2zM1816 776h2v2h-2zM1749 1544h2v2h-2zM2079 717h2v2h-2zM2050 599h2v2h-2zM1503 734h2v2h-2zM2216 1246h2v2h-2zM1567 1008h2v2h-2zM1602 613h2v2h-2zM1795 601h2v2h-2zM1999 780h2v2h-2zM1705 1475h2v2h-2zM2089 1392h2v2h-2zM1790 1318h2v2h-2zM1681 992h2v2h-2zM2172 639h2v2h-2zM2314 1216h2v2h-2zM2155 888h2v2h-2zM2057 902h2v2h-2zM2003 607h2v2h-2zM1482 1372h2v2h-2zM2266 1355h2v2h-2zM1702 1131h2v2h-2zM1912 1063h2v2h-2zM2247 1344h2v2h-2zM1441 697h2v2h-2zM1724 1065h2v2h-2zM1897 908h2v2h-2zM1690 1572h2v2h-2zM1372 1002h2v2h-2zM1787 1157h2v2h-2zM1724 1428h2v2h-2zM2144 1314h2v2h-2zM1938 1518h2v2h-2zM2089 517h2v2h-2zM1474 1281h2v2h-2zM1637 1586h2v2h-2zM1741 1543h2v2h-2zM1623 1223h2v2h-2zM1813 701h2v2h-2zM1786 1460h2v2h-2zM2281 1469h2v2h-2zM1604 1189h2v2h-2zM2283 973h2v2h-2zM1782 1361h2v2h-2zM2149 538h2v2h-2zM2232 1066h2v2h-2zM1357 816h2v2h-2zM2331 1308h2v2h-2zM1734 826h2v2h-2zM1631 1445h2v2h-2zM1461 1245h2v2h-2zM1513 1326h2v2h-2zM1887 897h2v2h-2zM1914 683h2v2h-2zM2207 945h2v2h-2zM1577 1561h2v2h-2zM1862 1104h2v2h-2zM1727 737h2v2h-2zM1823 931h2v2h-2zM1677 794h2v2h-2zM1714 1513h2v2h-2zM1456 924h2v2h-2zM1758 1114h2v2h-2zM2109 540h2v2h-2zM1930 567h2v2h-2zM2090 1527h2v2h-2zM1794 1424h2v2h-2zM1744 997h2v2h-2zM1679 1373h2v2h-2zM1477 1005h2v2h-2zM1486 867h2v2h-2zM2092 1267h2v2h-2zM2186 1335h2v2h-2zM2235 1363h2v2h-2zM1716 1476h2v2h-2zM1554 1107h2v2h-2zM2140 883h2v2h-2zM2098 1364h2v2h-2zM1378 1192h2v2h-2zM1943 995h2v2h-2zM1539 998h2v2h-2zM1909 824h2v2h-2zM1695 1333h2v2h-2zM2098 1333h2v2h-2zM2075 1434h2v2h-2zM1987 1527h2v2h-2zM1540 1187h2v2h-2zM2079 730h2v2h-2zM1833 939h2v2h-2zM2280 1127h2v2h-2zM2244 953h2v2h-2zM2209 1393h2v2h-2zM2356 1086h2v2h-2zM2111 1202h2v2h-2zM2092 832h2v2h-2zM1980 1443h2v2h-2zM1988 669h2v2h-2zM1370 985h2v2h-2zM2436 1405h2v2h-2zM1801 1567h2v2h-2zM1666 1054h2v2h-2zM1595 1026h2v2h-2zM2067 1310h2v2h-2zM1597 1422h2v2h-2zM1601 990h2v2h-2zM1822 845h2v2h-2zM1704 1407h2v2h-2zM2187 1044h2v2h-2zM2341 1074h2v2h-2zM2104 831h2v2h-2zM2134 1426h2v2h-2zM1575 673h2v2h-2zM1902 948h2v2h-2zM1739 1477h2v2h-2zM2107 1408h2v2h-2zM1515 692h2v2h-2zM2100 749h2v2h-2zM1474 733h2v2h-2zM1445 939h2v2h-2zM1629 1273h2v2h-2zM1714 1182h2v2h-2zM2161 1020h2v2h-2zM1893 1153h2v2h-2zM1439 1162h2v2h-2zM1766 919h2v2h-2zM1700 874h2v2h-2zM1625 1355h2v2h-2zM1352 890h2v2h-2zM1588 986h2v2h-2zM2124 1527h2v2h-2zM1361 779h2v2h-2zM2056 603h2v2h-2zM1918 1057h2v2h-2zM2252 1326h2v2h-2zM2118 952h2v2h-2zM2237 995h2v2h-2zM1881 1212h2v2h-2zM1727 1547h2v2h-2zM1503 1268h2v2h-2zM1556 1105h2v2h-2zM2046 1238h2v2h-2zM1507 1412h2v2h-2zM1798 974h2v2h-2zM2031 986h2v2h-2zM2275 1055h2v2h-2zM1746 1630h2v2h-2zM2053 1274h2v2h-2zM2186 666h2v2h-2zM2307 1089h2v2h-2zM1528 782h2v2h-2zM1536 1172h2v2h-2zM2032 1343h2v2h-2zM1442 1235h2v2h-2zM1706 697h2v2h-2zM1555 1076h2v2h-2zM2324 983h2v2h-2zM2073 569h2v2h-2zM1743 1386h2v2h-2zM1786 986h2v2h-2zM2118 1446h2v2h-2zM1677 1602h2v2h-2zM1981 761h2v2h-2zM1660 931h2v2h-2zM1591 1047h2v2h-2zM1938 898h2v2h-2zM2203 597h2v2h-2zM1887 1510h2v2h-2zM2184 524h2v2h-2zM1770 1535h2v2h-2zM1528 1093h2v2h-2zM2109 1263h2v2h-2zM1544 891h2v2h-2zM1954 721h2v2h-2zM2341 1084h2v2h-2zM1542 681h2v2h-2zM1351 1060h2v2h-2zM1483 1167h2v2h-2zM1431 752h2v2h-2zM1801 1445h2v2h-2zM2194 1156h2v2h-2zM1574 1321h2v2h-2zM1917 700h2v2h-2zM2021 1095h2v2h-2zM1579 1000h2v2h-2zM1411 919h2v2h-2zM1615 1005h2v2h-2zM1503 834h2v2h-2zM1706 963h2v2h-2zM1935 1448h2v2h-2zM2109 1362h2v2h-2zM1387 1134h2v2h-2zM1878 1291h2v2h-2zM1484 1151h2v2h-2zM1581 1080h2v2h-2zM1402 1045h2v2h-2zM2289 1002h2v2h-2zM1660 1389h2v2h-2zM1460 725h2v2h-2zM1435 1136h2v2h-2zM1621 1312h2v2h-2zM1732 583h2v2h-2zM2096 1038h2v2h-2zM1885 1173h2v2h-2zM2189 1362h2v2h-2zM2148 635h2v2h-2zM2065 1445h2v2h-2zM1450 676h2v2h-2zM1422 854h2v2h-2zM2062 1488h2v2h-2zM1593 1117h2v2h-2zM1727 1607h2v2h-2zM1721 934h2v2h-2zM1363 1070h2v2h-2zM1610 1087h2v2h-2zM1953 643h2v2h-2zM1626 1635h2v2h-2zM1515 1189h2v2h-2zM2097 514h2v2h-2zM1881 1484h2v2h-2zM2332 1429h2v2h-2zM2251 853h2v2h-2zM2137 554h2v2h-2zM1757 676h2v2h-2zM2371 1424h2v2h-2zM1606 1348h2v2h-2zM1565 1004h2v2h-2zM2086 1229h2v2h-2zM1580 1070h2v2h-2zM1549 1055h2v2h-2zM1419 889h2v2h-2zM1497 662h2v2h-2zM1743 1013h2v2h-2zM2062 1491h2v2h-2zM1776 1313h2v2h-2zM1540 1137h2v2h-2zM1925 676h2v2h-2zM1853 738h2v2h-2zM1954 1285h2v2h-2zM1301 685h2v2h-2zM2203 583h2v2h-2zM1825 879h2v2h-2zM1765 829h2v2h-2zM1360 840h2v2h-2zM2031 1231h2v2h-2zM2201 1218h2v2h-2zM1757 755h2v2h-2zM1783 597h2v2h-2zM1492 1265h2v2h-2zM2142 1317h2v2h-2zM1481 730h2v2h-2zM1813 684h2v2h-2zM1821 648h2v2h-2zM1538 894h2v2h-2zM1952 1284h2v2h-2zM1989 724h2v2h-2zM2044 1222h2v2h-2zM2154 659h2v2h-2zM1942 781h2v2h-2zM2195 1471h2v2h-2zM1620 933h2v2h-2zM1462 1299h2v2h-2zM1428 1204h2v2h-2zM2377 1329h2v2h-2zM1456 766h2v2h-2zM1836 923h2v2h-2zM1963 1337h2v2h-2zM1411 1071h2v2h-2zM1667 1305h2v2h-2zM2390 1388h2v2h-2zM1465 1131h2v2h-2zM2140 580h2v2h-2zM1912 832h2v2h-2zM2173 1271h2v2h-2zM1428 1073h2v2h-2zM2169 487h2v2h-2zM2006 625h2v2h-2zM2078 642h2v2h-2zM2087 919h2v2h-2zM1421 911h2v2h-2zM1419 929h2v2h-2zM2347 1367h2v2h-2zM2322 1047h2v2h-2zM1412 859h2v2h-2zM1543 889h2v2h-2zM1613 795h2v2h-2zM2268 1345h2v2h-2zM2368 1414h2v2h-2zM2281 1293h2v2h-2zM1691 977h2v2h-2zM1626 707h2v2h-2zM2300 1219h2v2h-2zM1664 1292h2v2h-2zM2074 604h2v2h-2zM1792 1435h2v2h-2zM2069 1172h2v2h-2zM2126 677h2v2h-2zM1500 732h2v2h-2zM1556 1111h2v2h-2zM2276 1442h2v2h-2zM2096 1429h2v2h-2zM2305 1193h2v2h-2zM2234 1038h2v2h-2zM2034 1375h2v2h-2zM1816 987h2v2h-2zM1929 727h2v2h-2zM1857 1567h2v2h-2zM1616 1588h2v2h-2zM2245 1271h2v2h-2zM1661 1390h2v2h-2zM1757 965h2v2h-2zM2180 648h2v2h-2zM1759 1348h2v2h-2zM1999 1348h2v2h-2zM1991 1501h2v2h-2zM1812 1191h2v2h-2zM1618 1048h2v2h-2zM1707 664h2v2h-2zM1533 892h2v2h-2zM2132 1531h2v2h-2zM2037 736h2v2h-2zM1505 1069h2v2h-2zM1569 780h2v2h-2zM1370 871h2v2h-2zM1768 746h2v2h-2zM1935 1561h2v2h-2zM2273 916h2v2h-2zM1840 683h2v2h-2zM1721 946h2v2h-2zM1769 1300h2v2h-2zM1742 1026h2v2h-2zM2182 586h2v2h-2zM1874 955h2v2h-2zM1812 930h2v2h-2zM1982 1005h2v2h-2zM1589 1002h2v2h-2zM1844 1521h2v2h-2zM1592 959h2v2h-2zM1585 1352h2v2h-2zM1439 889h2v2h-2zM1697 1367h2v2h-2zM2377 1405h2v2h-2zM2140 537h2v2h-2zM1703 775h2v2h-2zM2165 853h2v2h-2zM2178 470h2v2h-2zM1868 640h2v2h-2zM1761 975h2v2h-2zM1737 1619h2v2h-2zM1958 682h2v2h-2zM1480 1012h2v2h-2zM1905 875h2v2h-2zM1810 689h2v2h-2zM1799 1291h2v2h-2zM2227 1273h2v2h-2zM2299 1065h2v2h-2zM2379 1122h2v2h-2zM1763 1555h2v2h-2zM2341 1208h2v2h-2zM1541 1460h2v2h-2zM1865 1311h2v2h-2zM2119 1154h2v2h-2zM1914 1292h2v2h-2zM1939 800h2v2h-2zM1891 1548h2v2h-2zM1563 1423h2v2h-2zM1964 1298h2v2h-2zM1950 905h2v2h-2zM1400 1159h2v2h-2zM2131 1238h2v2h-2zM2178 631h2v2h-2zM2046 597h2v2h-2zM1808 902h2v2h-2zM1736 1552h2v2h-2zM2277 1069h2v2h-2zM2178 913h2v2h-2zM1584 1346h2v2h-2zM1668 758h2v2h-2zM1825 1068h2v2h-2zM1759 1146h2v2h-2zM1319 898h2v2h-2zM1686 1257h2v2h-2zM2338 1131h2v2h-2zM2324 1079h2v2h-2zM2251 1139h2v2h-2zM1748 1614h2v2h-2zM1752 679h2v2h-2zM2378 1112h2v2h-2zM2035 1370h2v2h-2zM1478 825h2v2h-2zM1599 1612h2v2h-2zM2224 978h2v2h-2zM1554 1422h2v2h-2zM1479 1026h2v2h-2zM2018 1188h2v2h-2zM2086 1057h2v2h-2zM2167 710h2v2h-2zM1427 807h2v2h-2zM1944 1107h2v2h-2zM1757 566h2v2h-2zM1705 822h2v2h-2zM1702 1465h2v2h-2zM1459 1156h2v2h-2zM1775 1380h2v2h-2zM2115 1358h2v2h-2zM1981 1494h2v2h-2zM1426 720h2v2h-2zM1575 698h2v2h-2zM1727 895h2v2h-2zM2199 689h2v2h-2zM1618 943h2v2h-2zM2032 938h2v2h-2zM1435 1195h2v2h-2zM1769 729h2v2h-2zM1838 1248h2v2h-2zM2097 455h2v2h-2zM1671 790h2v2h-2zM2178 1514h2v2h-2zM1681 1303h2v2h-2zM1402 728h2v2h-2zM2446 1356h2v2h-2zM1854 1055h2v2h-2zM1782 1562h2v2h-2zM1726 712h2v2h-2zM1552 1357h2v2h-2zM2068 1526h2v2h-2zM2148 1311h2v2h-2zM1556 665h2v2h-2zM1789 1318h2v2h-2zM2295 873h2v2h-2zM1876 519h2v2h-2zM1800 1529h2v2h-2zM2123 1479h2v2h-2zM1570 1169h2v2h-2zM1663 984h2v2h-2zM1859 763h2v2h-2zM1859 1070h2v2h-2zM1719 1401h2v2h-2zM2129 1007h2v2h-2zM2266 961h2v2h-2zM1626 1025h2v2h-2zM1567 1097h2v2h-2zM1629 978h2v2h-2zM1994 708h2v2h-2zM2041 1225h2v2h-2zM1395 1047h2v2h-2zM1586 717h2v2h-2zM1774 1004h2v2h-2zM2217 617h2v2h-2zM1768 1553h2v2h-2zM1697 776h2v2h-2zM1768 980h2v2h-2zM1482 650h2v2h-2zM1884 718h2v2h-2zM2054 1131h2v2h-2zM1551 648h2v2h-2zM1411 881h2v2h-2zM1736 952h2v2h-2zM1976 1564h2v2h-2zM1662 825h2v2h-2zM2220 1336h2v2h-2zM1834 1400h2v2h-2zM1699 1388h2v2h-2zM2208 519h2v2h-2zM1436 643h2v2h-2zM1426 1047h2v2h-2zM1802 852h2v2h-2zM2010 1549h2v2h-2zM1864 1058h2v2h-2zM1672 940h2v2h-2zM1853 831h2v2h-2zM2253 810h2v2h-2zM2014 1056h2v2h-2zM1791 1462h2v2h-2zM1909 1551h2v2h-2zM1664 753h2v2h-2zM1684 1433h2v2h-2zM2081 1194h2v2h-2zM1741 769h2v2h-2zM2050 1223h2v2h-2zM1544 1167h2v2h-2zM1798 684h2v2h-2zM1861 666h2v2h-2zM2144 1062h2v2h-2zM1511 1288h2v2h-2zM2407 1424h2v2h-2zM1733 1480h2v2h-2zM2175 998h2v2h-2zM1687 1551h2v2h-2zM1355 1032h2v2h-2zM1482 1310h2v2h-2zM1470 951h2v2h-2zM1769 1557h2v2h-2zM1999 728h2v2h-2zM2098 608h2v2h-2zM1697 1611h2v2h-2zM2185 1334h2v2h-2zM2012 908h2v2h-2zM1716 1603h2v2h-2zM1865 1065h2v2h-2zM1634 813h2v2h-2zM1779 711h2v2h-2zM1631 1374h2v2h-2zM2037 572h2v2h-2zM1849 760h2v2h-2zM1761 1490h2v2h-2zM2117 1336h2v2h-2zM2152 1476h2v2h-2zM1448 1087h2v2h-2zM1439 882h2v2h-2zM1647 743h2v2h-2zM1840 733h2v2h-2zM1874 996h2v2h-2zM1933 1086h2v2h-2zM1727 1082h2v2h-2zM2048 1221h2v2h-2zM1971 1288h2v2h-2zM2287 1348h2v2h-2zM1494 716h2v2h-2zM1457 1170h2v2h-2zM1653 1083h2v2h-2zM2196 1213h2v2h-2zM1449 646h2v2h-2zM2245 637h2v2h-2zM1698 907h2v2h-2zM2287 956h2v2h-2zM1739 749h2v2h-2zM2081 1377h2v2h-2zM2051 1183h2v2h-2zM1749 906h2v2h-2zM1592 736h2v2h-2zM1736 1419h2v2h-2zM1988 1365h2v2h-2zM1519 1049h2v2h-2zM1665 709h2v2h-2zM1799 1593h2v2h-2zM1715 810h2v2h-2zM1827 1354h2v2h-2zM1349 712h2v2h-2zM2127 665h2v2h-2zM2042 769h2v2h-2zM1360 1073h2v2h-2zM1690 585h2v2h-2zM1469 721h2v2h-2zM1568 1168h2v2h-2zM2138 895h2v2h-2zM1706 1481h2v2h-2zM2003 1266h2v2h-2zM1762 751h2v2h-2zM1671 1213h2v2h-2zM1681 1272h2v2h-2zM2142 980h2v2h-2zM1490 1181h2v2h-2zM1714 1451h2v2h-2zM2168 1040h2v2h-2zM2109 640h2v2h-2zM1878 726h2v2h-2zM1470 1151h2v2h-2zM1902 554h2v2h-2zM1780 748h2v2h-2zM1921 1419h2v2h-2zM2284 1358h2v2h-2zM2123 963h2v2h-2zM2234 1143h2v2h-2zM1546 1230h2v2h-2zM1584 710h2v2h-2zM1793 1466h2v2h-2zM1603 1024h2v2h-2zM1759 963h2v2h-2zM2165 842h2v2h-2zM2217 666h2v2h-2zM1935 1048h2v2h-2zM1787 1600h2v2h-2zM2435 1323h2v2h-2zM1602 1029h2v2h-2zM2173 1049h2v2h-2zM2227 819h2v2h-2zM2051 812h2v2h-2zM2059 1346h2v2h-2zM2145 1413h2v2h-2zM1505 1160h2v2h-2zM2174 1119h2v2h-2zM2212 609h2v2h-2zM1903 1550h2v2h-2zM1548 942h2v2h-2zM1523 983h2v2h-2zM1338 730h2v2h-2zM2202 1061h2v2h-2zM1355 1083h2v2h-2zM1845 595h2v2h-2zM1734 1093h2v2h-2zM1838 652h2v2h-2zM1763 1552h2v2h-2zM1680 894h2v2h-2zM1918 865h2v2h-2zM2061 1546h2v2h-2zM2339 1063h2v2h-2zM1570 1019h2v2h-2zM2253 1446h2v2h-2zM1838 947h2v2h-2zM2243 1431h2v2h-2zM2025 1486h2v2h-2zM1593 766h2v2h-2zM1726 1323h2v2h-2zM1712 1588h2v2h-2zM2133 1368h2v2h-2zM1569 878h2v2h-2zM1554 714h2v2h-2zM1416 763h2v2h-2zM2121 621h2v2h-2zM1384 926h2v2h-2zM1361 1035h2v2h-2zM1943 1259h2v2h-2zM1685 889h2v2h-2zM2001 713h2v2h-2zM1753 1494h2v2h-2zM1802 951h2v2h-2zM2132 722h2v2h-2zM1476 1178h2v2h-2zM1803 953h2v2h-2zM2194 834h2v2h-2zM1953 829h2v2h-2zM1637 1071h2v2h-2zM1969 1542h2v2h-2zM2299 1093h2v2h-2zM1915 1586h2v2h-2zM2280 1294h2v2h-2zM1799 986h2v2h-2zM2209 1218h2v2h-2zM2320 1079h2v2h-2zM1730 940h2v2h-2zM1875 980h2v2h-2zM1677 1111h2v2h-2zM2332 999h2v2h-2zM2238 1382h2v2h-2zM1754 596h2v2h-2zM2070 1212h2v2h-2zM2349 1275h2v2h-2zM1460 682h2v2h-2zM1628 1073h2v2h-2zM1463 831h2v2h-2zM1873 1297h2v2h-2zM1771 1159h2v2h-2zM2358 1111h2v2h-2zM1872 625h2v2h-2zM1697 1487h2v2h-2zM2007 807h2v2h-2zM2298 1471h2v2h-2zM2060 806h2v2h-2zM1578 1116h2v2h-2zM2015 1271h2v2h-2zM1629 960h2v2h-2zM1610 1390h2v2h-2zM1994 642h2v2h-2zM1622 1150h2v2h-2zM2350 1404h2v2h-2zM1751 1588h2v2h-2zM1469 759h2v2h-2zM1399 848h2v2h-2zM1915 991h2v2h-2zM1827 1532h2v2h-2zM1907 1025h2v2h-2zM1467 1397h2v2h-2zM1986 1394h2v2h-2zM1902 1234h2v2h-2zM1618 1366h2v2h-2zM1529 743h2v2h-2zM1788 731h2v2h-2zM1416 884h2v2h-2zM1952 1511h2v2h-2zM1890 1557h2v2h-2zM2415 1334h2v2h-2zM2027 1500h2v2h-2zM1734 1303h2v2h-2zM1833 1405h2v2h-2zM1398 1186h2v2h-2zM2250 1147h2v2h-2zM2438 1388h2v2h-2zM1515 1387h2v2h-2zM1503 667h2v2h-2zM2398 1173h2v2h-2zM1828 672h2v2h-2zM1474 1390h2v2h-2zM1744 711h2v2h-2zM1711 853h2v2h-2zM1860 1227h2v2h-2zM2241 645h2v2h-2zM1637 925h2v2h-2zM2150 1265h2v2h-2zM2026 1319h2v2h-2zM1800 1437h2v2h-2zM2202 551h2v2h-2zM2078 1308h2v2h-2zM2037 1475h2v2h-2zM2122 1070h2v2h-2zM1762 1008h2v2h-2zM1874 911h2v2h-2zM1748 957h2v2h-2zM1740 1044h2v2h-2zM1653 840h2v2h-2zM2340 1407h2v2h-2zM1771 899h2v2h-2zM2328 1299h2v2h-2zM1794 962h2v2h-2zM2049 967h2v2h-2zM1502 1421h2v2h-2zM2199 1149h2v2h-2zM2355 1396h2v2h-2zM1740 1568h2v2h-2zM1415 897h2v2h-2zM1874 870h2v2h-2zM1822 1562h2v2h-2zM1721 1221h2v2h-2zM1570 640h2v2h-2zM1818 718h2v2h-2zM2085 1439h2v2h-2zM1646 1221h2v2h-2zM2026 642h2v2h-2zM1915 1496h2v2h-2zM1454 779h2v2h-2zM1665 1007h2v2h-2zM1756 1068h2v2h-2zM2234 1399h2v2h-2zM1932 1244h2v2h-2zM1778 1306h2v2h-2zM1796 764h2v2h-2zM1751 1295h2v2h-2zM1374 943h2v2h-2zM2179 1029h2v2h-2zM1554 925h2v2h-2zM2156 1401h2v2h-2zM1354 713h2v2h-2zM1917 972h2v2h-2zM1831 1499h2v2h-2zM1386 872h2v2h-2zM2354 1080h2v2h-2zM1581 897h2v2h-2zM1621 792h2v2h-2zM2194 694h2v2h-2zM2025 1190h2v2h-2zM1657 1532h2v2h-2zM1469 896h2v2h-2zM2223 927h2v2h-2zM2110 894h2v2h-2zM1955 841h2v2h-2zM1506 1060h2v2h-2zM1850 1396h2v2h-2zM1818 1551h2v2h-2zM2151 1061h2v2h-2zM1658 1022h2v2h-2zM2249 1370h2v2h-2zM1687 944h2v2h-2zM1650 930h2v2h-2zM2201 1386h2v2h-2zM2120 1051h2v2h-2zM1750 1517h2v2h-2zM1549 701h2v2h-2zM1899 1113h2v2h-2zM1786 1149h2v2h-2zM2142 551h2v2h-2zM2164 1449h2v2h-2zM1532 1194h2v2h-2zM1776 1593h2v2h-2zM1929 1371h2v2h-2zM2274 1149h2v2h-2zM1472 999h2v2h-2zM1866 567h2v2h-2zM1470 1254h2v2h-2zM1612 1080h2v2h-2zM1747 889h2v2h-2zM1846 1589h2v2h-2zM2167 1334h2v2h-2zM1451 1014h2v2h-2zM2214 660h2v2h-2zM1334 969h2v2h-2zM1825 858h2v2h-2zM1942 1148h2v2h-2zM1817 1038h2v2h-2zM2285 1289h2v2h-2zM1479 925h2v2h-2zM2206 542h2v2h-2zM1671 955h2v2h-2zM2021 1519h2v2h-2zM1873 910h2v2h-2zM2400 1399h2v2h-2zM1716 1458h2v2h-2zM1904 1538h2v2h-2zM1752 1186h2v2h-2zM2099 1164h2v2h-2zM2133 519h2v2h-2zM1607 749h2v2h-2zM1821 831h2v2h-2zM2157 881h2v2h-2zM1639 1590h2v2h-2zM1529 1064h2v2h-2zM1644 585h2v2h-2zM1953 637h2v2h-2zM1911 903h2v2h-2zM1714 820h2v2h-2zM2231 642h2v2h-2zM1928 618h2v2h-2zM1938 1574h2v2h-2zM1672 1092h2v2h-2zM1820 1296h2v2h-2zM2047 667h2v2h-2zM1624 727h2v2h-2zM1545 1116h2v2h-2zM1527 992h2v2h-2zM1383 990h2v2h-2zM1873 517h2v2h-2zM1392 1125h2v2h-2zM1919 1194h2v2h-2zM1710 1414h2v2h-2zM1564 955h2v2h-2zM1722 599h2v2h-2zM2049 1348h2v2h-2zM1762 1026h2v2h-2zM2377 1374h2v2h-2zM1943 650h2v2h-2zM1747 573h2v2h-2zM2332 1274h2v2h-2zM1352 680h2v2h-2zM2278 1305h2v2h-2zM1705 1500h2v2h-2zM2398 1417h2v2h-2zM2016 722h2v2h-2zM1845 1603h2v2h-2zM1774 1471h2v2h-2zM1899 954h2v2h-2zM2110 1120h2v2h-2zM2162 1335h2v2h-2zM2107 1467h2v2h-2zM1632 1141h2v2h-2zM2269 1033h2v2h-2zM2019 1332h2v2h-2zM1386 777h2v2h-2zM1900 651h2v2h-2zM1707 570h2v2h-2zM1657 802h2v2h-2zM1552 874h2v2h-2zM1733 949h2v2h-2zM1705 567h2v2h-2zM2226 914h2v2h-2zM2275 1374h2v2h-2zM1874 1128h2v2h-2zM2013 1153h2v2h-2zM2322 1376h2v2h-2zM2018 662h2v2h-2zM1566 1021h2v2h-2zM2048 667h2v2h-2zM1684 1269h2v2h-2zM1588 1181h2v2h-2zM1506 781h2v2h-2zM1824 1498h2v2h-2zM1380 896h2v2h-2zM1747 581h2v2h-2zM1948 1151h2v2h-2zM1733 1018h2v2h-2zM2321 1466h2v2h-2zM2431 1416h2v2h-2zM1680 1425h2v2h-2zM1763 938h2v2h-2zM1836 1108h2v2h-2zM1473 1159h2v2h-2zM1525 1100h2v2h-2zM1864 1097h2v2h-2zM1753 1361h2v2h-2zM1995 486h2v2h-2zM1536 1015h2v2h-2zM1880 1568h2v2h-2zM2041 1372h2v2h-2zM1776 1246h2v2h-2zM2152 679h2v2h-2zM1982 1556h2v2h-2zM1664 1445h2v2h-2zM1809 1423h2v2h-2zM2223 937h2v2h-2zM1520 1159h2v2h-2zM2102 615h2v2h-2zM1712 680h2v2h-2zM2323 1177h2v2h-2zM1459 897h2v2h-2zM1891 1147h2v2h-2zM1723 713h2v2h-2zM1411 1073h2v2h-2zM1693 1380h2v2h-2zM1511 1172h2v2h-2zM2213 911h2v2h-2zM1420 1313h2v2h-2zM1700 1524h2v2h-2zM1303 773h2v2h-2zM1885 1574h2v2h-2zM1777 650h2v2h-2zM1754 907h2v2h-2zM1928 631h2v2h-2zM1359 951h2v2h-2zM1408 885h2v2h-2zM1560 894h2v2h-2zM1946 1159h2v2h-2zM1760 672h2v2h-2zM1880 600h2v2h-2zM1703 1434h2v2h-2zM1853 1574h2v2h-2zM1711 1037h2v2h-2zM2361 1073h2v2h-2zM1882 864h2v2h-2zM1862 1207h2v2h-2zM1667 1410h2v2h-2zM2367 1399h2v2h-2zM1483 1317h2v2h-2zM2248 1150h2v2h-2zM1852 1268h2v2h-2zM1822 643h2v2h-2zM2048 1475h2v2h-2zM1992 1194h2v2h-2zM1821 579h2v2h-2zM2255 1001h2v2h-2zM2176 1439h2v2h-2zM2083 1337h2v2h-2zM1910 1390h2v2h-2zM2324 1061h2v2h-2zM1500 1252h2v2h-2zM1593 759h2v2h-2zM1467 1349h2v2h-2zM2320 1226h2v2h-2zM2238 949h2v2h-2zM2071 1234h2v2h-2zM1618 1048h2v2h-2zM1497 796h2v2h-2zM1881 586h2v2h-2zM1550 702h2v2h-2zM2289 1245h2v2h-2zM2019 1044h2v2h-2zM1935 639h2v2h-2zM2211 1039h2v2h-2zM1767 570h2v2h-2zM1736 1434h2v2h-2zM2026 1282h2v2h-2zM2094 528h2v2h-2zM1544 853h2v2h-2zM1830 1552h2v2h-2zM1436 1033h2v2h-2zM1727 1022h2v2h-2zM2041 1183h2v2h-2zM1966 1552h2v2h-2zM2346 1163h2v2h-2zM1924 696h2v2h-2zM1798 1623h2v2h-2zM1386 1013h2v2h-2zM1786 1043h2v2h-2zM1410 808h2v2h-2zM2121 916h2v2h-2zM2166 582h2v2h-2zM1464 1343h2v2h-2zM1603 1053h2v2h-2zM1770 1002h2v2h-2zM1453 781h2v2h-2zM1777 1331h2v2h-2zM1645 1054h2v2h-2zM1824 837h2v2h-2zM1831 1301h2v2h-2zM1981 953h2v2h-2zM1382 817h2v2h-2zM1599 1317h2v2h-2zM2169 686h2v2h-2zM1449 795h2v2h-2zM1858 794h2v2h-2zM1988 964h2v2h-2zM1855 1554h2v2h-2zM1796 813h2v2h-2zM1554 1357h2v2h-2zM2426 1409h2v2h-2zM2378 1286h2v2h-2zM2001 1156h2v2h-2zM1681 730h2v2h-2zM2036 1426h2v2h-2zM1567 691h2v2h-2zM1969 1382h2v2h-2zM1498 957h2v2h-2zM1638 1276h2v2h-2zM1516 1392h2v2h-2zM1477 1146h2v2h-2zM1887 891h2v2h-2zM1552 1225h2v2h-2zM1948 1431h2v2h-2zM2169 951h2v2h-2zM1645 1347h2v2h-2zM2136 1095h2v2h-2zM1794 1436h2v2h-2zM2268 1279h2v2h-2zM2001 1433h2v2h-2zM1380 1165h2v2h-2zM1486 773h2v2h-2zM2036 1505h2v2h-2zM1882 1018h2v2h-2zM1599 701h2v2h-2zM1940 1434h2v2h-2zM1749 881h2v2h-2zM1729 1015h2v2h-2zM1899 1280h2v2h-2zM2008 1016h2v2h-2zM2209 645h2v2h-2zM1473 797h2v2h-2zM1739 600h2v2h-2zM1772 735h2v2h-2zM2226 900h2v2h-2zM1837 649h2v2h-2zM1744 1366h2v2h-2zM2278 1063h2v2h-2zM1413 1103h2v2h-2zM1932 1452h2v2h-2zM2166 1267h2v2h-2zM1933 908h2v2h-2zM1933 1227h2v2h-2zM2081 632h2v2h-2zM2330 1461h2v2h-2zM1604 1414h2v2h-2zM1454 1026h2v2h-2zM1783 919h2v2h-2zM1925 1076h2v2h-2zM1603 833h2v2h-2zM1914 858h2v2h-2zM2020 1377h2v2h-2zM1662 1336h2v2h-2zM2092 1091h2v2h-2zM1738 1376h2v2h-2zM1685 1091h2v2h-2zM1651 1223h2v2h-2zM1497 877h2v2h-2zM1650 1185h2v2h-2zM2307 1080h2v2h-2zM1772 1538h2v2h-2zM1729 1334h2v2h-2zM2461 1394h2v2h-2zM1856 1075h2v2h-2zM1973 1215h2v2h-2zM1937 1556h2v2h-2zM1702 649h2v2h-2zM2247 1357h2v2h-2zM1339 674h2v2h-2zM2345 1121h2v2h-2zM1988 1237h2v2h-2zM1810 681h2v2h-2zM1691 584h2v2h-2zM1757 1592h2v2h-2zM1727 902h2v2h-2zM2276 1153h2v2h-2zM2076 575h2v2h-2zM1431 1165h2v2h-2zM1929 933h2v2h-2zM1582 899h2v2h-2zM1542 683h2v2h-2zM1717 577h2v2h-2zM1882 1258h2v2h-2zM1446 999h2v2h-2zM2228 1125h2v2h-2zM2040 557h2v2h-2zM1967 540h2v2h-2zM2073 1137h2v2h-2zM1823 833h2v2h-2zM2273 1187h2v2h-2zM1887 1149h2v2h-2zM1917 634h2v2h-2zM1635 971h2v2h-2zM1803 1626h2v2h-2zM1731 939h2v2h-2zM2188 1402h2v2h-2zM1540 1131h2v2h-2zM1976 935h2v2h-2zM1983 842h2v2h-2zM1590 885h2v2h-2zM1772 601h2v2h-2zM1921 1573h2v2h-2zM2182 1314h2v2h-2zM1474 894h2v2h-2zM1783 630h2v2h-2zM1787 1601h2v2h-2zM1477 1046h2v2h-2zM2093 820h2v2h-2zM1536 1402h2v2h-2zM2020 691h2v2h-2zM1591 1389h2v2h-2zM1753 831h2v2h-2zM2118 1192h2v2h-2zM2306 1101h2v2h-2zM2110 983h2v2h-2zM1876 967h2v2h-2zM1673 814h2v2h-2zM2203 1388h2v2h-2zM2077 594h2v2h-2zM2170 1284h2v2h-2zM1957 869h2v2h-2zM2085 1280h2v2h-2zM1961 1143h2v2h-2zM1524 1386h2v2h-2zM1542 1457h2v2h-2zM1985 1067h2v2h-2zM1454 1193h2v2h-2zM1620 816h2v2h-2zM1564 1062h2v2h-2zM1831 1246h2v2h-2zM1639 608h2v2h-2zM2039 593h2v2h-2zM1887 1085h2v2h-2zM1534 1352h2v2h-2zM1459 1157h2v2h-2zM2202 474h2v2h-2zM1858 1588h2v2h-2zM1884 793h2v2h-2zM1846 937h2v2h-2zM2222 1220h2v2h-2zM1303 889h2v2h-2zM1783 1348h2v2h-2zM2318 1059h2v2h-2zM2018 637h2v2h-2zM1908 1168h2v2h-2zM1716 697h2v2h-2zM1832 1484h2v2h-2zM2351 1358h2v2h-2zM1732 822h2v2h-2zM1770 1450h2v2h-2zM1939 867h2v2h-2zM1851 1568h2v2h-2zM1899 1124h2v2h-2zM2295 1076h2v2h-2zM1795 681h2v2h-2zM1635 731h2v2h-2zM1465 1296h2v2h-2zM1820 991h2v2h-2zM1720 1131h2v2h-2zM2238 1279h2v2h-2zM1954 1414h2v2h-2zM1764 1089h2v2h-2zM2103 1017h2v2h-2zM2083 502h2v2h-2zM1977 1575h2v2h-2zM1716 1425h2v2h-2zM2126 464h2v2h-2zM1774 1470h2v2h-2zM1476 763h2v2h-2zM2102 1078h2v2h-2zM2228 640h2v2h-2zM1421 1176h2v2h-2zM2150 1484h2v2h-2zM2140 1476h2v2h-2zM2118 1096h2v2h-2zM1523 1428h2v2h-2zM1513 1229h2v2h-2zM1737 1512h2v2h-2zM2184 1319h2v2h-2zM1789 1012h2v2h-2zM2233 1378h2v2h-2zM1975 722h2v2h-2zM2112 1295h2v2h-2zM2392 1152h2v2h-2zM2204 1342h2v2h-2zM1531 679h2v2h-2zM2120 1204h2v2h-2zM2058 482h2v2h-2zM1602 1167h2v2h-2zM1489 1342h2v2h-2zM2330 1129h2v2h-2zM1984 1268h2v2h-2zM2025 1276h2v2h-2zM2146 1424h2v2h-2zM1573 914h2v2h-2zM1925 1299h2v2h-2zM1743 1262h2v2h-2zM1775 840h2v2h-2zM1815 1461h2v2h-2zM1791 1036h2v2h-2zM1655 829h2v2h-2zM1848 582h2v2h-2zM1893 917h2v2h-2zM2210 560h2v2h-2zM1525 1101h2v2h-2zM2134 1408h2v2h-2zM1485 1098h2v2h-2zM1821 1233h2v2h-2zM2072 1424h2v2h-2zM1414 829h2v2h-2zM2120 1278h2v2h-2zM2086 806h2v2h-2zM1678 931h2v2h-2zM2309 858h2v2h-2zM1929 1434h2v2h-2zM2387 1410h2v2h-2zM1796 1556h2v2h-2zM2017 1008h2v2h-2zM1787 1276h2v2h-2zM1699 949h2v2h-2zM1820 568h2v2h-2zM2138 1262h2v2h-2zM1830 926h2v2h-2zM2429 1348h2v2h-2zM1985 1292h2v2h-2zM1701 1024h2v2h-2zM1679 1021h2v2h-2zM1953 1194h2v2h-2zM2217 1372h2v2h-2zM1773 783h2v2h-2zM2233 1114h2v2h-2zM1898 711h2v2h-2zM1741 1182h2v2h-2zM1845 879h2v2h-2zM2058 873h2v2h-2zM1806 545h2v2h-2zM1484 668h2v2h-2zM1480 944h2v2h-2zM1963 636h2v2h-2zM2161 1486h2v2h-2zM1763 986h2v2h-2zM1800 1399h2v2h-2zM1771 855h2v2h-2zM1511 871h2v2h-2zM1434 1072h2v2h-2zM1482 1382h2v2h-2zM1556 880h2v2h-2zM1809 929h2v2h-2zM1986 1328h2v2h-2zM1526 1364h2v2h-2zM2144 1332h2v2h-2zM1873 1109h2v2h-2zM2123 505h2v2h-2zM1573 1297h2v2h-2zM1881 1011h2v2h-2zM1336 731h2v2h-2zM1664 758h2v2h-2zM1501 1332h2v2h-2zM1952 1466h2v2h-2zM2184 1417h2v2h-2zM2154 850h2v2h-2zM1321 897h2v2h-2zM2364 1129h2v2h-2zM1439 1039h2v2h-2zM1745 1463h2v2h-2zM2118 1161h2v2h-2zM2111 1279h2v2h-2zM1530 1080h2v2h-2zM2314 1363h2v2h-2zM2068 1357h2v2h-2zM2330 1112h2v2h-2zM1579 1300h2v2h-2zM1986 1510h2v2h-2zM1767 594h2v2h-2zM1676 995h2v2h-2zM1638 1406h2v2h-2zM2012 876h2v2h-2zM1710 717h2v2h-2zM1537 1406h2v2h-2zM2158 551h2v2h-2zM1936 1170h2v2h-2zM1562 970h2v2h-2zM1422 1167h2v2h-2zM1645 584h2v2h-2zM2170 928h2v2h-2zM1679 628h2v2h-2zM2245 1239h2v2h-2zM1558 690h2v2h-2zM2332 1474h2v2h-2zM1617 1571h2v2h-2zM1936 1149h2v2h-2zM1660 980h2v2h-2zM2182 1186h2v2h-2zM1939 1497h2v2h-2zM1982 1403h2v2h-2zM1896 855h2v2h-2zM2036 923h2v2h-2zM2220 1453h2v2h-2zM2125 1324h2v2h-2zM2027 1351h2v2h-2zM2155 672h2v2h-2zM1421 832h2v2h-2zM1911 598h2v2h-2zM1534 1264h2v2h-2zM2435 1410h2v2h-2zM1917 947h2v2h-2zM2169 1388h2v2h-2zM2128 885h2v2h-2zM2292 1215h2v2h-2zM1739 1009h2v2h-2zM1608 980h2v2h-2zM1583 1068h2v2h-2zM1731 617h2v2h-2zM1845 777h2v2h-2zM1873 914h2v2h-2zM1555 672h2v2h-2zM2246 1063h2v2h-2zM1699 919h2v2h-2zM2040 1465h2v2h-2zM1907 1366h2v2h-2zM1939 856h2v2h-2zM1571 806h2v2h-2zM1685 1354h2v2h-2zM1866 814h2v2h-2zM1761 864h2v2h-2zM2052 1148h2v2h-2zM2194 540h2v2h-2zM1607 990h2v2h-2zM2125 554h2v2h-2zM1904 788h2v2h-2zM1711 637h2v2h-2zM2139 914h2v2h-2zM1829 1538h2v2h-2zM1833 1474h2v2h-2zM1755 1548h2v2h-2zM2308 1010h2v2h-2zM2293 1128h2v2h-2zM2199 1072h2v2h-2zM1648 1244h2v2h-2zM2073 1439h2v2h-2zM1808 1016h2v2h-2zM1371 1011h2v2h-2zM1845 766h2v2h-2zM2129 1518h2v2h-2zM1545 722h2v2h-2zM1711 1376h2v2h-2zM2229 1104h2v2h-2zM1712 1103h2v2h-2zM2041 1051h2v2h-2zM1452 1405h2v2h-2zM1898 1544h2v2h-2zM1886 1293h2v2h-2zM1407 785h2v2h-2zM1590 1077h2v2h-2zM1518 1400h2v2h-2zM2171 985h2v2h-2zM1495 1393h2v2h-2zM2220 827h2v2h-2zM2301 870h2v2h-2zM1846 1059h2v2h-2zM1517 928h2v2h-2zM1666 1367h2v2h-2zM1760 1061h2v2h-2zM2375 1118h2v2h-2zM1635 655h2v2h-2zM2042 812h2v2h-2zM2007 1456h2v2h-2zM1463 1105h2v2h-2zM2130 899h2v2h-2zM1648 742h2v2h-2zM1687 1043h2v2h-2zM1873 1150h2v2h-2zM2413 1439h2v2h-2zM1797 650h2v2h-2zM1683 1350h2v2h-2zM2026 1318h2v2h-2zM2188 997h2v2h-2zM1423 721h2v2h-2zM1651 1307h2v2h-2zM2156 1177h2v2h-2zM2419 1353h2v2h-2zM2406 1448h2v2h-2zM1486 893h2v2h-2zM1439 899h2v2h-2zM1743 1144h2v2h-2zM2279 1398h2v2h-2zM1861 922h2v2h-2zM1590 1444h2v2h-2zM2218 1248h2v2h-2zM1725 782h2v2h-2zM1661 867h2v2h-2zM2087 927h2v2h-2zM2112 615h2v2h-2zM2149 897h2v2h-2zM1398 938h2v2h-2zM1766 1530h2v2h-2zM2154 589h2v2h-2zM2120 785h2v2h-2zM1510 903h2v2h-2zM1672 716h2v2h-2zM1846 820h2v2h-2zM2190 1426h2v2h-2zM1856 762h2v2h-2zM1876 848h2v2h-2zM1763 595h2v2h-2zM1671 735h2v2h-2zM2037 1311h2v2h-2zM2336 1398h2v2h-2zM2183 1027h2v2h-2zM1525 1140h2v2h-2zM2251 1384h2v2h-2zM2244 816h2v2h-2zM1513 1188h2v2h-2zM1723 1603h2v2h-2zM2076 1466h2v2h-2zM1432 1229h2v2h-2zM1726 990h2v2h-2zM1706 1320h2v2h-2zM1768 1542h2v2h-2zM2001 878h2v2h-2zM1900 877h2v2h-2zM1860 521h2v2h-2zM2267 1351h2v2h-2zM1569 1068h2v2h-2zM1805 1580h2v2h-2zM2115 508h2v2h-2zM1845 1567h2v2h-2zM1718 1403h2v2h-2zM1550 1036h2v2h-2zM2047 1468h2v2h-2zM1709 745h2v2h-2zM2165 1055h2v2h-2zM2428 1408h2v2h-2zM2256 887h2v2h-2zM1537 729h2v2h-2zM1540 821h2v2h-2zM1586 601h2v2h-2zM1769 578h2v2h-2zM1811 769h2v2h-2zM1856 1380h2v2h-2zM1580 1092h2v2h-2zM2277 767h2v2h-2zM1857 1478h2v2h-2zM1902 1162h2v2h-2zM2326 1003h2v2h-2zM2066 1258h2v2h-2zM1636 838h2v2h-2zM1811 719h2v2h-2zM1625 993h2v2h-2zM1881 1073h2v2h-2zM1471 864h2v2h-2zM1516 662h2v2h-2zM1845 1205h2v2h-2zM2189 1167h2v2h-2zM1834 816h2v2h-2zM1652 824h2v2h-2zM2210 549h2v2h-2zM2137 495h2v2h-2zM2257 754h2v2h-2zM1440 645h2v2h-2zM2084 1432h2v2h-2zM1746 1523h2v2h-2zM1635 662h2v2h-2zM1619 1262h2v2h-2zM1950 1387h2v2h-2zM1627 1038h2v2h-2zM1737 1239h2v2h-2zM2172 1035h2v2h-2zM1524 1070h2v2h-2zM1720 839h2v2h-2zM1811 645h2v2h-2zM1968 702h2v2h-2zM2321 1158h2v2h-2zM2077 886h2v2h-2zM1702 1337h2v2h-2zM1872 1485h2v2h-2zM1932 593h2v2h-2zM1749 1077h2v2h-2zM2268 983h2v2h-2zM2168 1369h2v2h-2zM1885 575h2v2h-2zM1909 960h2v2h-2zM1552 1295h2v2h-2zM1745 1107h2v2h-2zM1844 1565h2v2h-2zM2446 1343h2v2h-2zM2127 1435h2v2h-2zM2342 1252h2v2h-2zM1776 1298h2v2h-2zM1533 825h2v2h-2zM1805 1104h2v2h-2zM1563 980h2v2h-2zM1933 762h2v2h-2zM2263 1284h2v2h-2zM1864 1162h2v2h-2zM1680 1381h2v2h-2zM1588 691h2v2h-2zM1496 1264h2v2h-2zM1728 1442h2v2h-2zM1732 1365h2v2h-2zM1847 1168h2v2h-2zM1594 930h2v2h-2zM1830 960h2v2h-2zM2126 1473h2v2h-2zM1680 875h2v2h-2zM2103 917h2v2h-2zM1713 1374h2v2h-2zM2036 1120h2v2h-2zM1828 916h2v2h-2zM1929 873h2v2h-2zM1433 848h2v2h-2zM1908 1382h2v2h-2zM1751 810h2v2h-2zM1917 933h2v2h-2zM1495 854h2v2h-2zM1561 719h2v2h-2zM1952 1572h2v2h-2zM1899 1570h2v2h-2zM1786 975h2v2h-2zM1515 1134h2v2h-2zM1472 1151h2v2h-2zM1908 882h2v2h-2zM2098 893h2v2h-2zM1369 891h2v2h-2zM1971 847h2v2h-2zM1804 662h2v2h-2zM1562 787h2v2h-2zM1710 706h2v2h-2zM2172 716h2v2h-2zM1604 1363h2v2h-2zM1653 1350h2v2h-2zM1767 888h2v2h-2zM1601 892h2v2h-2zM2205 1161h2v2h-2zM2413 1378h2v2h-2zM1788 1447h2v2h-2zM2316 1459h2v2h-2zM1461 1179h2v2h-2zM1517 886h2v2h-2zM1743 573h2v2h-2zM1793 1266h2v2h-2zM1426 704h2v2h-2zM1391 966h2v2h-2zM1943 808h2v2h-2zM1718 1193h2v2h-2zM1593 1201h2v2h-2zM1734 844h2v2h-2zM1827 1129h2v2h-2zM1502 1438h2v2h-2zM1881 803h2v2h-2zM1797 876h2v2h-2zM1426 1078h2v2h-2zM1836 624h2v2h-2zM2178 1291h2v2h-2zM1493 1241h2v2h-2zM2085 524h2v2h-2zM2181 682h2v2h-2zM2318 1175h2v2h-2zM1802 1338h2v2h-2zM1859 790h2v2h-2zM1993 887h2v2h-2zM2011 1514h2v2h-2zM1424 870h2v2h-2zM1844 1505h2v2h-2zM2207 564h2v2h-2zM1872 1079h2v2h-2zM1573 1406h2v2h-2zM2230 1122h2v2h-2zM1571 1024h2v2h-2zM1424 831h2v2h-2zM1694 756h2v2h-2zM1835 908h2v2h-2zM1438 1028h2v2h-2zM1458 1182h2v2h-2zM1834 668h2v2h-2zM1353 820h2v2h-2zM1791 733h2v2h-2zM1607 1570h2v2h-2zM2111 1328h2v2h-2zM1886 876h2v2h-2zM1506 1146h2v2h-2zM1559 665h2v2h-2zM1445 928h2v2h-2zM2037 1410h2v2h-2zM1482 1168h2v2h-2zM2169 1422h2v2h-2zM2108 1419h2v2h-2zM1851 566h2v2h-2zM2163 1358h2v2h-2zM1993 624h2v2h-2zM1647 1395h2v2h-2zM2201 871h2v2h-2zM1375 1114h2v2h-2zM2089 1517h2v2h-2zM2065 1520h2v2h-2zM1711 1287h2v2h-2zM1999 1083h2v2h-2zM1360 994h2v2h-2zM1518 989h2v2h-2zM1521 1252h2v2h-2zM1756 1595h2v2h-2zM2103 1448h2v2h-2zM1505 1433h2v2h-2zM1587 676h2v2h-2zM1359 924h2v2h-2zM1613 1407h2v2h-2zM1795 743h2v2h-2zM1758 1610h2v2h-2zM1653 1153h2v2h-2zM2213 1270h2v2h-2zM1988 1178h2v2h-2zM1666 1440h2v2h-2zM1438 716h2v2h-2zM1521 1015h2v2h-2zM1822 1555h2v2h-2zM1626 1048h2v2h-2zM2065 614h2v2h-2zM2152 1318h2v2h-2zM1709 568h2v2h-2zM1563 1087h2v2h-2zM1637 1308h2v2h-2zM2094 1303h2v2h-2zM1956 1072h2v2h-2zM1483 721h2v2h-2zM1692 887h2v2h-2zM1440 711h2v2h-2zM1430 651h2v2h-2zM1691 945h2v2h-2zM1835 886h2v2h-2zM1334 914h2v2h-2zM1629 1120h2v2h-2zM1519 745h2v2h-2zM2173 1053h2v2h-2zM1659 1105h2v2h-2zM2216 1094h2v2h-2zM1982 1457h2v2h-2zM1409 841h2v2h-2zM1706 1537h2v2h-2zM2145 902h2v2h-2zM1778 877h2v2h-2zM1323 950h2v2h-2zM2200 718h2v2h-2zM1445 999h2v2h-2zM2318 1016h2v2h-2zM2028 695h2v2h-2zM1518 1202h2v2h-2zM1986 1264h2v2h-2zM1507 1183h2v2h-2zM1766 949h2v2h-2zM1560 1400h2v2h-2zM1685 1568h2v2h-2zM1746 837h2v2h-2zM1525 1270h2v2h-2zM1544 942h2v2h-2zM2105 880h2v2h-2zM2272 1097h2v2h-2zM2221 1474h2v2h-2zM1773 1509h2v2h-2zM2197 644h2v2h-2zM1484 958h2v2h-2zM1732 1059h2v2h-2zM1707 1118h2v2h-2zM1955 1481h2v2h-2zM2134 803h2v2h-2zM1515 1223h2v2h-2zM2173 1415h2v2h-2zM1795 1420h2v2h-2zM1438 1158h2v2h-2zM1664 576h2v2h-2zM1617 644h2v2h-2zM2182 1150h2v2h-2zM1758 1637h2v2h-2zM1484 826h2v2h-2zM2179 650h2v2h-2zM1430 870h2v2h-2zM1701 825h2v2h-2zM1539 902h2v2h-2zM1409 705h2v2h-2zM1432 1378h2v2h-2zM1948 1465h2v2h-2zM1642 1021h2v2h-2zM1555 666h2v2h-2zM1429 870h2v2h-2zM1509 1293h2v2h-2zM1921 1259h2v2h-2zM2167 1283h2v2h-2zM1668 892h2v2h-2zM2287 1319h2v2h-2zM1705 1532h2v2h-2zM2076 1480h2v2h-2zM2324 1159h2v2h-2zM1740 1613h2v2h-2zM1646 834h2v2h-2zM2303 1062h2v2h-2zM2361 1453h2v2h-2zM1597 1105h2v2h-2zM2206 1196h2v2h-2zM2073 834h2v2h-2zM1970 1159h2v2h-2zM1592 975h2v2h-2zM1824 780h2v2h-2zM1455 919h2v2h-2zM1525 1038h2v2h-2zM2280 1044h2v2h-2zM1634 741h2v2h-2zM1927 1048h2v2h-2zM1756 1528h2v2h-2zM1901 859h2v2h-2zM2331 1078h2v2h-2zM1705 1309h2v2h-2zM1795 971h2v2h-2zM2257 1451h2v2h-2zM1937 726h2v2h-2zM1833 1560h2v2h-2zM1796 1550h2v2h-2zM1298 692h2v2h-2zM1906 1436h2v2h-2zM1687 940h2v2h-2zM2152 543h2v2h-2zM2075 626h2v2h-2zM1454 728h2v2h-2zM2200 1502h2v2h-2zM2134 1308h2v2h-2zM1353 869h2v2h-2zM1522 1093h2v2h-2zM1460 1163h2v2h-2zM1461 1237h2v2h-2zM1830 1587h2v2h-2zM2047 1127h2v2h-2zM2168 1491h2v2h-2zM2134 816h2v2h-2zM2105 1379h2v2h-2zM1566 1151h2v2h-2zM2004 1560h2v2h-2zM1700 786h2v2h-2zM2070 1494h2v2h-2zM2284 1059h2v2h-2zM1601 1456h2v2h-2zM1394 785h2v2h-2zM1811 1165h2v2h-2zM1675 862h2v2h-2zM1686 1359h2v2h-2zM1911 946h2v2h-2zM1789 861h2v2h-2zM1640 1080h2v2h-2zM2183 575h2v2h-2zM1773 876h2v2h-2zM1643 961h2v2h-2zM1869 757h2v2h-2zM2101 1427h2v2h-2zM2225 1138h2v2h-2zM1536 1154h2v2h-2zM1965 1423h2v2h-2zM1747 822h2v2h-2zM1805 1576h2v2h-2zM1793 1513h2v2h-2zM1808 1621h2v2h-2zM1881 1564h2v2h-2zM2134 1149h2v2h-2zM1512 1313h2v2h-2zM1900 796h2v2h-2zM1554 645h2v2h-2zM1820 957h2v2h-2zM1428 869h2v2h-2zM1981 828h2v2h-2zM1457 1032h2v2h-2zM2064 723h2v2h-2zM2005 704h2v2h-2zM2427 1356h2v2h-2zM1637 1086h2v2h-2zM2241 1377h2v2h-2zM1602 1324h2v2h-2zM2026 792h2v2h-2zM1745 634h2v2h-2zM2215 1048h2v2h-2zM2146 625h2v2h-2zM1770 957h2v2h-2zM1756 1142h2v2h-2zM1794 916h2v2h-2zM1827 905h2v2h-2zM1864 1191h2v2h-2zM2118 1135h2v2h-2zM1831 778h2v2h-2zM2449 1380h2v2h-2zM1756 839h2v2h-2zM1726 910h2v2h-2zM1438 864h2v2h-2zM1912 790h2v2h-2zM2071 1452h2v2h-2zM2008 1230h2v2h-2zM1497 1233h2v2h-2zM1828 1614h2v2h-2zM1419 985h2v2h-2zM1857 1097h2v2h-2zM1329 929h2v2h-2zM1790 846h2v2h-2zM1462 1225h2v2h-2zM1565 1183h2v2h-2zM1715 1292h2v2h-2zM1771 691h2v2h-2zM1836 1550h2v2h-2zM1779 1427h2v2h-2zM1866 943h2v2h-2zM2302 1111h2v2h-2zM2024 1151h2v2h-2zM1947 1474h2v2h-2zM1976 988h2v2h-2zM1307 917h2v2h-2zM1679 1499h2v2h-2zM2119 705h2v2h-2zM1801 781h2v2h-2zM1960 874h2v2h-2zM2053 1514h2v2h-2zM1421 937h2v2h-2zM2141 564h2v2h-2zM1713 620h2v2h-2zM1867 982h2v2h-2zM2263 1077h2v2h-2zM1967 1147h2v2h-2zM1757 1265h2v2h-2zM1764 961h2v2h-2zM2085 1414h2v2h-2zM1983 921h2v2h-2zM2309 1109h2v2h-2zM1798 1405h2v2h-2zM1366 731h2v2h-2zM1515 867h2v2h-2zM1823 850h2v2h-2zM1521 892h2v2h-2zM2379 1173h2v2h-2zM2302 874h2v2h-2zM1785 1422h2v2h-2zM2292 1024h2v2h-2zM1552 864h2v2h-2zM1610 937h2v2h-2zM1584 1356h2v2h-2zM1558 709h2v2h-2zM1466 777h2v2h-2zM1974 567h2v2h-2zM2159 791h2v2h-2zM1518 961h2v2h-2zM1702 1432h2v2h-2zM1815 1335h2v2h-2zM2332 1056h2v2h-2zM1475 852h2v2h-2zM1446 722h2v2h-2zM1548 767h2v2h-2zM1460 1047h2v2h-2zM1465 1217h2v2h-2zM2365 1362h2v2h-2zM1909 1212h2v2h-2zM1839 1123h2v2h-2zM2185 1364h2v2h-2zM1368 904h2v2h-2zM2064 787h2v2h-2zM1789 900h2v2h-2zM2219 579h2v2h-2zM1852 873h2v2h-2zM2040 1417h2v2h-2zM2377 1449h2v2h-2zM1901 1037h2v2h-2zM2311 1429h2v2h-2zM1728 625h2v2h-2zM2076 1542h2v2h-2zM1563 1109h2v2h-2zM1518 1050h2v2h-2zM2190 1485h2v2h-2zM1763 1109h2v2h-2zM2139 1194h2v2h-2zM2185 1452h2v2h-2zM1585 1380h2v2h-2zM2214 937h2v2h-2zM1529 673h2v2h-2zM1642 1596h2v2h-2zM2011 1360h2v2h-2zM1944 602h2v2h-2zM1393 892h2v2h-2zM2167 1190h2v2h-2zM2173 595h2v2h-2zM1730 841h2v2h-2zM2246 1221h2v2h-2zM1878 858h2v2h-2zM1784 708h2v2h-2zM2235 1261h2v2h-2zM1673 1392h2v2h-2zM2093 1472h2v2h-2zM1587 1116h2v2h-2zM1823 1384h2v2h-2zM2086 1102h2v2h-2zM1393 1118h2v2h-2zM1708 783h2v2h-2zM1511 1206h2v2h-2zM2012 987h2v2h-2zM2375 1323h2v2h-2zM1478 1368h2v2h-2zM1722 972h2v2h-2zM1555 1317h2v2h-2zM1465 925h2v2h-2zM1512 756h2v2h-2zM2190 1069h2v2h-2zM1765 1488h2v2h-2zM1854 1121h2v2h-2zM1397 871h2v2h-2zM2009 572h2v2h-2zM2046 1419h2v2h-2zM1761 655h2v2h-2zM1538 1083h2v2h-2zM2000 656h2v2h-2zM2341 1068h2v2h-2zM1887 782h2v2h-2zM1894 632h2v2h-2zM2161 1489h2v2h-2zM1990 638h2v2h-2zM2104 464h2v2h-2zM1395 1097h2v2h-2zM1652 1470h2v2h-2zM1413 863h2v2h-2zM1618 1081h2v2h-2zM2347 980h2v2h-2zM2070 1206h2v2h-2zM1838 1421h2v2h-2zM1912 920h2v2h-2zM2313 886h2v2h-2zM2138 1085h2v2h-2zM2110 1329h2v2h-2zM1570 1052h2v2h-2zM2254 1052h2v2h-2zM1970 652h2v2h-2zM1837 1131h2v2h-2zM1975 1486h2v2h-2zM1341 885h2v2h-2zM1608 924h2v2h-2zM1812 1390h2v2h-2zM2266 1077h2v2h-2zM1883 1425h2v2h-2zM1431 887h2v2h-2zM1805 1179h2v2h-2zM1908 1569h2v2h-2zM1798 992h2v2h-2zM1620 974h2v2h-2zM1844 1523h2v2h-2zM2099 592h2v2h-2zM1691 902h2v2h-2zM2172 1343h2v2h-2zM1811 1000h2v2h-2zM1480 874h2v2h-2zM2215 542h2v2h-2zM1725 599h2v2h-2zM1725 1314h2v2h-2zM1943 1158h2v2h-2zM1914 922h2v2h-2zM2123 1398h2v2h-2zM2139 1486h2v2h-2zM1540 1041h2v2h-2zM2218 633h2v2h-2zM1701 1057h2v2h-2zM1680 1277h2v2h-2zM1950 1420h2v2h-2zM1826 601h2v2h-2zM1305 924h2v2h-2zM2170 1431h2v2h-2zM2142 1133h2v2h-2zM1834 1286h2v2h-2zM1582 783h2v2h-2zM2212 731h2v2h-2zM1979 844h2v2h-2zM2022 1094h2v2h-2zM1512 1090h2v2h-2zM1849 954h2v2h-2zM2164 1238h2v2h-2zM2242 664h2v2h-2zM1613 846h2v2h-2zM1920 793h2v2h-2zM2094 599h2v2h-2zM1700 626h2v2h-2zM1400 778h2v2h-2zM1552 663h2v2h-2zM1968 1182h2v2h-2zM1627 963h2v2h-2zM1807 663h2v2h-2zM1876 1225h2v2h-2zM1607 920h2v2h-2zM1755 675h2v2h-2zM1358 939h2v2h-2zM2041 878h2v2h-2zM2201 1371h2v2h-2zM1960 816h2v2h-2zM1824 1415h2v2h-2zM1760 1534h2v2h-2zM2358 1090h2v2h-2zM1849 1606h2v2h-2zM1508 1023h2v2h-2zM1989 656h2v2h-2zM1614 595h2v2h-2zM1703 1517h2v2h-2zM1942 834h2v2h-2zM1571 828h2v2h-2zM1470 987h2v2h-2zM1567 1179h2v2h-2zM1587 1550h2v2h-2zM1712 882h2v2h-2zM1643 1063h2v2h-2zM1590 1011h2v2h-2zM1968 975h2v2h-2zM2253 1423h2v2h-2zM1327 937h2v2h-2zM1769 1422h2v2h-2zM1844 736h2v2h-2zM1896 1154h2v2h-2zM1853 1151h2v2h-2zM1443 883h2v2h-2zM1802 556h2v2h-2zM1785 1409h2v2h-2zM1417 816h2v2h-2zM1403 862h2v2h-2zM1476 723h2v2h-2zM2063 1465h2v2h-2zM1462 1029h2v2h-2zM1746 864h2v2h-2zM2350 1181h2v2h-2zM2056 1301h2v2h-2zM1713 659h2v2h-2zM1849 1299h2v2h-2zM1509 1349h2v2h-2zM1562 1111h2v2h-2zM2286 1159h2v2h-2zM1828 1184h2v2h-2zM2058 706h2v2h-2zM1843 790h2v2h-2zM1805 550h2v2h-2zM1794 703h2v2h-2zM1866 707h2v2h-2zM1715 1584h2v2h-2zM1335 945h2v2h-2zM1840 1562h2v2h-2zM1494 1140h2v2h-2zM2173 902h2v2h-2zM1537 860h2v2h-2zM1731 1289h2v2h-2zM2298 1255h2v2h-2zM2274 1108h2v2h-2zM1772 1291h2v2h-2zM1695 660h2v2h-2zM1994 946h2v2h-2zM1755 751h2v2h-2zM2216 1392h2v2h-2zM1448 808h2v2h-2zM1521 1383h2v2h-2zM1780 930h2v2h-2zM1633 1025h2v2h-2zM1581 1113h2v2h-2zM2220 605h2v2h-2zM1737 1516h2v2h-2zM1895 1152h2v2h-2zM2113 1266h2v2h-2zM1983 906h2v2h-2zM1660 1348h2v2h-2zM1553 966h2v2h-2zM1823 834h2v2h-2zM1757 1585h2v2h-2zM1691 1352h2v2h-2zM1799 1338h2v2h-2zM2270 730h2v2h-2zM1626 1039h2v2h-2zM1635 791h2v2h-2zM1618 1108h2v2h-2zM1770 1100h2v2h-2zM2294 860h2v2h-2zM1672 701h2v2h-2zM1961 821h2v2h-2zM1844 732h2v2h-2zM1865 758h2v2h-2zM1835 1529h2v2h-2zM2198 600h2v2h-2zM1328 915h2v2h-2zM2181 685h2v2h-2zM2105 1210h2v2h-2zM1537 1315h2v2h-2zM1644 923h2v2h-2zM2229 1248h2v2h-2zM1670 1623h2v2h-2zM1809 820h2v2h-2zM1328 1003h2v2h-2zM1582 737h2v2h-2zM1844 757h2v2h-2zM1860 1006h2v2h-2zM1915 658h2v2h-2zM1475 991h2v2h-2zM1327 718h2v2h-2zM2406 1327h2v2h-2zM1657 736h2v2h-2zM1742 654h2v2h-2zM1858 1202h2v2h-2zM2030 924h2v2h-2zM2076 502h2v2h-2zM1477 1191h2v2h-2zM1602 1014h2v2h-2zM1757 669h2v2h-2zM1345 1092h2v2h-2zM2250 1490h2v2h-2zM1863 1584h2v2h-2zM1815 1611h2v2h-2zM1572 604h2v2h-2zM2174 1483h2v2h-2zM1736 971h2v2h-2zM2028 1502h2v2h-2zM1531 1033h2v2h-2zM1574 849h2v2h-2zM2164 521h2v2h-2zM1871 1556h2v2h-2zM2160 1339h2v2h-2zM2019 1408h2v2h-2zM1636 1435h2v2h-2zM1701 1071h2v2h-2zM1750 1120h2v2h-2zM2155 767h2v2h-2zM1539 885h2v2h-2zM2366 1424h2v2h-2zM1815 1575h2v2h-2zM2158 1444h2v2h-2zM1825 700h2v2h-2zM2385 1315h2v2h-2zM1739 1224h2v2h-2zM1688 1518h2v2h-2zM1391 938h2v2h-2zM1758 1381h2v2h-2zM1785 1321h2v2h-2zM1766 751h2v2h-2zM1658 674h2v2h-2zM1663 933h2v2h-2zM2339 1310h2v2h-2zM1666 762h2v2h-2zM1837 1365h2v2h-2zM1675 661h2v2h-2zM1606 846h2v2h-2zM1422 683h2v2h-2zM1498 1209h2v2h-2zM2240 941h2v2h-2zM2017 731h2v2h-2zM1776 1017h2v2h-2zM2448 1419h2v2h-2zM1950 719h2v2h-2zM1805 791h2v2h-2zM1806 748h2v2h-2zM2023 957h2v2h-2zM2033 1128h2v2h-2zM1808 585h2v2h-2zM2262 1461h2v2h-2zM2185 543h2v2h-2zM1926 1367h2v2h-2zM2133 524h2v2h-2zM1827 1111h2v2h-2zM1616 937h2v2h-2zM1944 1005h2v2h-2zM2079 1399h2v2h-2zM1909 1266h2v2h-2zM1945 1043h2v2h-2zM1760 743h2v2h-2zM1471 1119h2v2h-2zM1767 838h2v2h-2zM1522 905h2v2h-2zM1523 855h2v2h-2zM1760 1039h2v2h-2zM1930 1433h2v2h-2zM1630 890h2v2h-2zM2282 910h2v2h-2zM2341 1182h2v2h-2zM1791 1566h2v2h-2zM1931 646h2v2h-2zM1741 831h2v2h-2zM1510 1119h2v2h-2zM2112 903h2v2h-2zM1564 950h2v2h-2zM1971 514h2v2h-2zM2215 792h2v2h-2zM1953 695h2v2h-2zM1806 1446h2v2h-2zM2136 1335h2v2h-2zM1522 797h2v2h-2zM2085 1082h2v2h-2zM2175 1166h2v2h-2zM1552 938h2v2h-2zM1448 1105h2v2h-2zM1653 955h2v2h-2zM2009 510h2v2h-2zM1906 1587h2v2h-2zM2141 993h2v2h-2zM2309 1400h2v2h-2zM2023 1296h2v2h-2zM1827 1314h2v2h-2zM1745 771h2v2h-2zM1941 1211h2v2h-2zM1600 1033h2v2h-2zM1701 1401h2v2h-2zM1602 1389h2v2h-2zM1595 980h2v2h-2zM1550 1395h2v2h-2zM1446 1143h2v2h-2zM1720 744h2v2h-2zM1436 1111h2v2h-2zM1788 1335h2v2h-2zM1414 1106h2v2h-2zM1652 782h2v2h-2zM1395 836h2v2h-2zM2247 1364h2v2h-2zM1521 1443h2v2h-2zM1879 1346h2v2h-2zM1790 791h2v2h-2zM1414 933h2v2h-2zM1934 657h2v2h-2zM2349 1080h2v2h-2zM2307 974h2v2h-2zM2003 1389h2v2h-2zM2354 1231h2v2h-2zM1850 720h2v2h-2zM1611 860h2v2h-2zM1546 985h2v2h-2zM1981 1281h2v2h-2zM1552 1055h2v2h-2zM2013 1259h2v2h-2zM2395 1401h2v2h-2zM1499 1329h2v2h-2zM1676 714h2v2h-2zM1439 1230h2v2h-2zM1690 1417h2v2h-2zM2037 1414h2v2h-2zM2285 1416h2v2h-2zM1808 1546h2v2h-2zM1700 1509h2v2h-2zM1499 1170h2v2h-2zM2016 1417h2v2h-2zM2157 1366h2v2h-2zM1689 1439h2v2h-2zM1706 1408h2v2h-2zM2164 972h2v2h-2zM1415 1250h2v2h-2zM1451 1390h2v2h-2zM1525 656h2v2h-2zM1756 1201h2v2h-2zM2103 645h2v2h-2zM1691 1579h2v2h-2zM2045 840h2v2h-2zM1495 1310h2v2h-2zM1516 968h2v2h-2zM1523 1264h2v2h-2zM1544 1004h2v2h-2zM1699 680h2v2h-2zM2236 690h2v2h-2zM1787 564h2v2h-2zM1389 979h2v2h-2zM2204 1216h2v2h-2zM2021 1374h2v2h-2zM1471 1117h2v2h-2zM1571 1193h2v2h-2zM1475 868h2v2h-2zM2250 880h2v2h-2zM1490 960h2v2h-2zM1883 706h2v2h-2zM1672 645h2v2h-2zM1954 1151h2v2h-2zM1467 1256h2v2h-2zM2229 1100h2v2h-2zM1603 1002h2v2h-2zM1834 730h2v2h-2zM1370 1099h2v2h-2zM1872 906h2v2h-2zM2167 1252h2v2h-2zM1422 835h2v2h-2zM1787 605h2v2h-2zM1528 1199h2v2h-2zM2038 537h2v2h-2zM2188 1336h2v2h-2zM1478 1338h2v2h-2zM1590 1270h2v2h-2zM1733 1275h2v2h-2zM2244 657h2v2h-2zM2054 1221h2v2h-2zM1389 847h2v2h-2zM1536 753h2v2h-2zM1398 1119h2v2h-2zM2159 1074h2v2h-2zM1775 1434h2v2h-2zM1803 890h2v2h-2zM1745 1010h2v2h-2zM2008 663h2v2h-2zM1413 865h2v2h-2zM2266 1071h2v2h-2zM1990 1039h2v2h-2zM1725 1044h2v2h-2zM2233 1050h2v2h-2zM1438 1051h2v2h-2zM2165 1165h2v2h-2zM2039 1423h2v2h-2zM1698 966h2v2h-2zM2376 1464h2v2h-2zM1923 937h2v2h-2zM2218 617h2v2h-2zM1784 983h2v2h-2zM2215 1245h2v2h-2zM2130 1417h2v2h-2zM1669 1387h2v2h-2zM2070 839h2v2h-2zM2077 1206h2v2h-2zM1913 1439h2v2h-2zM1569 1005h2v2h-2zM2074 1131h2v2h-2zM1807 1541h2v2h-2zM2241 772h2v2h-2zM1831 1242h2v2h-2zM2210 728h2v2h-2zM1836 1049h2v2h-2zM1659 1013h2v2h-2zM1737 933h2v2h-2zM1531 840h2v2h-2zM1915 1176h2v2h-2zM1788 912h2v2h-2zM1697 1122h2v2h-2zM2077 1540h2v2h-2zM1983 1120h2v2h-2zM1740 812h2v2h-2zM2036 824h2v2h-2zM1480 990h2v2h-2zM1747 1214h2v2h-2zM1683 837h2v2h-2zM2062 1296h2v2h-2zM1678 1286h2v2h-2zM1890 1198h2v2h-2zM1340 858h2v2h-2zM2178 1184h2v2h-2zM2239 1356h2v2h-2zM1802 1431h2v2h-2zM2164 586h2v2h-2zM1761 1444h2v2h-2zM1896 1096h2v2h-2zM2278 898h2v2h-2zM1902 922h2v2h-2zM2035 804h2v2h-2zM1951 777h2v2h-2zM1371 764h2v2h-2zM2177 1461h2v2h-2zM1859 1392h2v2h-2zM1879 1453h2v2h-2zM1651 811h2v2h-2zM1413 815h2v2h-2zM1990 1048h2v2h-2zM1895 1504h2v2h-2zM1980 1493h2v2h-2zM1427 942h2v2h-2zM1742 675h2v2h-2zM2301 1181h2v2h-2zM2451 1386h2v2h-2zM1365 1146h2v2h-2zM1488 1367h2v2h-2zM1589 768h2v2h-2zM1612 1199h2v2h-2zM2110 465h2v2h-2zM1959 980h2v2h-2zM1684 877h2v2h-2zM1406 912h2v2h-2zM1677 1618h2v2h-2zM1742 1245h2v2h-2zM1869 1229h2v2h-2zM1550 1322h2v2h-2zM1541 1043h2v2h-2zM1934 1184h2v2h-2zM1762 648h2v2h-2zM2236 1160h2v2h-2zM1481 1368h2v2h-2zM1429 1170h2v2h-2zM1827 1130h2v2h-2zM1948 1186h2v2h-2zM1916 837h2v2h-2zM2293 1098h2v2h-2zM1592 938h2v2h-2zM1407 1107h2v2h-2zM1966 853h2v2h-2zM1513 892h2v2h-2zM1814 1574h2v2h-2zM1592 1339h2v2h-2zM2399 1174h2v2h-2zM1906 1500h2v2h-2zM2152 1069h2v2h-2zM2023 1104h2v2h-2zM1731 1253h2v2h-2zM2329 1354h2v2h-2zM2134 1249h2v2h-2zM2088 505h2v2h-2zM1896 964h2v2h-2zM1860 868h2v2h-2zM1424 713h2v2h-2zM1982 631h2v2h-2zM1777 759h2v2h-2zM1750 795h2v2h-2zM2119 1484h2v2h-2zM1356 1000h2v2h-2zM1501 1234h2v2h-2zM1849 950h2v2h-2zM1750 855h2v2h-2zM1709 701h2v2h-2zM2225 1305h2v2h-2zM1861 1528h2v2h-2zM1996 850h2v2h-2zM1708 1312h2v2h-2zM1488 786h2v2h-2zM1464 820h2v2h-2zM1402 1093h2v2h-2zM2214 1023h2v2h-2zM2354 1345h2v2h-2zM2040 970h2v2h-2zM1560 1075h2v2h-2zM1865 1142h2v2h-2zM1920 954h2v2h-2zM2011 1304h2v2h-2zM1479 972h2v2h-2zM2230 1414h2v2h-2zM1479 771h2v2h-2zM1485 1006h2v2h-2zM1886 677h2v2h-2zM2251 1463h2v2h-2zM1524 1035h2v2h-2zM2250 1316h2v2h-2zM1430 1201h2v2h-2zM1829 1610h2v2h-2zM1455 1182h2v2h-2zM2048 494h2v2h-2zM1593 1070h2v2h-2zM1936 757h2v2h-2zM2127 1050h2v2h-2zM1541 940h2v2h-2zM2084 546h2v2h-2zM1482 1095h2v2h-2zM2333 1178h2v2h-2zM1669 1410h2v2h-2zM2425 1401h2v2h-2zM2174 1075h2v2h-2zM1990 1471h2v2h-2zM1915 1044h2v2h-2zM2302 1472h2v2h-2zM1672 800h2v2h-2zM1912 1425h2v2h-2zM1835 1188h2v2h-2zM1766 970h2v2h-2zM1743 1628h2v2h-2zM1860 1034h2v2h-2zM2347 1050h2v2h-2zM1510 969h2v2h-2zM1641 890h2v2h-2zM2165 1324h2v2h-2zM1800 1006h2v2h-2zM2059 1387h2v2h-2zM1878 940h2v2h-2zM1734 882h2v2h-2zM2310 1096h2v2h-2zM2210 686h2v2h-2zM2167 1308h2v2h-2zM1809 1278h2v2h-2zM1761 1577h2v2h-2zM1694 1001h2v2h-2zM2217 1443h2v2h-2zM2272 1369h2v2h-2zM1369 1133h2v2h-2zM2346 1400h2v2h-2zM1673 1031h2v2h-2zM1937 818h2v2h-2zM1431 870h2v2h-2zM2149 607h2v2h-2zM1756 685h2v2h-2zM2209 635h2v2h-2zM1769 773h2v2h-2zM1391 883h2v2h-2zM1539 943h2v2h-2zM1460 1041h2v2h-2zM1952 1499h2v2h-2zM1811 775h2v2h-2zM2198 1213h2v2h-2zM2143 1215h2v2h-2zM1759 866h2v2h-2zM2045 1121h2v2h-2zM1609 903h2v2h-2zM1561 815h2v2h-2zM1957 1455h2v2h-2zM2344 1106h2v2h-2zM1600 1283h2v2h-2zM1472 931h2v2h-2zM2021 507h2v2h-2zM1545 1240h2v2h-2zM1985 1043h2v2h-2zM1806 949h2v2h-2zM1808 1462h2v2h-2zM1398 926h2v2h-2zM1828 911h2v2h-2zM2294 850h2v2h-2zM2331 1471h2v2h-2zM1859 1226h2v2h-2zM1870 1015h2v2h-2zM1895 941h2v2h-2zM1856 1373h2v2h-2zM1752 804h2v2h-2zM1739 657h2v2h-2zM1357 975h2v2h-2zM1775 1253h2v2h-2zM1527 906h2v2h-2zM1689 1222h2v2h-2zM1664 1634h2v2h-2zM1523 1229h2v2h-2zM2007 824h2v2h-2zM2428 1389h2v2h-2zM2213 692h2v2h-2zM1754 609h2v2h-2zM2076 672h2v2h-2zM1674 957h2v2h-2zM1563 682h2v2h-2zM1880 1182h2v2h-2zM1846 1455h2v2h-2zM1796 1158h2v2h-2zM2024 605h2v2h-2zM1687 815h2v2h-2zM1327 933h2v2h-2zM2144 1334h2v2h-2zM2144 1128h2v2h-2zM1706 1037h2v2h-2zM2240 714h2v2h-2zM1680 918h2v2h-2zM2023 943h2v2h-2zM2175 562h2v2h-2zM1932 630h2v2h-2zM1638 1168h2v2h-2zM2197 1469h2v2h-2zM1802 1387h2v2h-2zM2040 1444h2v2h-2zM1809 912h2v2h-2zM2034 684h2v2h-2zM1688 1102h2v2h-2zM1715 603h2v2h-2zM1586 849h2v2h-2zM2130 986h2v2h-2zM1935 1475h2v2h-2zM1862 830h2v2h-2zM2057 822h2v2h-2zM1945 1569h2v2h-2zM1586 836h2v2h-2zM2128 1071h2v2h-2zM1643 1043h2v2h-2zM1820 1044h2v2h-2zM2106 781h2v2h-2zM1960 1510h2v2h-2zM1550 1538h2v2h-2zM1740 734h2v2h-2zM1646 1017h2v2h-2zM1804 1511h2v2h-2zM1723 723h2v2h-2zM1711 1321h2v2h-2zM1718 1355h2v2h-2zM2259 1159h2v2h-2zM2109 541h2v2h-2zM2231 1084h2v2h-2zM1734 1504h2v2h-2zM1969 1527h2v2h-2zM2181 1512h2v2h-2zM1599 1014h2v2h-2zM1966 1431h2v2h-2zM1686 996h2v2h-2zM2222 1278h2v2h-2zM1762 1339h2v2h-2zM1898 899h2v2h-2zM1752 698h2v2h-2zM1830 878h2v2h-2zM1611 1024h2v2h-2zM1807 1587h2v2h-2zM2380 1407h2v2h-2zM2341 1080h2v2h-2zM2412 1425h2v2h-2zM2302 1343h2v2h-2zM1710 798h2v2h-2zM1727 1478h2v2h-2zM2111 1344h2v2h-2zM2240 1343h2v2h-2zM2013 1491h2v2h-2zM2107 1358h2v2h-2zM1855 872h2v2h-2zM1705 1130h2v2h-2zM1765 929h2v2h-2zM1739 1371h2v2h-2zM1697 947h2v2h-2zM1426 985h2v2h-2zM2102 1349h2v2h-2zM1768 703h2v2h-2zM2203 848h2v2h-2zM1745 1484h2v2h-2zM1887 856h2v2h-2zM1394 1049h2v2h-2zM2030 1347h2v2h-2zM2188 594h2v2h-2zM1674 805h2v2h-2zM1731 1089h2v2h-2zM2219 1282h2v2h-2zM2141 1091h2v2h-2zM2280 1365h2v2h-2zM1805 595h2v2h-2zM1462 704h2v2h-2zM2469 1408h2v2h-2zM1829 1159h2v2h-2zM1747 1100h2v2h-2zM1405 932h2v2h-2zM2136 509h2v2h-2zM1838 973h2v2h-2zM1487 966h2v2h-2zM1993 1023h2v2h-2zM1865 1592h2v2h-2zM2038 1270h2v2h-2zM2082 1357h2v2h-2zM1691 1565h2v2h-2zM1742 819h2v2h-2zM1784 1530h2v2h-2zM2299 1438h2v2h-2zM2182 1101h2v2h-2zM1766 685h2v2h-2zM1970 1433h2v2h-2zM1668 1108h2v2h-2zM2175 468h2v2h-2zM1589 1152h2v2h-2zM1853 891h2v2h-2zM1480 675h2v2h-2zM1823 1378h2v2h-2zM2103 579h2v2h-2zM1629 1446h2v2h-2zM1742 732h2v2h-2zM1752 655h2v2h-2zM1915 1287h2v2h-2zM1732 969h2v2h-2zM1772 1030h2v2h-2zM1376 743h2v2h-2zM1926 914h2v2h-2zM1489 975h2v2h-2zM2279 1073h2v2h-2zM1536 930h2v2h-2zM2107 706h2v2h-2zM2261 1142h2v2h-2zM1741 1598h2v2h-2zM2284 852h2v2h-2zM1460 673h2v2h-2zM2334 1180h2v2h-2zM1604 866h2v2h-2zM2111 1320h2v2h-2zM1448 1361h2v2h-2zM2219 1054h2v2h-2zM2349 1281h2v2h-2zM1932 1126h2v2h-2zM1444 779h2v2h-2zM2326 1380h2v2h-2zM1595 1657h2v2h-2zM1550 1397h2v2h-2zM1963 1379h2v2h-2zM1419 969h2v2h-2zM1452 806h2v2h-2zM2247 1021h2v2h-2zM1902 981h2v2h-2zM2186 1409h2v2h-2zM1355 909h2v2h-2zM1533 1043h2v2h-2zM2372 1333h2v2h-2zM2153 1475h2v2h-2zM1875 948h2v2h-2zM1519 716h2v2h-2zM1511 836h2v2h-2zM2400 1330h2v2h-2zM1737 803h2v2h-2zM1468 861h2v2h-2zM1591 678h2v2h-2zM1487 1152h2v2h-2zM1770 638h2v2h-2zM2041 563h2v2h-2zM1520 847h2v2h-2zM1713 1581h2v2h-2zM2186 1405h2v2h-2zM2171 1161h2v2h-2zM1378 1020h2v2h-2zM1834 913h2v2h-2zM1573 752h2v2h-2zM2115 1417h2v2h-2zM1496 856h2v2h-2zM1366 1105h2v2h-2zM1987 604h2v2h-2zM1408 833h2v2h-2zM1833 584h2v2h-2zM1555 987h2v2h-2zM2090 1330h2v2h-2zM1920 1471h2v2h-2zM2300 1394h2v2h-2zM1495 1003h2v2h-2zM2126 631h2v2h-2zM1329 926h2v2h-2zM1755 892h2v2h-2zM2247 1302h2v2h-2zM2006 491h2v2h-2zM1580 1144h2v2h-2zM1791 1009h2v2h-2zM1776 810h2v2h-2zM1443 1410h2v2h-2zM1369 897h2v2h-2zM1692 897h2v2h-2zM2378 1310h2v2h-2zM1837 730h2v2h-2zM1844 1584h2v2h-2zM1502 1003h2v2h-2zM1795 976h2v2h-2zM1685 1444h2v2h-2zM2072 1485h2v2h-2zM1527 847h2v2h-2zM1756 1565h2v2h-2zM1966 1488h2v2h-2zM1746 935h2v2h-2zM1757 897h2v2h-2zM1764 591h2v2h-2zM1554 910h2v2h-2zM1602 994h2v2h-2zM1732 1597h2v2h-2zM1724 1352h2v2h-2zM1607 902h2v2h-2zM1572 1338h2v2h-2zM2032 1448h2v2h-2zM1855 914h2v2h-2zM1535 840h2v2h-2zM1407 901h2v2h-2zM1938 669h2v2h-2zM1617 740h2v2h-2zM1650 1359h2v2h-2zM1710 1346h2v2h-2zM1574 1092h2v2h-2zM1616 728h2v2h-2zM1429 721h2v2h-2zM2097 1380h2v2h-2zM2218 1233h2v2h-2zM1480 849h2v2h-2zM1965 558h2v2h-2zM1569 1288h2v2h-2zM2377 1286h2v2h-2zM1638 1131h2v2h-2zM2370 1447h2v2h-2zM2215 1329h2v2h-2zM1932 1504h2v2h-2zM1748 1397h2v2h-2zM1775 1170h2v2h-2zM1914 686h2v2h-2zM1433 1236h2v2h-2zM1572 1147h2v2h-2zM1693 781h2v2h-2zM2403 1417h2v2h-2zM1933 1145h2v2h-2zM2010 1494h2v2h-2zM2220 625h2v2h-2zM1716 1464h2v2h-2zM1814 931h2v2h-2zM1610 974h2v2h-2zM1802 1244h2v2h-2zM1417 886h2v2h-2zM1977 1229h2v2h-2zM1967 607h2v2h-2zM2069 699h2v2h-2zM1834 936h2v2h-2zM2073 1400h2v2h-2zM1952 1092h2v2h-2zM2222 1106h2v2h-2zM1699 1615h2v2h-2zM1648 916h2v2h-2zM1808 974h2v2h-2zM2288 1081h2v2h-2zM1511 1028h2v2h-2zM1527 1178h2v2h-2zM2158 909h2v2h-2zM2255 676h2v2h-2zM1940 1255h2v2h-2zM1862 819h2v2h-2zM2059 807h2v2h-2zM1819 1601h2v2h-2zM1601 1354h2v2h-2zM1917 1439h2v2h-2zM1627 1260h2v2h-2zM1728 796h2v2h-2zM1788 1522h2v2h-2zM2027 920h2v2h-2zM2175 1432h2v2h-2zM1450 1161h2v2h-2zM2044 1381h2v2h-2zM1767 1079h2v2h-2zM2023 1245h2v2h-2zM2109 1433h2v2h-2zM2215 606h2v2h-2zM1736 1585h2v2h-2zM1591 1449h2v2h-2zM1765 1298h2v2h-2zM1822 952h2v2h-2zM1918 1565h2v2h-2zM1788 894h2v2h-2zM1657 1548h2v2h-2zM2199 1473h2v2h-2zM2313 1151h2v2h-2zM2368 1388h2v2h-2zM1509 1034h2v2h-2zM1469 1131h2v2h-2zM1792 1314h2v2h-2zM1771 1403h2v2h-2zM2232 822h2v2h-2zM1786 687h2v2h-2zM1993 973h2v2h-2zM2250 913h2v2h-2zM1759 551h2v2h-2zM1532 1202h2v2h-2zM2085 1546h2v2h-2zM1553 964h2v2h-2zM1749 1425h2v2h-2zM2039 906h2v2h-2zM1945 921h2v2h-2zM2073 1044h2v2h-2zM2282 1098h2v2h-2zM1865 1122h2v2h-2zM1571 844h2v2h-2zM1747 1603h2v2h-2zM1714 1634h2v2h-2zM2054 1364h2v2h-2zM2020 1490h2v2h-2zM2066 1298h2v2h-2zM1537 1370h2v2h-2zM2259 931h2v2h-2zM1524 1201h2v2h-2zM1884 614h2v2h-2zM1650 859h2v2h-2zM1750 698h2v2h-2zM1809 766h2v2h-2zM1590 1449h2v2h-2zM1619 1070h2v2h-2zM2032 917h2v2h-2zM1814 1280h2v2h-2zM1488 1387h2v2h-2zM1754 702h2v2h-2zM1892 985h2v2h-2zM2214 996h2v2h-2zM1904 890h2v2h-2zM1763 1224h2v2h-2zM1657 970h2v2h-2zM2247 672h2v2h-2zM1927 1273h2v2h-2zM2332 1460h2v2h-2zM2315 1391h2v2h-2zM2316 1169h2v2h-2zM2130 804h2v2h-2zM2239 1377h2v2h-2zM1916 1175h2v2h-2zM2131 1192h2v2h-2zM1722 1316h2v2h-2zM2321 1162h2v2h-2zM1627 1132h2v2h-2zM2452 1415h2v2h-2zM2120 871h2v2h-2zM1722 1298h2v2h-2zM1403 887h2v2h-2zM1988 1375h2v2h-2zM1693 653h2v2h-2zM1842 913h2v2h-2zM2193 520h2v2h-2zM1481 1075h2v2h-2zM1932 1337h2v2h-2zM2345 1197h2v2h-2zM1522 1367h2v2h-2zM1599 756h2v2h-2zM1589 1149h2v2h-2zM2174 1366h2v2h-2zM1898 1575h2v2h-2zM2069 1396h2v2h-2zM1684 853h2v2h-2zM2116 779h2v2h-2zM1792 987h2v2h-2zM1410 680h2v2h-2zM1431 866h2v2h-2zM2030 1083h2v2h-2zM1809 1573h2v2h-2zM1810 592h2v2h-2zM1653 1145h2v2h-2zM1735 1097h2v2h-2zM1675 950h2v2h-2zM2045 1275h2v2h-2zM1451 1024h2v2h-2zM2176 1419h2v2h-2zM1981 1152h2v2h-2zM1888 911h2v2h-2zM1674 1135h2v2h-2zM2065 1451h2v2h-2zM1804 962h2v2h-2zM1906 1408h2v2h-2zM1725 1321h2v2h-2zM2365 1435h2v2h-2zM1802 734h2v2h-2zM2223 873h2v2h-2zM1671 1199h2v2h-2zM1552 814h2v2h-2zM1568 1215h2v2h-2zM2100 653h2v2h-2zM1539 762h2v2h-2zM2204 704h2v2h-2zM1807 1588h2v2h-2zM1739 692h2v2h-2zM2146 1298h2v2h-2zM2226 578h2v2h-2zM1544 888h2v2h-2zM2334 1092h2v2h-2zM2231 1471h2v2h-2zM1719 1076h2v2h-2zM1783 815h2v2h-2zM1559 1172h2v2h-2zM1891 1512h2v2h-2zM2133 1390h2v2h-2zM1629 1566h2v2h-2zM1859 1444h2v2h-2zM1918 1469h2v2h-2zM1982 1441h2v2h-2zM1742 1477h2v2h-2zM1671 1554h2v2h-2zM1860 865h2v2h-2zM1595 1040h2v2h-2zM2422 1380h2v2h-2zM2228 1390h2v2h-2zM2199 1455h2v2h-2zM1443 1335h2v2h-2zM1483 1096h2v2h-2zM1938 623h2v2h-2zM1475 806h2v2h-2zM2316 1154h2v2h-2zM1705 786h2v2h-2zM1337 768h2v2h-2zM1782 619h2v2h-2zM1798 870h2v2h-2zM1999 809h2v2h-2zM1632 794h2v2h-2zM1536 944h2v2h-2zM1451 943h2v2h-2zM1688 887h2v2h-2zM2196 1430h2v2h-2zM1794 1470h2v2h-2zM2194 1280h2v2h-2zM1931 993h2v2h-2zM1875 1557h2v2h-2zM1556 1357h2v2h-2zM1853 661h2v2h-2zM1827 1154h2v2h-2zM2048 1546h2v2h-2zM1384 1038h2v2h-2zM1883 1595h2v2h-2zM1757 1125h2v2h-2zM2196 1186h2v2h-2zM2051 1440h2v2h-2zM2193 1446h2v2h-2zM1493 1170h2v2h-2zM2185 1442h2v2h-2zM1715 963h2v2h-2zM1854 1167h2v2h-2zM1852 1090h2v2h-2zM1693 1225h2v2h-2zM1374 1011h2v2h-2zM2195 1444h2v2h-2zM1647 1186h2v2h-2zM1837 958h2v2h-2zM1954 1330h2v2h-2zM1868 1094h2v2h-2zM1634 607h2v2h-2zM1746 1295h2v2h-2zM1941 596h2v2h-2zM2159 583h2v2h-2zM2221 1053h2v2h-2zM1943 1574h2v2h-2zM2119 1297h2v2h-2zM1727 1057h2v2h-2zM2079 1164h2v2h-2zM2118 1298h2v2h-2zM2007 1125h2v2h-2zM2466 1407h2v2h-2zM2078 1279h2v2h-2zM1611 976h2v2h-2zM1789 656h2v2h-2zM1743 686h2v2h-2zM1724 1565h2v2h-2zM1547 1018h2v2h-2zM2408 1403h2v2h-2zM1809 1445h2v2h-2zM1943 1175h2v2h-2zM1414 1029h2v2h-2zM1559 1380h2v2h-2zM1861 634h2v2h-2zM1457 1219h2v2h-2zM2205 579h2v2h-2zM1631 984h2v2h-2zM1895 1580h2v2h-2zM2257 1273h2v2h-2zM2139 1500h2v2h-2zM2034 1284h2v2h-2zM1523 888h2v2h-2zM2339 1032h2v2h-2zM1321 688h2v2h-2zM1671 667h2v2h-2zM1652 1188h2v2h-2zM1594 798h2v2h-2zM2054 947h2v2h-2zM2150 639h2v2h-2zM1362 1036h2v2h-2zM2189 1087h2v2h-2zM2171 1449h2v2h-2zM1689 1340h2v2h-2zM2277 992h2v2h-2zM2234 1347h2v2h-2zM1955 593h2v2h-2zM1523 756h2v2h-2zM2110 804h2v2h-2zM2242 1075h2v2h-2zM2107 604h2v2h-2zM2209 1167h2v2h-2zM1992 739h2v2h-2zM1628 1006h2v2h-2zM1528 1307h2v2h-2zM2136 529h2v2h-2zM1585 789h2v2h-2zM1795 1450h2v2h-2zM2031 1414h2v2h-2zM2003 1182h2v2h-2zM2127 966h2v2h-2zM1543 616h2v2h-2zM2388 1194h2v2h-2zM2186 533h2v2h-2zM2243 1331h2v2h-2zM2359 1097h2v2h-2zM2071 757h2v2h-2zM1539 1442h2v2h-2zM1375 804h2v2h-2zM1817 821h2v2h-2zM1833 1583h2v2h-2zM1903 824h2v2h-2zM1613 949h2v2h-2zM2306 1461h2v2h-2zM1636 1120h2v2h-2zM1854 1473h2v2h-2zM2219 559h2v2h-2zM2156 1405h2v2h-2zM1896 923h2v2h-2zM1788 1433h2v2h-2zM1397 1076h2v2h-2zM1329 897h2v2h-2zM2093 1381h2v2h-2zM1887 1161h2v2h-2zM2207 1107h2v2h-2zM1653 754h2v2h-2zM1721 745h2v2h-2zM1957 570h2v2h-2zM1607 980h2v2h-2zM1777 858h2v2h-2zM1432 681h2v2h-2zM2174 455h2v2h-2zM1449 1035h2v2h-2zM1686 1257h2v2h-2zM1756 765h2v2h-2zM2150 1293h2v2h-2zM1886 1592h2v2h-2zM1885 1554h2v2h-2zM1859 1011h2v2h-2zM2050 836h2v2h-2zM2184 522h2v2h-2zM1703 1539h2v2h-2zM1601 755h2v2h-2zM1331 912h2v2h-2zM2149 1425h2v2h-2zM2427 1389h2v2h-2zM1868 1589h2v2h-2zM1833 634h2v2h-2zM1998 1438h2v2h-2zM1915 875h2v2h-2zM1498 1227h2v2h-2zM1409 1034h2v2h-2zM1979 1440h2v2h-2zM2064 1191h2v2h-2zM1717 790h2v2h-2zM2346 1118h2v2h-2zM2158 882h2v2h-2zM2174 1160h2v2h-2zM1566 1426h2v2h-2zM1851 1546h2v2h-2zM2223 600h2v2h-2zM1777 892h2v2h-2zM1344 707h2v2h-2zM1837 705h2v2h-2zM2452 1400h2v2h-2zM1754 897h2v2h-2zM1410 1018h2v2h-2zM1414 769h2v2h-2zM2306 1338h2v2h-2zM1636 943h2v2h-2zM1770 1588h2v2h-2zM2230 1079h2v2h-2zM1753 927h2v2h-2zM1683 916h2v2h-2zM1460 830h2v2h-2zM1554 1417h2v2h-2zM2038 791h2v2h-2zM1728 1154h2v2h-2zM2104 964h2v2h-2zM1792 689h2v2h-2zM2232 666h2v2h-2zM1857 786h2v2h-2zM1768 749h2v2h-2zM1780 785h2v2h-2zM1542 853h2v2h-2zM1935 1303h2v2h-2zM2293 1042h2v2h-2zM1738 911h2v2h-2zM1735 1229h2v2h-2zM1870 1532h2v2h-2zM1642 1476h2v2h-2zM2299 1090h2v2h-2zM1573 1040h2v2h-2zM1954 1092h2v2h-2zM1783 1607h2v2h-2zM2071 777h2v2h-2zM1709 1250h2v2h-2zM1705 1072h2v2h-2zM2123 1469h2v2h-2zM2085 576h2v2h-2zM1704 836h2v2h-2zM1986 1026h2v2h-2zM2445 1376h2v2h-2zM2351 1114h2v2h-2zM1630 1664h2v2h-2zM1726 912h2v2h-2zM1616 649h2v2h-2zM2146 1485h2v2h-2zM1929 1123h2v2h-2zM1668 1084h2v2h-2zM2298 1165h2v2h-2zM2351 1044h2v2h-2zM1816 854h2v2h-2zM2305 1016h2v2h-2zM2046 1423h2v2h-2zM2184 504h2v2h-2zM1618 1230h2v2h-2zM1793 743h2v2h-2zM2261 964h2v2h-2zM1816 754h2v2h-2zM2074 592h2v2h-2zM1920 782h2v2h-2zM1384 734h2v2h-2zM1834 700h2v2h-2zM2256 1435h2v2h-2zM1843 1481h2v2h-2zM2094 1275h2v2h-2zM1569 971h2v2h-2zM2062 917h2v2h-2zM1375 958h2v2h-2zM1389 804h2v2h-2zM1488 1273h2v2h-2zM1969 1268h2v2h-2zM1691 916h2v2h-2zM1800 1113h2v2h-2zM1521 1059h2v2h-2zM1667 1396h2v2h-2zM2285 1363h2v2h-2zM1566 1214h2v2h-2zM1630 1404h2v2h-2zM1850 982h2v2h-2zM1791 906h2v2h-2zM1709 1280h2v2h-2zM2240 1394h2v2h-2zM2340 1377h2v2h-2zM1492 1165h2v2h-2zM2339 1380h2v2h-2zM1679 896h2v2h-2zM2227 1062h2v2h-2zM1853 627h2v2h-2zM1692 1418h2v2h-2zM1833 1289h2v2h-2zM2164 518h2v2h-2zM1631 693h2v2h-2zM1656 740h2v2h-2zM1720 759h2v2h-2zM1893 956h2v2h-2zM1611 900h2v2h-2zM1625 731h2v2h-2zM1710 643h2v2h-2zM1655 1098h2v2h-2zM1665 841h2v2h-2zM1751 775h2v2h-2zM1431 1139h2v2h-2zM1790 1585h2v2h-2zM1968 501h2v2h-2zM1400 1092h2v2h-2zM1663 952h2v2h-2zM1673 756h2v2h-2zM1718 642h2v2h-2zM1886 1456h2v2h-2zM1616 934h2v2h-2zM1891 876h2v2h-2zM2153 1282h2v2h-2zM1640 937h2v2h-2zM1967 508h2v2h-2zM2444 1417h2v2h-2zM2161 1113h2v2h-2zM1402 1181h2v2h-2zM1469 1194h2v2h-2zM1760 1107h2v2h-2zM1354 925h2v2h-2zM1851 713h2v2h-2zM1909 1253h2v2h-2zM1694 923h2v2h-2zM1406 995h2v2h-2zM2095 1423h2v2h-2zM1986 500h2v2h-2zM2365 1427h2v2h-2zM2176 604h2v2h-2zM1458 755h2v2h-2zM2104 1205h2v2h-2zM1847 1578h2v2h-2zM2303 1484h2v2h-2zM1767 1430h2v2h-2zM1876 1103h2v2h-2zM1921 1144h2v2h-2zM1725 1579h2v2h-2zM1916 880h2v2h-2zM2191 609h2v2h-2zM2107 1224h2v2h-2zM2107 1029h2v2h-2zM1618 931h2v2h-2zM1641 1570h2v2h-2zM1452 766h2v2h-2zM1427 1128h2v2h-2zM1725 701h2v2h-2zM2162 484h2v2h-2zM2239 1244h2v2h-2zM2267 991h2v2h-2zM1480 744h2v2h-2zM1336 940h2v2h-2zM1628 940h2v2h-2zM2214 1224h2v2h-2zM1803 688h2v2h-2zM1435 751h2v2h-2zM1833 1011h2v2h-2zM1584 1173h2v2h-2zM1928 589h2v2h-2zM1889 1175h2v2h-2zM1830 1558h2v2h-2zM1575 1271h2v2h-2zM2096 504h2v2h-2zM2041 893h2v2h-2zM2133 1021h2v2h-2zM1638 1091h2v2h-2zM1891 1476h2v2h-2zM1692 719h2v2h-2zM2360 1379h2v2h-2zM1404 1058h2v2h-2zM1834 579h2v2h-2zM1832 695h2v2h-2zM2315 1304h2v2h-2zM1729 1047h2v2h-2zM1597 1361h2v2h-2zM2246 823h2v2h-2zM2251 1365h2v2h-2zM1541 713h2v2h-2zM1578 906h2v2h-2zM1804 1157h2v2h-2zM1981 1525h2v2h-2zM1680 1578h2v2h-2zM1841 717h2v2h-2zM1940 1448h2v2h-2zM2134 1010h2v2h-2zM1545 649h2v2h-2zM2345 1124h2v2h-2zM1685 701h2v2h-2zM1814 919h2v2h-2zM1758 896h2v2h-2zM1745 887h2v2h-2zM1965 875h2v2h-2zM2256 1403h2v2h-2zM1670 1149h2v2h-2zM2210 578h2v2h-2zM2193 530h2v2h-2zM1910 1592h2v2h-2zM2321 1107h2v2h-2zM1771 679h2v2h-2zM1487 934h2v2h-2zM2100 1299h2v2h-2zM2245 1287h2v2h-2zM2200 532h2v2h-2zM1386 813h2v2h-2zM2082 1083h2v2h-2zM1884 1583h2v2h-2zM1412 1122h2v2h-2zM2047 1049h2v2h-2zM2438 1345h2v2h-2zM2022 702h2v2h-2zM1567 707h2v2h-2zM2270 1220h2v2h-2zM1524 1183h2v2h-2zM2200 1298h2v2h-2zM1932 745h2v2h-2zM1405 818h2v2h-2zM1880 799h2v2h-2zM1750 1014h2v2h-2zM2029 1129h2v2h-2zM1790 973h2v2h-2zM1791 897h2v2h-2zM1884 1184h2v2h-2zM2216 802h2v2h-2zM2323 1183h2v2h-2zM1886 1134h2v2h-2zM1937 986h2v2h-2zM2070 559h2v2h-2zM2107 1527h2v2h-2zM2328 1090h2v2h-2zM2118 1418h2v2h-2zM1899 1445h2v2h-2zM1506 865h2v2h-2zM1964 1194h2v2h-2zM1490 1134h2v2h-2zM2009 1176h2v2h-2zM1915 931h2v2h-2zM1739 612h2v2h-2zM1712 1466h2v2h-2zM2339 1128h2v2h-2zM1803 1172h2v2h-2zM2138 594h2v2h-2zM1961 1408h2v2h-2zM1528 1229h2v2h-2zM1562 951h2v2h-2zM1784 700h2v2h-2zM1387 656h2v2h-2zM1744 1087h2v2h-2zM1613 1490h2v2h-2zM1967 1370h2v2h-2zM2346 1119h2v2h-2zM1800 900h2v2h-2zM1715 1330h2v2h-2zM1886 1592h2v2h-2zM1903 785h2v2h-2zM2014 1077h2v2h-2zM1911 1510h2v2h-2zM1695 1246h2v2h-2zM1838 1529h2v2h-2zM1463 1015h2v2h-2zM2447 1329h2v2h-2zM1710 800h2v2h-2zM1832 1098h2v2h-2zM2190 1270h2v2h-2zM2250 900h2v2h-2zM1480 1366h2v2h-2zM1569 1121h2v2h-2zM1767 1557h2v2h-2zM1775 564h2v2h-2zM1462 1128h2v2h-2zM2291 1204h2v2h-2zM1757 1317h2v2h-2zM1501 964h2v2h-2zM1784 807h2v2h-2zM2121 497h2v2h-2zM1970 1520h2v2h-2zM1753 1601h2v2h-2zM1617 748h2v2h-2zM1746 1443h2v2h-2zM1820 976h2v2h-2zM1650 709h2v2h-2zM1751 964h2v2h-2zM1339 678h2v2h-2zM1336 791h2v2h-2zM1467 759h2v2h-2zM2066 1424h2v2h-2zM1881 1185h2v2h-2zM1504 794h2v2h-2zM2125 582h2v2h-2zM1696 1034h2v2h-2zM2000 1166h2v2h-2zM1688 1267h2v2h-2zM2071 669h2v2h-2zM1715 1302h2v2h-2zM1630 1037h2v2h-2zM1990 591h2v2h-2zM2137 1488h2v2h-2zM1442 1366h2v2h-2zM1542 1048h2v2h-2zM1671 983h2v2h-2zM1716 1386h2v2h-2zM1814 848h2v2h-2zM2164 583h2v2h-2zM1829 551h2v2h-2zM1561 1056h2v2h-2zM1566 1089h2v2h-2zM2413 1341h2v2h-2zM1499 1177h2v2h-2zM1820 1017h2v2h-2zM2108 1498h2v2h-2zM1764 1305h2v2h-2zM1930 940h2v2h-2zM2050 804h2v2h-2zM1646 817h2v2h-2zM1543 1411h2v2h-2zM1888 834h2v2h-2zM2064 877h2v2h-2zM2111 607h2v2h-2zM1727 1319h2v2h-2zM1674 745h2v2h-2zM1799 952h2v2h-2zM2263 1440h2v2h-2zM2023 772h2v2h-2zM1916 1125h2v2h-2zM1367 873h2v2h-2zM1831 868h2v2h-2zM1747 715h2v2h-2zM1739 573h2v2h-2zM1741 791h2v2h-2zM1494 1111h2v2h-2zM1941 837h2v2h-2zM2149 647h2v2h-2zM2329 1141h2v2h-2zM1785 849h2v2h-2zM1710 669h2v2h-2zM2212 1403h2v2h-2zM2192 1366h2v2h-2zM2013 1463h2v2h-2zM2331 1156h2v2h-2zM2189 959h2v2h-2zM1497 1352h2v2h-2zM1829 859h2v2h-2zM1896 1504h2v2h-2zM2228 1023h2v2h-2zM1511 1178h2v2h-2zM1780 1603h2v2h-2zM1603 737h2v2h-2zM1667 798h2v2h-2zM1545 853h2v2h-2zM2237 1482h2v2h-2zM2074 1096h2v2h-2zM1947 1224h2v2h-2zM1529 719h2v2h-2zM1412 706h2v2h-2zM1699 678h2v2h-2zM1834 1532h2v2h-2zM2135 1367h2v2h-2zM1807 1241h2v2h-2zM1434 751h2v2h-2zM1435 863h2v2h-2zM2166 1289h2v2h-2zM1799 916h2v2h-2zM2217 1132h2v2h-2zM1725 1013h2v2h-2zM1601 907h2v2h-2zM2083 645h2v2h-2zM1954 606h2v2h-2zM2102 839h2v2h-2zM1433 1041h2v2h-2zM1739 1419h2v2h-2zM1639 1035h2v2h-2zM2380 1130h2v2h-2zM2269 1362h2v2h-2zM1898 573h2v2h-2zM1953 1143h2v2h-2zM1994 968h2v2h-2zM1700 813h2v2h-2zM1394 1100h2v2h-2zM2114 595h2v2h-2zM1437 1277h2v2h-2zM1774 1532h2v2h-2zM1697 864h2v2h-2zM1759 651h2v2h-2zM1887 1523h2v2h-2zM1608 726h2v2h-2zM2143 549h2v2h-2zM1774 748h2v2h-2zM1804 831h2v2h-2zM2139 1406h2v2h-2zM1673 1552h2v2h-2zM1880 675h2v2h-2zM2027 1379h2v2h-2zM1996 1138h2v2h-2zM1871 864h2v2h-2zM2261 888h2v2h-2zM1693 817h2v2h-2zM1640 1357h2v2h-2zM1861 748h2v2h-2zM1369 954h2v2h-2zM1980 1399h2v2h-2zM2140 875h2v2h-2zM1574 772h2v2h-2zM1713 1617h2v2h-2zM1595 1031h2v2h-2zM1852 862h2v2h-2zM1564 1061h2v2h-2zM1683 1474h2v2h-2zM1677 999h2v2h-2zM1524 1182h2v2h-2zM1435 723h2v2h-2zM1582 1010h2v2h-2zM1891 1586h2v2h-2zM2139 695h2v2h-2zM1744 1333h2v2h-2zM2082 1451h2v2h-2zM2212 1307h2v2h-2zM2116 1263h2v2h-2zM1979 1405h2v2h-2zM1436 1114h2v2h-2zM2427 1286h2v2h-2zM1502 1330h2v2h-2zM1816 1529h2v2h-2zM1909 1564h2v2h-2zM1864 738h2v2h-2zM1899 1555h2v2h-2zM1726 1015h2v2h-2zM2118 1109h2v2h-2zM1479 993h2v2h-2zM1663 962h2v2h-2zM2418 1353h2v2h-2zM2009 1256h2v2h-2zM2357 1034h2v2h-2zM1821 883h2v2h-2zM1627 1006h2v2h-2zM1931 1166h2v2h-2zM1437 712h2v2h-2zM2195 1236h2v2h-2zM1633 1309h2v2h-2zM1718 1354h2v2h-2zM1919 1580h2v2h-2zM2036 1163h2v2h-2zM1414 945h2v2h-2zM1659 1001h2v2h-2zM1453 1129h2v2h-2zM1716 1035h2v2h-2zM1891 583h2v2h-2zM2266 1262h2v2h-2zM1938 961h2v2h-2zM1978 1158h2v2h-2zM1763 817h2v2h-2zM1896 806h2v2h-2zM2316 894h2v2h-2zM1619 1626h2v2h-2zM1810 870h2v2h-2zM1529 1404h2v2h-2zM2175 1429h2v2h-2zM1365 720h2v2h-2zM2213 1378h2v2h-2zM1684 1337h2v2h-2zM1931 836h2v2h-2zM2030 611h2v2h-2zM1732 909h2v2h-2zM1937 1221h2v2h-2zM2179 1237h2v2h-2zM1456 1189h2v2h-2zM2416 1406h2v2h-2zM1698 1422h2v2h-2zM1762 682h2v2h-2zM1928 529h2v2h-2zM1484 1073h2v2h-2zM2061 1465h2v2h-2zM2267 983h2v2h-2zM1381 835h2v2h-2zM1851 1181h2v2h-2zM2296 1302h2v2h-2zM2135 1163h2v2h-2zM1466 1269h2v2h-2zM1952 1263h2v2h-2zM1772 1342h2v2h-2zM1998 1570h2v2h-2zM1468 1236h2v2h-2zM2103 1209h2v2h-2zM1690 1081h2v2h-2zM2112 1112h2v2h-2zM2145 1244h2v2h-2zM1782 647h2v2h-2zM1326 682h2v2h-2zM1320 703h2v2h-2zM1997 610h2v2h-2zM1369 792h2v2h-2zM1847 975h2v2h-2zM1726 1203h2v2h-2zM2143 1226h2v2h-2zM1357 975h2v2h-2zM1413 859h2v2h-2zM1942 1411h2v2h-2zM2119 1493h2v2h-2zM1511 1388h2v2h-2zM1646 885h2v2h-2zM1653 1217h2v2h-2zM2234 1392h2v2h-2zM1514 835h2v2h-2zM1810 869h2v2h-2zM2038 1433h2v2h-2zM1829 806h2v2h-2zM2057 664h2v2h-2zM1757 1579h2v2h-2zM1874 1464h2v2h-2zM1775 566h2v2h-2zM1937 1502h2v2h-2zM2056 952h2v2h-2zM2160 588h2v2h-2zM2040 802h2v2h-2zM2318 1180h2v2h-2zM1877 979h2v2h-2zM1562 1406h2v2h-2zM1413 1073h2v2h-2zM2123 666h2v2h-2zM2291 928h2v2h-2zM1882 1186h2v2h-2zM2194 1133h2v2h-2zM2006 580h2v2h-2zM2309 863h2v2h-2zM1963 711h2v2h-2zM1978 1475h2v2h-2zM1990 1404h2v2h-2zM2387 1365h2v2h-2zM1671 1366h2v2h-2zM1892 1194h2v2h-2zM1728 645h2v2h-2zM1483 1362h2v2h-2zM1509 827h2v2h-2zM1989 1504h2v2h-2zM1777 920h2v2h-2zM1939 1249h2v2h-2zM1486 861h2v2h-2zM1627 1297h2v2h-2zM2351 1122h2v2h-2zM2077 1506h2v2h-2zM2328 1147h2v2h-2zM1717 649h2v2h-2zM1676 957h2v2h-2zM1419 1097h2v2h-2zM1750 1299h2v2h-2zM2363 1399h2v2h-2zM1530 865h2v2h-2zM1789 552h2v2h-2zM1923 805h2v2h-2zM2045 1515h2v2h-2zM1708 1013h2v2h-2zM1878 990h2v2h-2zM1444 1101h2v2h-2zM1803 981h2v2h-2zM1877 923h2v2h-2zM2335 1370h2v2h-2zM1572 900h2v2h-2zM2301 963h2v2h-2zM2320 1354h2v2h-2zM1894 916h2v2h-2zM2394 1357h2v2h-2zM1335 893h2v2h-2zM1728 1119h2v2h-2zM2192 1051h2v2h-2zM1864 1566h2v2h-2zM1391 822h2v2h-2zM2239 1451h2v2h-2zM1537 1219h2v2h-2zM1927 1480h2v2h-2zM2352 1089h2v2h-2zM2124 1440h2v2h-2zM1394 789h2v2h-2zM1664 786h2v2h-2zM1591 1012h2v2h-2zM1530 1207h2v2h-2zM1344 1084h2v2h-2zM1837 1047h2v2h-2zM2237 904h2v2h-2zM1862 632h2v2h-2zM1803 697h2v2h-2zM2236 1068h2v2h-2zM1756 905h2v2h-2zM1843 887h2v2h-2zM2117 1402h2v2h-2zM2173 1465h2v2h-2zM2352 1018h2v2h-2zM2252 1238h2v2h-2zM1738 739h2v2h-2zM2136 1194h2v2h-2zM1517 1214h2v2h-2zM1737 1552h2v2h-2zM1834 1295h2v2h-2zM2359 1066h2v2h-2zM1688 1450h2v2h-2zM1747 1116h2v2h-2zM1438 988h2v2h-2zM2131 609h2v2h-2zM2128 1280h2v2h-2zM1693 939h2v2h-2zM1853 670h2v2h-2zM1531 1470h2v2h-2zM1515 638h2v2h-2zM2075 1274h2v2h-2zM2324 1361h2v2h-2zM1795 734h2v2h-2zM1735 1556h2v2h-2zM2250 1429h2v2h-2zM2069 1069h2v2h-2zM2280 1094h2v2h-2zM1822 953h2v2h-2zM2103 631h2v2h-2zM2121 989h2v2h-2zM1729 1428h2v2h-2zM1772 1449h2v2h-2zM1893 853h2v2h-2zM1918 850h2v2h-2zM1373 1008h2v2h-2zM1569 1128h2v2h-2zM1659 1055h2v2h-2zM1578 900h2v2h-2zM2333 1199h2v2h-2zM2231 1381h2v2h-2zM1549 1344h2v2h-2zM1735 763h2v2h-2zM1816 840h2v2h-2zM1950 801h2v2h-2zM1393 1038h2v2h-2zM2305 1087h2v2h-2zM1739 1626h2v2h-2zM1873 666h2v2h-2zM1679 956h2v2h-2zM2108 1427h2v2h-2zM1803 963h2v2h-2zM2308 1365h2v2h-2zM1792 952h2v2h-2zM2289 1402h2v2h-2zM1839 698h2v2h-2zM1573 819h2v2h-2zM2060 1252h2v2h-2zM2296 1370h2v2h-2zM1731 1527h2v2h-2zM1605 935h2v2h-2zM1929 1424h2v2h-2zM1741 682h2v2h-2zM1782 973h2v2h-2zM2038 487h2v2h-2zM1306 693h2v2h-2zM1694 1383h2v2h-2zM1485 1172h2v2h-2zM1777 721h2v2h-2zM1393 937h2v2h-2zM1451 1188h2v2h-2zM1591 1390h2v2h-2zM1569 948h2v2h-2zM1761 1004h2v2h-2zM2205 1339h2v2h-2zM1806 1176h2v2h-2zM2004 1174h2v2h-2zM1561 1585h2v2h-2zM1861 1303h2v2h-2zM1740 1401h2v2h-2zM1497 1217h2v2h-2zM1739 1508h2v2h-2zM1520 857h2v2h-2zM1840 1098h2v2h-2zM2128 559h2v2h-2zM1695 831h2v2h-2zM2262 1260h2v2h-2zM1800 689h2v2h-2zM1696 1136h2v2h-2zM2034 1204h2v2h-2zM1914 1333h2v2h-2zM1716 1330h2v2h-2zM1608 1328h2v2h-2zM2464 1401h2v2h-2zM2127 577h2v2h-2zM1940 938h2v2h-2zM1699 953h2v2h-2zM1680 910h2v2h-2zM1358 1013h2v2h-2zM1823 975h2v2h-2zM1563 1598h2v2h-2zM1381 750h2v2h-2zM1748 619h2v2h-2zM1458 1390h2v2h-2zM1683 1068h2v2h-2zM2045 1333h2v2h-2zM1569 947h2v2h-2zM1717 1077h2v2h-2zM1862 578h2v2h-2zM1626 705h2v2h-2zM2024 651h2v2h-2zM1894 883h2v2h-2zM1857 1163h2v2h-2zM2300 1159h2v2h-2zM1538 1054h2v2h-2zM1422 757h2v2h-2zM1881 1429h2v2h-2zM1750 785h2v2h-2zM1628 1069h2v2h-2zM1449 1193h2v2h-2zM1911 511h2v2h-2zM1876 1126h2v2h-2zM1891 589h2v2h-2zM2249 1276h2v2h-2zM2179 1477h2v2h-2zM1873 966h2v2h-2zM2180 1517h2v2h-2zM1516 1364h2v2h-2zM1626 962h2v2h-2zM2206 786h2v2h-2zM1885 693h2v2h-2zM1573 770h2v2h-2zM1900 794h2v2h-2zM2053 854h2v2h-2zM1388 972h2v2h-2zM1783 1374h2v2h-2zM2240 1290h2v2h-2zM2157 1382h2v2h-2zM1425 817h2v2h-2zM1868 1600h2v2h-2zM1532 845h2v2h-2zM1809 557h2v2h-2zM1881 1373h2v2h-2zM1548 679h2v2h-2zM1495 1346h2v2h-2zM1710 1015h2v2h-2zM1780 664h2v2h-2zM1482 1360h2v2h-2zM2035 1098h2v2h-2zM2152 594h2v2h-2zM2203 1380h2v2h-2zM2170 1472h2v2h-2zM1621 1569h2v2h-2zM2039 1450h2v2h-2zM1766 1619h2v2h-2zM2186 481h2v2h-2zM1437 1227h2v2h-2zM1719 1560h2v2h-2zM2038 1515h2v2h-2zM1984 1462h2v2h-2zM2131 1183h2v2h-2zM2159 1082h2v2h-2zM1427 761h2v2h-2zM1549 1232h2v2h-2zM2214 1363h2v2h-2zM1698 1323h2v2h-2zM1708 780h2v2h-2zM2337 946h2v2h-2zM2237 1292h2v2h-2zM1787 780h2v2h-2zM1870 786h2v2h-2zM1922 1325h2v2h-2zM2293 1112h2v2h-2zM1621 913h2v2h-2zM1502 1152h2v2h-2zM1472 924h2v2h-2zM1919 1588h2v2h-2zM1844 643h2v2h-2zM2146 698h2v2h-2zM2231 1465h2v2h-2zM1575 701h2v2h-2zM1392 1017h2v2h-2zM1659 1013h2v2h-2zM1488 811h2v2h-2zM1575 1096h2v2h-2zM2280 899h2v2h-2zM1815 1148h2v2h-2zM1614 1020h2v2h-2zM2186 657h2v2h-2zM1725 706h2v2h-2zM1842 1556h2v2h-2zM1896 637h2v2h-2zM2071 544h2v2h-2zM1651 898h2v2h-2zM1829 1045h2v2h-2zM2272 1272h2v2h-2zM1411 1018h2v2h-2zM2233 614h2v2h-2zM1793 629h2v2h-2zM1704 1358h2v2h-2zM1688 1327h2v2h-2zM1825 1401h2v2h-2zM1497 843h2v2h-2zM1502 824h2v2h-2zM1959 497h2v2h-2zM1780 588h2v2h-2zM1485 1120h2v2h-2zM1716 944h2v2h-2zM2099 1430h2v2h-2zM2099 577h2v2h-2zM2207 1430h2v2h-2zM1963 1013h2v2h-2zM1861 1082h2v2h-2zM1464 660h2v2h-2zM2351 1017h2v2h-2zM1880 549h2v2h-2zM1987 1222h2v2h-2zM1494 1323h2v2h-2zM2047 869h2v2h-2zM2448 1402h2v2h-2zM1843 1585h2v2h-2zM1766 1614h2v2h-2zM2454 1393h2v2h-2zM2052 669h2v2h-2zM1563 934h2v2h-2zM2223 1109h2v2h-2zM1748 1597h2v2h-2zM1740 994h2v2h-2zM1841 1045h2v2h-2zM1504 871h2v2h-2zM1462 1416h2v2h-2zM1992 893h2v2h-2zM1649 1370h2v2h-2zM1902 1384h2v2h-2zM2274 1091h2v2h-2zM1842 584h2v2h-2zM1430 928h2v2h-2zM1651 1534h2v2h-2zM1463 1101h2v2h-2zM1361 1142h2v2h-2zM1498 1490h2v2h-2zM1686 1614h2v2h-2zM1594 1018h2v2h-2zM2337 1385h2v2h-2zM1852 1546h2v2h-2zM1523 886h2v2h-2zM1884 931h2v2h-2zM1562 877h2v2h-2zM1635 1492h2v2h-2zM1737 1214h2v2h-2zM1601 794h2v2h-2zM1631 1274h2v2h-2zM2330 1098h2v2h-2zM1879 1031h2v2h-2zM1757 1482h2v2h-2zM2361 1308h2v2h-2zM1798 736h2v2h-2zM1527 1201h2v2h-2zM2330 1303h2v2h-2zM1562 1048h2v2h-2zM1927 937h2v2h-2zM1772 922h2v2h-2zM1878 1238h2v2h-2zM1945 746h2v2h-2zM2326 1143h2v2h-2zM1685 1196h2v2h-2zM1628 1288h2v2h-2zM1452 1360h2v2h-2zM2023 1488h2v2h-2zM1594 686h2v2h-2zM1803 1024h2v2h-2zM2209 1437h2v2h-2zM1893 786h2v2h-2zM1704 976h2v2h-2zM2175 537h2v2h-2zM2098 1448h2v2h-2zM2035 745h2v2h-2zM1792 1191h2v2h-2zM1396 682h2v2h-2zM2311 1321h2v2h-2zM1783 982h2v2h-2zM1473 675h2v2h-2zM1467 1088h2v2h-2zM2356 1055h2v2h-2zM1899 1321h2v2h-2zM2445 1386h2v2h-2zM1871 1449h2v2h-2zM1700 1325h2v2h-2zM1665 978h2v2h-2zM1505 1030h2v2h-2zM1380 1037h2v2h-2zM1522 1191h2v2h-2zM1588 901h2v2h-2zM1820 898h2v2h-2zM1340 781h2v2h-2zM2157 1454h2v2h-2zM1857 888h2v2h-2zM2125 619h2v2h-2zM1812 1421h2v2h-2zM1721 729h2v2h-2zM1422 812h2v2h-2zM1899 1528h2v2h-2zM1526 981h2v2h-2zM1743 1194h2v2h-2zM1773 1295h2v2h-2zM1506 1084h2v2h-2zM2053 1228h2v2h-2zM1868 809h2v2h-2zM1688 1542h2v2h-2zM2117 482h2v2h-2zM1439 1189h2v2h-2zM1789 690h2v2h-2zM2095 1447h2v2h-2zM2150 1092h2v2h-2zM1382 812h2v2h-2zM1695 986h2v2h-2zM1750 801h2v2h-2zM1522 1250h2v2h-2zM1519 1341h2v2h-2zM1858 1005h2v2h-2zM1603 1071h2v2h-2zM1419 1161h2v2h-2zM1962 1245h2v2h-2zM1740 1510h2v2h-2zM2004 1220h2v2h-2zM2122 531h2v2h-2zM1500 1001h2v2h-2zM1770 693h2v2h-2zM2408 1433h2v2h-2zM1639 956h2v2h-2zM2104 1140h2v2h-2zM1616 1033h2v2h-2zM2098 1279h2v2h-2zM2179 1379h2v2h-2zM1778 1557h2v2h-2zM1896 911h2v2h-2zM2066 1162h2v2h-2zM1785 1566h2v2h-2zM1699 1270h2v2h-2zM1518 704h2v2h-2zM1707 1558h2v2h-2zM2100 1276h2v2h-2zM1740 1335h2v2h-2zM1764 969h2v2h-2zM1718 680h2v2h-2zM1889 1004h2v2h-2zM1824 1032h2v2h-2zM1452 689h2v2h-2zM1818 1164h2v2h-2zM2430 1319h2v2h-2zM2267 1236h2v2h-2zM1868 1164h2v2h-2zM2001 1211h2v2h-2zM1819 1043h2v2h-2zM1942 1168h2v2h-2zM2344 1047h2v2h-2zM1535 1435h2v2h-2zM2001 1107h2v2h-2zM1731 1577h2v2h-2zM1679 877h2v2h-2zM1571 1424h2v2h-2zM1735 1429h2v2h-2zM1894 668h2v2h-2zM1710 1426h2v2h-2zM1467 1191h2v2h-2zM1745 985h2v2h-2zM1810 633h2v2h-2zM1936 1039h2v2h-2zM1716 893h2v2h-2zM1454 765h2v2h-2zM1815 581h2v2h-2zM1527 1018h2v2h-2zM1973 1280h2v2h-2zM2326 1405h2v2h-2zM2196 1068h2v2h-2zM1587 1031h2v2h-2zM1810 924h2v2h-2zM1491 1420h2v2h-2zM2111 616h2v2h-2zM2149 606h2v2h-2zM1512 888h2v2h-2zM1699 1280h2v2h-2zM1992 859h2v2h-2zM1413 938h2v2h-2zM1743 962h2v2h-2zM2043 1373h2v2h-2zM1760 981h2v2h-2zM1780 1446h2v2h-2zM1564 1034h2v2h-2zM1518 1203h2v2h-2zM1989 1409h2v2h-2zM1805 713h2v2h-2zM2097 1055h2v2h-2zM1494 1446h2v2h-2zM2051 971h2v2h-2zM1705 1029h2v2h-2zM2084 974h2v2h-2zM1531 1370h2v2h-2zM2072 868h2v2h-2zM1496 1400h2v2h-2zM1860 604h2v2h-2zM1341 967h2v2h-2zM1715 1023h2v2h-2zM1626 1062h2v2h-2zM2287 1404h2v2h-2zM1676 756h2v2h-2zM1921 508h2v2h-2zM1801 822h2v2h-2zM2185 790h2v2h-2zM1489 907h2v2h-2zM1407 1218h2v2h-2zM1925 1248h2v2h-2zM1636 926h2v2h-2zM1593 1046h2v2h-2zM1630 983h2v2h-2zM2364 1137h2v2h-2zM1549 821h2v2h-2zM1873 1110h2v2h-2zM1892 548h2v2h-2zM2376 1372h2v2h-2zM1907 1035h2v2h-2zM1935 895h2v2h-2zM1637 1451h2v2h-2zM2094 697h2v2h-2zM1735 804h2v2h-2zM1888 1268h2v2h-2zM1663 989h2v2h-2zM1756 1084h2v2h-2zM1847 893h2v2h-2zM2283 1481h2v2h-2zM1418 1119h2v2h-2zM1854 926h2v2h-2zM1507 1187h2v2h-2zM1583 1017h2v2h-2zM2250 1076h2v2h-2zM1552 725h2v2h-2zM1757 1325h2v2h-2zM1437 1319h2v2h-2zM1690 1189h2v2h-2zM1597 692h2v2h-2zM2184 985h2v2h-2zM2185 1312h2v2h-2zM2000 1041h2v2h-2zM1846 1356h2v2h-2zM2370 1380h2v2h-2zM1984 1425h2v2h-2zM1455 1278h2v2h-2zM1759 704h2v2h-2zM2046 1430h2v2h-2zM1763 1071h2v2h-2zM1450 968h2v2h-2zM1865 729h2v2h-2zM1814 1086h2v2h-2zM1879 658h2v2h-2zM1829 724h2v2h-2zM1965 792h2v2h-2zM1446 935h2v2h-2zM1682 762h2v2h-2zM1661 1444h2v2h-2zM1530 973h2v2h-2zM1799 751h2v2h-2zM1459 699h2v2h-2zM1734 1498h2v2h-2zM1703 942h2v2h-2zM2203 1042h2v2h-2zM2121 863h2v2h-2zM1453 972h2v2h-2zM2205 867h2v2h-2zM2166 1282h2v2h-2zM1713 1245h2v2h-2zM1898 1270h2v2h-2zM1841 1041h2v2h-2zM1918 978h2v2h-2zM2266 1261h2v2h-2zM1733 831h2v2h-2zM1571 1423h2v2h-2zM1672 1185h2v2h-2zM2270 1109h2v2h-2zM1450 1129h2v2h-2zM2380 1229h2v2h-2zM1460 1211h2v2h-2zM1682 947h2v2h-2zM1712 1075h2v2h-2zM2043 1370h2v2h-2zM2335 1188h2v2h-2zM1647 991h2v2h-2zM2102 673h2v2h-2zM1627 1110h2v2h-2zM1725 838h2v2h-2zM1507 1217h2v2h-2zM1974 992h2v2h-2zM1904 597h2v2h-2zM1900 1104h2v2h-2zM1894 879h2v2h-2zM1322 1004h2v2h-2zM1794 920h2v2h-2zM1972 1178h2v2h-2zM1970 1108h2v2h-2zM2204 575h2v2h-2zM2035 986h2v2h-2zM1540 1324h2v2h-2zM1707 1594h2v2h-2zM2359 1080h2v2h-2zM2164 583h2v2h-2zM1689 822h2v2h-2zM1510 1220h2v2h-2z"/><path d="M2042.0 566.0L2283.0 1356.0" stroke="#0000ff" stroke-width="1.1" fill="none"/><g fill="#0000ff"><path transform="translate(2044.0 572.7) rotate(163.0)" d="M-7.5 -4.2L0 -3.2L7.5 -4.2L0 6Z"/><rect x="2044.4" y="578.3" width="4" height="4"/><path transform="translate(2048.7 588.0) rotate(163.0)" d="M-7.5 -4.2L0 -3.2L7.5 -4.2L0 6Z"/><rect x="2050.6" y="598.6" width="4" height="4"/><path transform="translate(2056.4 613.3) rotate(163.0)" d="M-7.5 -4.2L0 -3.2L7.5 -4.2L0 6Z"/><rect x="2058.3" y="623.9" width="4" height="4"/><path transform="translate(2064.1 638.5) rotate(163.0)" d="M-7.5 -4.2L0 -3.2L7.5 -4.2L0 6Z"/><rect x="2066.0" y="649.1" width="4" height="4"/><path transform="translate(2071.8 663.8) rotate(163.0)" d="M-7.5 -4.2L0 -3.2L7.5 -4.2L0 6Z"/><rect x="2073.7" y="674.4" width="4" height="4"/><path transform="translate(2079.5 689.0) rotate(163.0)" d="M-7.5 -4.2L0 -3.2L7.5 -4.2L0 6Z"/><rect x="2081.4" y="699.6" width="4" height="4"/><path transform="translate(2087.2 714.3) rotate(163.0)" d="M-7.5 -4.2L0 -3.2L7.5 -4.2L0 6Z"/><rect x="2089.1" y="724.9" width="4" height="4"/><path transform="translate(2094.9 739.5) rotate(163.0)" d="M-7.5 -4.2L0 -3.2L7.5 -4.2L0 6Z"/><rect x="2096.8" y="750.1" width="4" height="4"/><path transform="translate(2102.6 764.8) rotate(163.0)" d="M-7.5 -4.2L0 -3.2L7.5 -4.2L0 6Z"/><rect x="2104.5" y="775.4" width="4" height="4"/><path transform="translate(2110.3 790.0) rotate(163.0)" d="M-7.5 -4.2L0 -3.2L7.5 -4.2L0 6Z"/><rect x="2112.2" y="800.6" width="4" height="4"/><path transform="translate(2118.0 815.3) rotate(163.0)" d="M-7.5 -4.2L0 -3.2L7.5 -4.2L0 6Z"/><rect x="2119.9" y="825.9" width="4" height="4"/><path transform="translate(2125.7 840.5) rotate(163.0)" d="M-7.5 -4.2L0 -3.2L7.5 -4.2L0 6Z"/><rect x="2127.6" y="851.1" width="4" height="4"/><path transform="translate(2133.4 865.8) rotate(163.0)" d="M-7.5 -4.2L0 -3.2L7.5 -4.2L0 6Z"/><rect x="2135.3" y="876.4" width="4" height="4"/><path transform="translate(2141.1 891.0) rotate(163.0)" d="M-7.5 -4.2L0 -3.2L7.5 -4.2L0 6Z"/><rect x="2143.0" y="901.6" width="4" height="4"/><path transform="translate(2148.9 916.3) rotate(163.0)" d="M-7.5 -4.2L0 -3.2L7.5 -4.2L0 6Z"/><rect x="2150.7" y="926.9" width="4" height="4"/><path transform="translate(2156.6 941.5) rotate(163.0)" d="M-7.5 -4.2L0 -3.2L7.5 -4.2L0 6Z"/><rect x="2158.4" y="952.1" width="4" height="4"/><path transform="translate(2164.3 966.8) rotate(163.0)" d="M-7.5 -4.2L0 -3.2L7.5 -4.2L0 6Z"/><rect x="2166.1" y="977.4" width="4" height="4"/><path transform="translate(2172.0 992.0) rotate(163.0)" d="M-7.5 -4.2L0 -3.2L7.5 -4.2L0 6Z"/><rect x="2173.8" y="1002.6" width="4" height="4"/><path transform="translate(2179.7 1017.3) rotate(163.0)" d="M-7.5 -4.2L0 -3.2L7.5 -4.2L0 6Z"/><rect x="2181.5" y="1027.9" width="4" height="4"/><path transform="translate(2187.4 1042.5) rotate(163.0)" d="M-7.5 -4.2L0 -3.2L7.5 -4.2L0 6Z"/><rect x="2189.2" y="1053.1" width="4" height="4"/><path transform="translate(2195.1 1067.8) rotate(163.0)" d="M-7.5 -4.2L0 -3.2L7.5 -4.2L0 6Z"/><rect x="2196.9" y="1078.4" width="4" height="4"/><path transform="translate(2202.8 1093.0) rotate(163.0)" d="M-7.5 -4.2L0 -3.2L7.5 -4.2L0 6Z"/><rect x="2204.6" y="1103.6" width="4" height="4"/><path transform="translate(2210.5 1118.3) rotate(163.0)" d="M-7.5 -4.2L0 -3.2L7.5 -4.2L0 6Z"/><rect x="2212.3" y="1128.9" width="4" height="4"/><path transform="translate(2218.2 1143.5) rotate(163.0)" d="M-7.5 -4.2L0 -3.2L7.5 -4.2L0 6Z"/><rect x="2220.0" y="1154.2" width="4" height="4"/><path transform="translate(2225.9 1168.8) rotate(163.0)" d="M-7.5 -4.2L0 -3.2L7.5 -4.2L0 6Z"/><rect x="2227.7" y="1179.4" width="4" height="4"/><path transform="translate(2233.6 1194.0) rotate(163.0)" d="M-7.5 -4.2L0 -3.2L7.5 -4.2L0 6Z"/><rect x="2235.4" y="1204.7" width="4" height="4"/><path transform="translate(2241.3 1219.3) rotate(163.0)" d="M-7.5 -4.2L0 -3.2L7.5 -4.2L0 6Z"/><rect x="2243.1" y="1229.9" width="4" height="4"/><path transform="translate(2249.0 1244.5) rotate(163.0)" d="M-7.5 -4.2L0 -3.2L7.5 -4.2L0 6Z"/><rect x="2250.8" y="1255.2" width="4" height="4"/><path transform="translate(2256.7 1269.8) rotate(163.0)" d="M-7.5 -4.2L0 -3.2L7.5 -4.2L0 6Z"/><rect x="2258.5" y="1280.4" width="4" height="4"/><path transform="translate(2264.4 1295.0) rotate(163.0)" d="M-7.5 -4.2L0 -3.2L7.5 -4.2L0 6Z"/><rect x="2266.3" y="1305.7" width="4" height="4"/><path transform="translate(2272.1 1320.3) rotate(163.0)" d="M-7.5 -4.2L0 -3.2L7.5 -4.2L0 6Z"/><rect x="2274.0" y="1330.9" width="4" height="4"/><path transform="translate(2279.8 1345.5) rotate(163.0)" d="M-7.5 -4.2L0 -3.2L7.5 -4.2L0 6Z"/><rect x="2280.5" y="1353.5" width="5" height="5"/></g><path d="M1920.5 614.7L2161.5 1404.7" stroke="#0000ff" stroke-width="1.1" fill="none"/><g fill="#0000ff"><path transform="translate(1923.3 624.0) rotate(-17.0)" d="M-7.5 -4.2L0 -3.2L7.5 -4.2L0 6Z"/><rect x="1925.2" y="634.6" width="4" height="4"/><path transform="translate(1931.0 649.2) rotate(-17.0)" d="M-7.5 -4.2L0 -3.2L7.5 -4.2L0 6Z"/><rect x="1932.9" y="659.8" width="4" height="4"/><path transform="translate(1938.7 674.5) rotate(-17.0)" d="M-7.5 -4.2L0 -3.2L7.5 -4.2L0 6Z"/><rect x="1940.6" y="685.1" width="4" height="4"/><path transform="translate(1946.4 699.7) rotate(-17.0)" d="M-7.5 -4.2L0 -3.2L7.5 -4.2L0 6Z"/><rect x="1948.3" y="710.3" width="4" height="4"/><path transform="translate(1954.1 725.0) rotate(-17.0)" d="M-7.5 -4.2L0 -3.2L7.5 -4.2L0 6Z"/><rect x="1956.0" y="735.6" width="4" height="4"/><path transform="translate(1961.8 750.2) rotate(-17.0)" d="M-7.5 -4.2L0 -3.2L7.5 -4.2L0 6Z"/><rect x="1963.7" y="760.8" width="4" height="4"/><path transform="translate(1969.5 775.5) rotate(-17.0)" d="M-7.5 -4.2L0 -3.2L7.5 -4.2L0 6Z"/><rect x="1971.4" y="786.1" width="4" height="4"/><path transform="translate(1977.2 800.7) rotate(-17.0)" d="M-7.5 -4.2L0 -3.2L7.5 -4.2L0 6Z"/><rect x="1979.1" y="811.3" width="4" height="4"/><path transform="translate(1984.9 826.0) rotate(-17.0)" d="M-7.5 -4.2L0 -3.2L7.5 -4.2L0 6Z"/><rect x="1986.8" y="836.6" width="4" height="4"/><path transform="translate(1992.7 851.2) rotate(-17.0)" d="M-7.5 -4.2L0 -3.2L7.5 -4.2L0 6Z"/><rect x="1994.5" y="861.8" width="4" height="4"/><path transform="translate(2000.4 876.5) rotate(-17.0)" d="M-7.5 -4.2L0 -3.2L7.5 -4.2L0 6Z"/><rect x="2002.2" y="887.1" width="4" height="4"/><path transform="translate(2008.1 901.7) rotate(-17.0)" d="M-7.5 -4.2L0 -3.2L7.5 -4.2L0 6Z"/><rect x="2009.9" y="912.3" width="4" height="4"/><path transform="translate(2015.8 927.0) rotate(-17.0)" d="M-7.5 -4.2L0 -3.2L7.5 -4.2L0 6Z"/><rect x="2017.6" y="937.6" width="4" height="4"/><path transform="translate(2023.5 952.2) rotate(-17.0)" d="M-7.5 -4.2L0 -3.2L7.5 -4.2L0 6Z"/><rect x="2025.3" y="962.8" width="4" height="4"/><path transform="translate(2031.2 977.5) rotate(-17.0)" d="M-7.5 -4.2L0 -3.2L7.5 -4.2L0 6Z"/><rect x="2033.0" y="988.1" width="4" height="4"/><path transform="translate(2038.9 1002.7) rotate(-17.0)" d="M-7.5 -4.2L0 -3.2L7.5 -4.2L0 6Z"/><rect x="2040.7" y="1013.3" width="4" height="4"/><path transform="translate(2046.6 1028.0) rotate(-17.0)" d="M-7.5 -4.2L0 -3.2L7.5 -4.2L0 6Z"/><rect x="2048.4" y="1038.6" width="4" height="4"/><path transform="translate(2054.3 1053.2) rotate(-17.0)" d="M-7.5 -4.2L0 -3.2L7.5 -4.2L0 6Z"/><rect x="2056.1" y="1063.9" width="4" height="4"/><path transform="translate(2062.0 1078.5) rotate(-17.0)" d="M-7.5 -4.2L0 -3.2L7.5 -4.2L0 6Z"/><rect x="2063.8" y="1089.1" width="4" height="4"/><path transform="translate(2069.7 1103.7) rotate(-17.0)" d="M-7.5 -4.2L0 -3.2L7.5 -4.2L0 6Z"/><rect x="2071.5" y="1114.4" width="4" height="4"/><path transform="translate(2077.4 1129.0) rotate(-17.0)" d="M-7.5 -4.2L0 -3.2L7.5 -4.2L0 6Z"/><rect x="2079.2" y="1139.6" width="4" height="4"/><path transform="translate(2085.1 1154.2) rotate(-17.0)" d="M-7.5 -4.2L0 -3.2L7.5 -4.2L0 6Z"/><rect x="2086.9" y="1164.9" width="4" height="4"/><path transform="translate(2092.8 1179.5) rotate(-17.0)" d="M-7.5 -4.2L0 -3.2L7.5 -4.2L0 6Z"/><rect x="2094.6" y="1190.1" width="4" height="4"/><path transform="translate(2100.5 1204.7) rotate(-17.0)" d="M-7.5 -4.2L0 -3.2L7.5 -4.2L0 6Z"/><rect x="2102.3" y="1215.4" width="4" height="4"/><path transform="translate(2108.2 1230.0) rotate(-17.0)" d="M-7.5 -4.2L0 -3.2L7.5 -4.2L0 6Z"/><rect x="2110.1" y="1240.6" width="4" height="4"/><path transform="translate(2115.9 1255.2) rotate(-17.0)" d="M-7.5 -4.2L0 -3.2L7.5 -4.2L0 6Z"/><rect x="2117.8" y="1265.9" width="4" height="4"/><path transform="translate(2123.6 1280.5) rotate(-17.0)" d="M-7.5 -4.2L0 -3.2L7.5 -4.2L0 6Z"/><rect x="2125.5" y="1291.1" width="4" height="4"/><path transform="translate(2131.3 1305.7) rotate(-17.0)" d="M-7.5 -4.2L0 -3.2L7.5 -4.2L0 6Z"/><rect x="2133.2" y="1316.4" width="4" height="4"/><path transform="translate(2139.0 1331.0) rotate(-17.0)" d="M-7.5 -4.2L0 -3.2L7.5 -4.2L0 6Z"/><rect x="2140.9" y="1341.6" width="4" height="4"/><path transform="translate(2146.7 1356.2) rotate(-17.0)" d="M-7.5 -4.2L0 -3.2L7.5 -4.2L0 6Z"/><rect x="2148.6" y="1366.9" width="4" height="4"/><path transform="translate(2154.4 1381.5) rotate(-17.0)" d="M-7.5 -4.2L0 -3.2L7.5 -4.2L0 6Z"/><rect x="1918.0" y="612.2" width="5" height="5"/></g><path d="M1799.0 663.4L2040.0 1453.4" stroke="#0000ff" stroke-width="1.1" fill="none"/><g fill="#0000ff"><path transform="translate(1801.0 669.9) rotate(163.0)" d="M-7.5 -4.2L0 -3.2L7.5 -4.2L0 6Z"/><rect x="1801.3" y="675.5" width="4" height="4"/><path transform="translate(1805.6 685.2) rotate(163.0)" d="M-7.5 -4.2L0 -3.2L7.5 -4.2L0 6Z"/><rect x="1807.5" y="695.8" width="4" height="4"/><path transform="translate(1813.3 710.4) rotate(163.0)" d="M-7.5 -4.2L0 -3.2L7.5 -4.2L0 6Z"/><rect x="1815.2" y="721.0" width="4" height="4"/><path transform="translate(1821.0 735.7) rotate(163.0)" d="M-7.5 -4.2L0 -3.2L7.5 -4.2L0 6Z"/><rect x="1822.9" y="746.3" width="4" height="4"/><path transform="translate(1828.7 760.9) rotate(163.0)" d="M-7.5 -4.2L0 -3.2L7.5 -4.2L0 6Z"/><rect x="1830.6" y="771.5" width="4" height="4"/><path transform="translate(1836.5 786.2) rotate(163.0)" d="M-7.5 -4.2L0 -3.2L7.5 -4.2L0 6Z"/><rect x="1838.3" y="796.8" width="4" height="4"/><path transform="translate(1844.2 811.4) rotate(163.0)" d="M-7.5 -4.2L0 -3.2L7.5 -4.2L0 6Z"/><rect x="1846.0" y="822.0" width="4" height="4"/><path transform="translate(1851.9 836.7) rotate(163.0)" d="M-7.5 -4.2L0 -3.2L7.5 -4.2L0 6Z"/><rect x="1853.7" y="847.3" width="4" height="4"/><path transform="translate(1859.6 861.9) rotate(163.0)" d="M-7.5 -4.2L0 -3.2L7.5 -4.2L0 6Z"/><rect x="1861.4" y="872.5" width="4" height="4"/><path transform="translate(1867.3 887.2) rotate(163.0)" d="M-7.5 -4.2L0 -3.2L7.5 -4.2L0 6Z"/><rect x="1869.1" y="897.8" width="4" height="4"/><path transform="translate(1875.0 912.4) rotate(163.0)" d="M-7.5 -4.2L0 -3.2L7.5 -4.2L0 6Z"/><rect x="1876.8" y="923.0" width="4" height="4"/><path transform="translate(1882.7 937.7) rotate(163.0)" d="M-7.5 -4.2L0 -3.2L7.5 -4.2L0 6Z"/><rect x="1884.5" y="948.3" width="4" height="4"/><path transform="translate(1890.4 962.9) rotate(163.0)" d="M-7.5 -4.2L0 -3.2L7.5 -4.2L0 6Z"/><rect x="1892.2" y="973.6" width="4" height="4"/><path transform="translate(1898.1 988.2) rotate(163.0)" d="M-7.5 -4.2L0 -3.2L7.5 -4.2L0 6Z"/><rect x="1899.9" y="998.8" width="4" height="4"/><path transform="translate(1905.8 1013.4) rotate(163.0)" d="M-7.5 -4.2L0 -3.2L7.5 -4.2L0 6Z"/><rect x="1907.6" y="1024.1" width="4" height="4"/><path transform="translate(1913.5 1038.7) rotate(163.0)" d="M-7.5 -4.2L0 -3.2L7.5 -4.2L0 6Z"/><rect x="1915.3" y="1049.3" width="4" height="4"/><path transform="translate(1921.2 1063.9) rotate(163.0)" d="M-7.5 -4.2L0 -3.2L7.5 -4.2L0 6Z"/><rect x="1923.0" y="1074.6" width="4" height="4"/><path transform="translate(1928.9 1089.2) rotate(163.0)" d="M-7.5 -4.2L0 -3.2L7.5 -4.2L0 6Z"/><rect x="1930.7" y="1099.8" width="4" height="4"/><path transform="translate(1936.6 1114.4) rotate(163.0)" d="M-7.5 -4.2L0 -3.2L7.5 -4.2L0 6Z"/><rect x="1938.4" y="1125.1" width="4" height="4"/><path transform="translate(1944.3 1139.7) rotate(163.0)" d="M-7.5 -4.2L0 -3.2L7.5 -4.2L0 6Z"/><rect x="1946.1" y="1150.3" width="4" height="4"/><path transform="translate(1952.0 1164.9) rotate(163.0)" d="M-7.5 -4.2L0 -3.2L7.5 -4.2L0 6Z"/><rect x="1953.9" y="1175.6" width="4" height="4"/><path transform="translate(1959.7 1190.2) rotate(163.0)" d="M-7.5 -4.2L0 -3.2L7.5 -4.2L0 6Z"/><rect x="1961.6" y="1200.8" width="4" height="4"/><path transform="translate(1967.4 1215.4) rotate(163.0)" d="M-7.5 -4.2L0 -3.2L7.5 -4.2L0 6Z"/><rect x="1969.3" y="1226.1" width="4" height="4"/><path transform="translate(1975.1 1240.7) rotate(163.0)" d="M-7.5 -4.2L0 -3.2L7.5 -4.2L0 6Z"/><rect x="1977.0" y="1251.3" width="4" height="4"/><path transform="translate(1982.8 1265.9) rotate(163.0)" d="M-7.5 -4.2L0 -3.2L7.5 -4.2L0 6Z"/><rect x="1984.7" y="1276.6" width="4" height="4"/><path transform="translate(1990.5 1291.2) rotate(163.0)" d="M-7.5 -4.2L0 -3.2L7.5 -4.2L0 6Z"/><rect x="1992.4" y="1301.8" width="4" height="4"/><path transform="translate(1998.2 1316.4) rotate(163.0)" d="M-7.5 -4.2L0 -3.2L7.5 -4.2L0 6Z"/><rect x="2000.1" y="1327.1" width="4" height="4"/><path transform="translate(2005.9 1341.7) rotate(163.0)" d="M-7.5 -4.2L0 -3.2L7.5 -4.2L0 6Z"/><rect x="2007.8" y="1352.3" width="4" height="4"/><path transform="translate(2013.6 1366.9) rotate(163.0)" d="M-7.5 -4.2L0 -3.2L7.5 -4.2L0 6Z"/><rect x="2015.5" y="1377.6" width="4" height="4"/><path transform="translate(2021.3 1392.2) rotate(163.0)" d="M-7.5 -4.2L0 -3.2L7.5 -4.2L0 6Z"/><rect x="2023.2" y="1402.8" width="4" height="4"/><path transform="translate(2029.0 1417.4) rotate(163.0)" d="M-7.5 -4.2L0 -3.2L7.5 -4.2L0 6Z"/><rect x="2030.9" y="1428.1" width="4" height="4"/><path transform="translate(2036.7 1442.7) rotate(163.0)" d="M-7.5 -4.2L0 -3.2L7.5 -4.2L0 6Z"/><rect x="2037.5" y="1450.9" width="5" height="5"/></g><path d="M1677.5 712.1L1918.5 1502.1" stroke="#0000ff" stroke-width="1.1" fill="none"/><g fill="#0000ff"><path transform="translate(1680.3 721.1) rotate(-17.0)" d="M-7.5 -4.2L0 -3.2L7.5 -4.2L0 6Z"/><rect x="1682.1" y="731.7" width="4" height="4"/><path transform="translate(1688.0 746.4) rotate(-17.0)" d="M-7.5 -4.2L0 -3.2L7.5 -4.2L0 6Z"/><rect x="1689.8" y="757.0" width="4" height="4"/><path transform="translate(1695.7 771.6) rotate(-17.0)" d="M-7.5 -4.2L0 -3.2L7.5 -4.2L0 6Z"/><rect x="1697.5" y="782.2" width="4" height="4"/><path transform="translate(1703.4 796.9) rotate(-17.0)" d="M-7.5 -4.2L0 -3.2L7.5 -4.2L0 6Z"/><rect x="1705.2" y="807.5" width="4" height="4"/><path transform="translate(1711.1 822.1) rotate(-17.0)" d="M-7.5 -4.2L0 -3.2L7.5 -4.2L0 6Z"/><rect x="1712.9" y="832.7" width="4" height="4"/><path transform="translate(1718.8 847.4) rotate(-17.0)" d="M-7.5 -4.2L0 -3.2L7.5 -4.2L0 6Z"/><rect x="1720.6" y="858.0" width="4" height="4"/><path transform="translate(1726.5 872.6) rotate(-17.0)" d="M-7.5 -4.2L0 -3.2L7.5 -4.2L0 6Z"/><rect x="1728.3" y="883.3" width="4" height="4"/><path transform="translate(1734.2 897.9) rotate(-17.0)" d="M-7.5 -4.2L0 -3.2L7.5 -4.2L0 6Z"/><rect x="1736.0" y="908.5" width="4" height="4"/><path transform="translate(1741.9 923.1) rotate(-17.0)" d="M-7.5 -4.2L0 -3.2L7.5 -4.2L0 6Z"/><rect x="1743.7" y="933.8" width="4" height="4"/><path transform="translate(1749.6 948.4) rotate(-17.0)" d="M-7.5 -4.2L0 -3.2L7.5 -4.2L0 6Z"/><rect x="1751.4" y="959.0" width="4" height="4"/><path transform="translate(1757.3 973.6) rotate(-17.0)" d="M-7.5 -4.2L0 -3.2L7.5 -4.2L0 6Z"/><rect x="1759.1" y="984.3" width="4" height="4"/><path transform="translate(1765.0 998.9) rotate(-17.0)" d="M-7.5 -4.2L0 -3.2L7.5 -4.2L0 6Z"/><rect x="1766.8" y="1009.5" width="4" height="4"/><path transform="translate(1772.7 1024.1) rotate(-17.0)" d="M-7.5 -4.2L0 -3.2L7.5 -4.2L0 6Z"/><rect x="1774.5" y="1034.8" width="4" height="4"/><path transform="translate(1780.4 1049.4) rotate(-17.0)" d="M-7.5 -4.2L0 -3.2L7.5 -4.2L0 6Z"/><rect x="1782.2" y="1060.0" width="4" height="4"/><path transform="translate(1788.1 1074.6) rotate(-17.0)" d="M-7.5 -4.2L0 -3.2L7.5 -4.2L0 6Z"/><rect x="1789.9" y="1085.3" width="4" height="4"/><path transform="translate(1795.8 1099.9) rotate(-17.0)" d="M-7.5 -4.2L0 -3.2L7.5 -4.2L0 6Z"/><rect x="1797.7" y="1110.5" width="4" height="4"/><path transform="translate(1803.5 1125.1) rotate(-17.0)" d="M-7.5 -4.2L0 -3.2L7.5 -4.2L0 6Z"/><rect x="1805.4" y="1135.8" width="4" height="4"/><path transform="translate(1811.2 1150.4) rotate(-17.0)" d="M-7.5 -4.2L0 -3.2L7.5 -4.2L0 6Z"/><rect x="1813.1" y="1161.0" width="4" height="4"/><path transform="translate(1818.9 1175.6) rotate(-17.0)" d="M-7.5 -4.2L0 -3.2L7.5 -4.2L0 6Z"/><rect x="1820.8" y="1186.3" width="4" height="4"/><path transform="translate(1826.6 1200.9) rotate(-17.0)" d="M-7.5 -4.2L0 -3.2L7.5 -4.2L0 6Z"/><rect x="1828.5" y="1211.5" width="4" height="4"/><path transform="translate(1834.3 1226.1) rotate(-17.0)" d="M-7.5 -4.2L0 -3.2L7.5 -4.2L0 6Z"/><rect x="1836.2" y="1236.8" width="4" height="4"/><path transform="translate(1842.0 1251.4) rotate(-17.0)" d="M-7.5 -4.2L0 -3.2L7.5 -4.2L0 6Z"/><rect x="1843.9" y="1262.0" width="4" height="4"/><path transform="translate(1849.7 1276.6) rotate(-17.0)" d="M-7.5 -4.2L0 -3.2L7.5 -4.2L0 6Z"/><rect x="1851.6" y="1287.3" width="4" height="4"/><path transform="translate(1857.4 1301.9) rotate(-17.0)" d="M-7.5 -4.2L0 -3.2L7.5 -4.2L0 6Z"/><rect x="1859.3" y="1312.5" width="4" height="4"/><path transform="translate(1865.1 1327.1) rotate(-17.0)" d="M-7.5 -4.2L0 -3.2L7.5 -4.2L0 6Z"/><rect x="1867.0" y="1337.8" width="4" height="4"/><path transform="translate(1872.8 1352.4) rotate(-17.0)" d="M-7.5 -4.2L0 -3.2L7.5 -4.2L0 6Z"/><rect x="1874.7" y="1363.0" width="4" height="4"/><path transform="translate(1880.5 1377.6) rotate(-17.0)" d="M-7.5 -4.2L0 -3.2L7.5 -4.2L0 6Z"/><rect x="1882.4" y="1388.3" width="4" height="4"/><path transform="translate(1888.2 1402.9) rotate(-17.0)" d="M-7.5 -4.2L0 -3.2L7.5 -4.2L0 6Z"/><rect x="1890.1" y="1413.5" width="4" height="4"/><path transform="translate(1895.9 1428.2) rotate(-17.0)" d="M-7.5 -4.2L0 -3.2L7.5 -4.2L0 6Z"/><rect x="1897.8" y="1438.8" width="4" height="4"/><path transform="translate(1903.6 1453.4) rotate(-17.0)" d="M-7.5 -4.2L0 -3.2L7.5 -4.2L0 6Z"/><rect x="1905.5" y="1464.0" width="4" height="4"/><path transform="translate(1911.3 1478.7) rotate(-17.0)" d="M-7.5 -4.2L0 -3.2L7.5 -4.2L0 6Z"/><rect x="1675.0" y="709.6" width="5" height="5"/></g><path d="M1556.0 760.8L1797.0 1550.8" stroke="#0000ff" stroke-width="1.1" fill="none"/><g fill="#0000ff"><path transform="translate(1557.9 767.0) rotate(163.0)" d="M-7.5 -4.2L0 -3.2L7.5 -4.2L0 6Z"/><rect x="1558.2" y="772.7" width="4" height="4"/><path transform="translate(1562.6 782.3) rotate(163.0)" d="M-7.5 -4.2L0 -3.2L7.5 -4.2L0 6Z"/><rect x="1564.4" y="793.0" width="4" height="4"/><path transform="translate(1570.3 807.6) rotate(163.0)" d="M-7.5 -4.2L0 -3.2L7.5 -4.2L0 6Z"/><rect x="1572.1" y="818.2" width="4" height="4"/><path transform="translate(1578.0 832.8) rotate(163.0)" d="M-7.5 -4.2L0 -3.2L7.5 -4.2L0 6Z"/><rect x="1579.8" y="843.5" width="4" height="4"/><path transform="translate(1585.7 858.1) rotate(163.0)" d="M-7.5 -4.2L0 -3.2L7.5 -4.2L0 6Z"/><rect x="1587.5" y="868.7" width="4" height="4"/><path transform="translate(1593.4 883.3) rotate(163.0)" d="M-7.5 -4.2L0 -3.2L7.5 -4.2L0 6Z"/><rect x="1595.2" y="894.0" width="4" height="4"/><path transform="translate(1601.1 908.6) rotate(163.0)" d="M-7.5 -4.2L0 -3.2L7.5 -4.2L0 6Z"/><rect x="1602.9" y="919.2" width="4" height="4"/><path transform="translate(1608.8 933.8) rotate(163.0)" d="M-7.5 -4.2L0 -3.2L7.5 -4.2L0 6Z"/><rect x="1610.6" y="944.5" width="4" height="4"/><path transform="translate(1616.5 959.1) rotate(163.0)" d="M-7.5 -4.2L0 -3.2L7.5 -4.2L0 6Z"/><rect x="1618.3" y="969.7" width="4" height="4"/><path transform="translate(1624.2 984.3) rotate(163.0)" d="M-7.5 -4.2L0 -3.2L7.5 -4.2L0 6Z"/><rect x="1626.0" y="995.0" width="4" height="4"/><path transform="translate(1631.9 1009.6) rotate(163.0)" d="M-7.5 -4.2L0 -3.2L7.5 -4.2L0 6Z"/><rect x="1633.7" y="1020.2" width="4" height="4"/><path transform="translate(1639.6 1034.8) rotate(163.0)" d="M-7.5 -4.2L0 -3.2L7.5 -4.2L0 6Z"/><rect x="1641.5" y="1045.5" width="4" height="4"/><path transform="translate(1647.3 1060.1) rotate(163.0)" d="M-7.5 -4.2L0 -3.2L7.5 -4.2L0 6Z"/><rect x="1649.2" y="1070.7" width="4" height="4"/><path transform="translate(1655.0 1085.3) rotate(163.0)" d="M-7.5 -4.2L0 -3.2L7.5 -4.2L0 6Z"/><rect x="1656.9" y="1096.0" width="4" height="4"/><path transform="translate(1662.7 1110.6) rotate(163.0)" d="M-7.5 -4.2L0 -3.2L7.5 -4.2L0 6Z"/><rect x="1664.6" y="1121.2" width="4" height="4"/><path transform="translate(1670.4 1135.8) rotate(163.0)" d="M-7.5 -4.2L0 -3.2L7.5 -4.2L0 6Z"/><rect x="1672.3" y="1146.5" width="4" height="4"/><path transform="translate(1678.1 1161.1) rotate(163.0)" d="M-7.5 -4.2L0 -3.2L7.5 -4.2L0 6Z"/><rect x="1680.0" y="1171.7" width="4" height="4"/><path transform="translate(1685.8 1186.3) rotate(163.0)" d="M-7.5 -4.2L0 -3.2L7.5 -4.2L0 6Z"/><rect x="1687.7" y="1197.0" width="4" height="4"/><path transform="translate(1693.5 1211.6) rotate(163.0)" d="M-7.5 -4.2L0 -3.2L7.5 -4.2L0 6Z"/><rect x="1695.4" y="1222.2" width="4" height="4"/><path transform="translate(1701.2 1236.8) rotate(163.0)" d="M-7.5 -4.2L0 -3.2L7.5 -4.2L0 6Z"/><rect x="1703.1" y="1247.5" width="4" height="4"/><path transform="translate(1708.9 1262.1) rotate(163.0)" d="M-7.5 -4.2L0 -3.2L7.5 -4.2L0 6Z"/><rect x="1710.8" y="1272.7" width="4" height="4"/><path transform="translate(1716.6 1287.3) rotate(163.0)" d="M-7.5 -4.2L0 -3.2L7.5 -4.2L0 6Z"/><rect x="1718.5" y="1298.0" width="4" height="4"/><path transform="translate(1724.3 1312.6) rotate(163.0)" d="M-7.5 -4.2L0 -3.2L7.5 -4.2L0 6Z"/><rect x="1726.2" y="1323.2" width="4" height="4"/><path transform="translate(1732.0 1337.9) rotate(163.0)" d="M-7.5 -4.2L0 -3.2L7.5 -4.2L0 6Z"/><rect x="1733.9" y="1348.5" width="4" height="4"/><path transform="translate(1739.7 1363.1) rotate(163.0)" d="M-7.5 -4.2L0 -3.2L7.5 -4.2L0 6Z"/><rect x="1741.6" y="1373.7" width="4" height="4"/><path transform="translate(1747.4 1388.4) rotate(163.0)" d="M-7.5 -4.2L0 -3.2L7.5 -4.2L0 6Z"/><rect x="1749.3" y="1399.0" width="4" height="4"/><path transform="translate(1755.1 1413.6) rotate(163.0)" d="M-7.5 -4.2L0 -3.2L7.5 -4.2L0 6Z"/><rect x="1757.0" y="1424.2" width="4" height="4"/><path transform="translate(1762.9 1438.9) rotate(163.0)" d="M-7.5 -4.2L0 -3.2L7.5 -4.2L0 6Z"/><rect x="1764.7" y="1449.5" width="4" height="4"/><path transform="translate(1770.6 1464.1) rotate(163.0)" d="M-7.5 -4.2L0 -3.2L7.5 -4.2L0 6Z"/><rect x="1772.4" y="1474.7" width="4" height="4"/><path transform="translate(1778.3 1489.4) rotate(163.0)" d="M-7.5 -4.2L0 -3.2L7.5 -4.2L0 6Z"/><rect x="1780.1" y="1500.0" width="4" height="4"/><path transform="translate(1786.0 1514.6) rotate(163.0)" d="M-7.5 -4.2L0 -3.2L7.5 -4.2L0 6Z"/><rect x="1787.8" y="1525.2" width="4" height="4"/><path transform="translate(1793.7 1539.9) rotate(163.0)" d="M-7.5 -4.2L0 -3.2L7.5 -4.2L0 6Z"/><rect x="1794.5" y="1548.3" width="5" height="5"/></g><path d="M1434.5 809.5L1675.5 1599.5" stroke="#0000ff" stroke-width="1.1" fill="none"/><g fill="#0000ff"><path transform="translate(1437.2 818.3) rotate(-17.0)" d="M-7.5 -4.2L0 -3.2L7.5 -4.2L0 6Z"/><rect x="1439.0" y="828.9" width="4" height="4"/><path transform="translate(1444.9 843.5) rotate(-17.0)" d="M-7.5 -4.2L0 -3.2L7.5 -4.2L0 6Z"/><rect x="1446.7" y="854.2" width="4" height="4"/><path transform="translate(1452.6 868.8) rotate(-17.0)" d="M-7.5 -4.2L0 -3.2L7.5 -4.2L0 6Z"/><rect x="1454.4" y="879.4" width="4" height="4"/><path transform="translate(1460.3 894.0) rotate(-17.0)" d="M-7.5 -4.2L0 -3.2L7.5 -4.2L0 6Z"/><rect x="1462.1" y="904.7" width="4" height="4"/><path transform="translate(1468.0 919.3) rotate(-17.0)" d="M-7.5 -4.2L0 -3.2L7.5 -4.2L0 6Z"/><rect x="1469.8" y="929.9" width="4" height="4"/><path transform="translate(1475.7 944.5) rotate(-17.0)" d="M-7.5 -4.2L0 -3.2L7.5 -4.2L0 6Z"/><rect x="1477.5" y="955.2" width="4" height="4"/><path transform="translate(1483.4 969.8) rotate(-17.0)" d="M-7.5 -4.2L0 -3.2L7.5 -4.2L0 6Z"/><rect x="1485.3" y="980.4" width="4" height="4"/><path transform="translate(1491.1 995.0) rotate(-17.0)" d="M-7.5 -4.2L0 -3.2L7.5 -4.2L0 6Z"/><rect x="1493.0" y="1005.7" width="4" height="4"/><path transform="translate(1498.8 1020.3) rotate(-17.0)" d="M-7.5 -4.2L0 -3.2L7.5 -4.2L0 6Z"/><rect x="1500.7" y="1030.9" width="4" height="4"/><path transform="translate(1506.5 1045.5) rotate(-17.0)" d="M-7.5 -4.2L0 -3.2L7.5 -4.2L0 6Z"/><rect x="1508.4" y="1056.2" width="4" height="4"/><path transform="translate(1514.2 1070.8) rotate(-17.0)" d="M-7.5 -4.2L0 -3.2L7.5 -4.2L0 6Z"/><rect x="1516.1" y="1081.4" width="4" height="4"/><path transform="translate(1521.9 1096.0) rotate(-17.0)" d="M-7.5 -4.2L0 -3.2L7.5 -4.2L0 6Z"/><rect x="1523.8" y="1106.7" width="4" height="4"/><path transform="translate(1529.6 1121.3) rotate(-17.0)" d="M-7.5 -4.2L0 -3.2L7.5 -4.2L0 6Z"/><rect x="1531.5" y="1131.9" width="4" height="4"/><path transform="translate(1537.3 1146.5) rotate(-17.0)" d="M-7.5 -4.2L0 -3.2L7.5 -4.2L0 6Z"/><rect x="1539.2" y="1157.2" width="4" height="4"/><path transform="translate(1545.0 1171.8) rotate(-17.0)" d="M-7.5 -4.2L0 -3.2L7.5 -4.2L0 6Z"/><rect x="1546.9" y="1182.4" width="4" height="4"/><path transform="translate(1552.7 1197.1) rotate(-17.0)" d="M-7.5 -4.2L0 -3.2L7.5 -4.2L0 6Z"/><rect x="1554.6" y="1207.7" width="4" height="4"/><path transform="translate(1560.4 1222.3) rotate(-17.0)" d="M-7.5 -4.2L0 -3.2L7.5 -4.2L0 6Z"/><rect x="1562.3" y="1232.9" width="4" height="4"/><path transform="translate(1568.1 1247.6) rotate(-17.0)" d="M-7.5 -4.2L0 -3.2L7.5 -4.2L0 6Z"/><rect x="1570.0" y="1258.2" width="4" height="4"/><path transform="translate(1575.8 1272.8) rotate(-17.0)" d="M-7.5 -4.2L0 -3.2L7.5 -4.2L0 6Z"/><rect x="1577.7" y="1283.4" width="4" height="4"/><path transform="translate(1583.5 1298.1) rotate(-17.0)" d="M-7.5 -4.2L0 -3.2L7.5 -4.2L0 6Z"/><rect x="1585.4" y="1308.7" width="4" height="4"/><path transform="translate(1591.2 1323.3) rotate(-17.0)" d="M-7.5 -4.2L0 -3.2L7.5 -4.2L0 6Z"/><rect x="1593.1" y="1333.9" width="4" height="4"/><path transform="translate(1598.9 1348.6) rotate(-17.0)" d="M-7.5 -4.2L0 -3.2L7.5 -4.2L0 6Z"/><rect x="1600.8" y="1359.2" width="4" height="4"/><path transform="translate(1606.6 1373.8) rotate(-17.0)" d="M-7.5 -4.2L0 -3.2L7.5 -4.2L0 6Z"/><rect x="1608.5" y="1384.4" width="4" height="4"/><path transform="translate(1614.4 1399.1) rotate(-17.0)" d="M-7.5 -4.2L0 -3.2L7.5 -4.2L0 6Z"/><rect x="1616.2" y="1409.7" width="4" height="4"/><path transform="translate(1622.1 1424.3) rotate(-17.0)" d="M-7.5 -4.2L0 -3.2L7.5 -4.2L0 6Z"/><rect x="1623.9" y="1434.9" width="4" height="4"/><path transform="translate(1629.8 1449.6) rotate(-17.0)" d="M-7.5 -4.2L0 -3.2L7.5 -4.2L0 6Z"/><rect x="1631.6" y="1460.2" width="4" height="4"/><path transform="translate(1637.5 1474.8) rotate(-17.0)" d="M-7.5 -4.2L0 -3.2L7.5 -4.2L0 6Z"/><rect x="1639.3" y="1485.4" width="4" height="4"/><path transform="translate(1645.2 1500.1) rotate(-17.0)" d="M-7.5 -4.2L0 -3.2L7.5 -4.2L0 6Z"/><rect x="1647.0" y="1510.7" width="4" height="4"/><path transform="translate(1652.9 1525.3) rotate(-17.0)" d="M-7.5 -4.2L0 -3.2L7.5 -4.2L0 6Z"/><rect x="1654.7" y="1535.9" width="4" height="4"/><path transform="translate(1660.6 1550.6) rotate(-17.0)" d="M-7.5 -4.2L0 -3.2L7.5 -4.2L0 6Z"/><rect x="1662.4" y="1561.2" width="4" height="4"/><path transform="translate(1668.3 1575.8) rotate(-17.0)" d="M-7.5 -4.2L0 -3.2L7.5 -4.2L0 6Z"/><rect x="1432.0" y="807.0" width="5" height="5"/></g><path d="M1500.6 1472.7L1556.5 1649.7" stroke="#0000ff" stroke-width="1.1" fill="none"/><g fill="#0000ff"><path transform="translate(1504.7 1485.5) rotate(163.0)" d="M-7.5 -4.2L0 -3.2L7.5 -4.2L0 6Z"/><rect x="1506.6" y="1496.1" width="4" height="4"/><path transform="translate(1512.6 1510.7) rotate(163.0)" d="M-7.5 -4.2L0 -3.2L7.5 -4.2L0 6Z"/><rect x="1514.6" y="1521.3" width="4" height="4"/><path transform="translate(1520.6 1535.9) rotate(163.0)" d="M-7.5 -4.2L0 -3.2L7.5 -4.2L0 6Z"/><rect x="1522.5" y="1546.5" width="4" height="4"/><path transform="translate(1528.5 1561.1) rotate(163.0)" d="M-7.5 -4.2L0 -3.2L7.5 -4.2L0 6Z"/><rect x="1530.5" y="1571.6" width="4" height="4"/><path transform="translate(1536.5 1586.2) rotate(163.0)" d="M-7.5 -4.2L0 -3.2L7.5 -4.2L0 6Z"/><rect x="1538.4" y="1596.8" width="4" height="4"/><path transform="translate(1544.4 1611.4) rotate(163.0)" d="M-7.5 -4.2L0 -3.2L7.5 -4.2L0 6Z"/><rect x="1546.4" y="1622.0" width="4" height="4"/><path transform="translate(1552.4 1636.6) rotate(163.0)" d="M-7.5 -4.2L0 -3.2L7.5 -4.2L0 6Z"/><rect x="1554.0" y="1647.2" width="5" height="5"/></g><text transform="translate(2025.5 566) rotate(-107)" text-anchor="middle" y="8.5" font-family="DejaVu Sans, Liberation Sans, sans-serif" font-size="23" fill="#e6e6e6">2</text><text transform="translate(1940 633.5) rotate(73)" text-anchor="middle" y="8.5" font-family="DejaVu Sans, Liberation Sans, sans-serif" font-size="23" fill="#e6e6e6">3</text><text transform="translate(1786 681) rotate(-107)" text-anchor="middle" y="8.5" font-family="DejaVu Sans, Liberation Sans, sans-serif" font-size="23" fill="#e6e6e6">4</text><text transform="translate(1699.5 728.5) rotate(73)" text-anchor="middle" y="8.5" font-family="DejaVu Sans, Liberation Sans, sans-serif" font-size="23" fill="#e6e6e6">7</text><text transform="translate(1539 761) rotate(-107)" text-anchor="middle" y="8.5" font-family="DejaVu Sans, Liberation Sans, sans-serif" font-size="23" fill="#e6e6e6">9</text><text transform="translate(1458.5 837) rotate(73)" text-anchor="middle" y="8.5" font-family="DejaVu Sans, Liberation Sans, sans-serif" font-size="23" fill="#e6e6e6">10</text><text transform="translate(2264.5 1341) rotate(-107)" text-anchor="middle" y="8.5" font-family="DejaVu Sans, Liberation Sans, sans-serif" font-size="23" fill="#e6e6e6">2</text><text transform="translate(2179.5 1408.5) rotate(73)" text-anchor="middle" y="8.5" font-family="DejaVu Sans, Liberation Sans, sans-serif" font-size="23" fill="#e6e6e6">3</text><text transform="translate(2021 1440) rotate(-107)" text-anchor="middle" y="8.5" font-family="DejaVu Sans, Liberation Sans, sans-serif" font-size="23" fill="#e6e6e6">4</text><text transform="translate(1926 1467.5) rotate(73)" text-anchor="middle" y="8.5" font-family="DejaVu Sans, Liberation Sans, sans-serif" font-size="23" fill="#e6e6e6">7</text><text transform="translate(1777 1538) rotate(-107)" text-anchor="middle" y="8.5" font-family="DejaVu Sans, Liberation Sans, sans-serif" font-size="23" fill="#e6e6e6">9</text><text transform="translate(1697.5 1611) rotate(73)" text-anchor="middle" y="8.5" font-family="DejaVu Sans, Liberation Sans, sans-serif" font-size="23" fill="#e6e6e6">10</text><text transform="translate(1485 1476) rotate(-107)" text-anchor="middle" y="8.5" font-family="DejaVu Sans, Liberation Sans, sans-serif" font-size="23" fill="#e6e6e6">11</text><text transform="translate(1531.5 1629) rotate(-107)" text-anchor="middle" y="8.5" font-family="DejaVu Sans, Liberation Sans, sans-serif" font-size="23" fill="#e6e6e6">11</text></svg>
</body></html>
